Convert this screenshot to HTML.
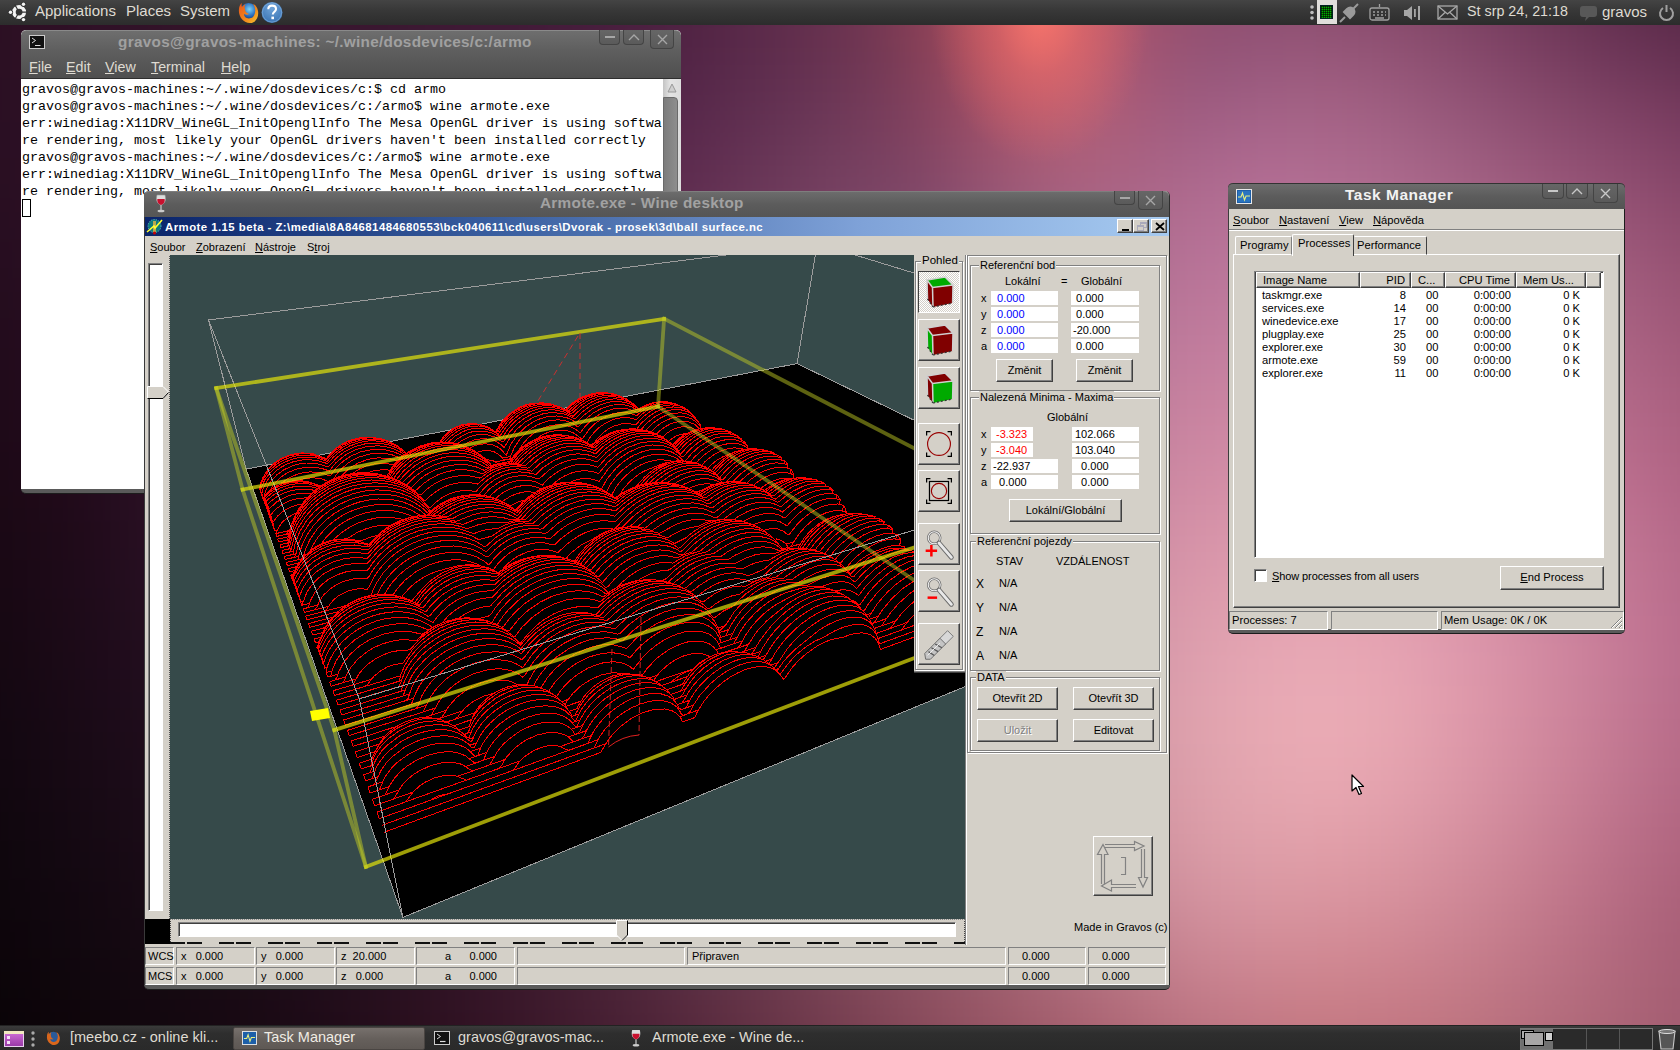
<!DOCTYPE html>
<html><head><meta charset="utf-8">
<style>
*{box-sizing:border-box;margin:0;padding:0}
html,body{width:1680px;height:1050px;overflow:hidden}
body{position:relative;font-family:"Liberation Sans",sans-serif;font-size:11px;color:#000;
background:#2a0f22}
.a{position:absolute}
#bg{left:0;top:0;width:1680px;height:1050px;
background:
 radial-gradient(ellipse 230px 190px at 1035px 28px, rgba(255,118,104,1) 0%, rgba(240,105,100,.75) 35%, rgba(200,90,100,0) 100%),
 radial-gradient(ellipse 520px 420px at 1330px 720px, rgba(238,176,186,1) 0%, rgba(225,160,175,.85) 40%, rgba(190,120,150,0) 100%),
 linear-gradient(115deg, #1e0a18 0%, #2a0f22 30%, #6a3358 52%, #a8698c 66%, #b8728e 78%, #7a3f60 100%);
}
.panel{left:0;width:1680px;height:25px;background:linear-gradient(#444 0%,#383838 40%,#2c2c2c 100%);color:#dfdbd2;font-size:15px}
.ptxt{position:absolute;top:3px;white-space:pre}
.mono{font-family:"Liberation Mono",monospace}
.win{position:absolute;background:#d4d0c8}
.tb{position:absolute;left:0;right:0;top:0;background:linear-gradient(#727272,#5c5c5c 60%,#555);border-radius:5px 5px 0 0}
.ttl{position:absolute;font-weight:bold;font-size:15px;white-space:pre;color:#a4a4a4;letter-spacing:.4px}
.wbtn{position:absolute;border:1px solid #444;border-top:none;border-radius:0 0 4px 4px;background:linear-gradient(#666,#5a5a5a)}
.t11{font-size:11px;white-space:pre;position:absolute}
.fld{position:absolute;background:#fff;height:16px;font-size:11px;line-height:16px;white-space:pre}
.btn{position:absolute;background:#d4d0c8;border:1px solid;border-color:#fff #404040 #404040 #fff;box-shadow:inset -1px -1px 0 #808080;font-size:11px;text-align:center;white-space:pre}
.grp{position:absolute;border:1px solid #808080;box-shadow:1px 1px 0 #fff, inset 1px 1px 0 #fff}
.grpl{position:absolute;background:#d4d0c8;font-size:11px;white-space:pre;padding:0 1px}
.sunk{position:absolute;border:1px solid;border-color:#808080 #fff #fff #808080}
</style></head><body>
<!--BG--><div class="a" style="left:0;top:0;width:1680px;height:1050px;overflow:hidden"><svg class="a" style="left:-120px;top:-120px;filter:blur(24px)" width="1920" height="1290" shape-rendering="crispEdges"><rect x="0" y="0" width="41" height="41" fill="#270c1d"/><rect x="40" y="0" width="41" height="41" fill="#290d1e"/><rect x="80" y="0" width="41" height="41" fill="#2a0e20"/><rect x="120" y="0" width="41" height="41" fill="#2c0e21"/><rect x="160" y="0" width="41" height="41" fill="#2e0f23"/><rect x="200" y="0" width="41" height="41" fill="#2f1024"/><rect x="240" y="0" width="41" height="41" fill="#301125"/><rect x="280" y="0" width="41" height="41" fill="#321126"/><rect x="320" y="0" width="41" height="41" fill="#331227"/><rect x="360" y="0" width="41" height="41" fill="#341229"/><rect x="400" y="0" width="41" height="41" fill="#36132a"/><rect x="440" y="0" width="41" height="41" fill="#37142b"/><rect x="480" y="0" width="41" height="41" fill="#39152c"/><rect x="520" y="0" width="41" height="41" fill="#3b152e"/><rect x="560" y="0" width="41" height="41" fill="#3d1630"/><rect x="600" y="0" width="41" height="41" fill="#3f1732"/><rect x="640" y="0" width="41" height="41" fill="#421934"/><rect x="680" y="0" width="41" height="41" fill="#451a36"/><rect x="720" y="0" width="41" height="41" fill="#481c38"/><rect x="760" y="0" width="41" height="41" fill="#4d1e3a"/><rect x="800" y="0" width="41" height="41" fill="#52213d"/><rect x="840" y="0" width="41" height="41" fill="#59253f"/><rect x="880" y="0" width="41" height="41" fill="#612942"/><rect x="920" y="0" width="41" height="41" fill="#6a2d45"/><rect x="960" y="0" width="41" height="41" fill="#763348"/><rect x="1000" y="0" width="41" height="41" fill="#83394c"/><rect x="1040" y="0" width="41" height="41" fill="#913f4f"/><rect x="1080" y="0" width="41" height="41" fill="#9f4653"/><rect x="1120" y="0" width="41" height="41" fill="#a84a56"/><rect x="1160" y="0" width="41" height="41" fill="#ab4d59"/><rect x="1200" y="0" width="41" height="41" fill="#a74c5b"/><rect x="1240" y="0" width="41" height="41" fill="#9e4a5d"/><rect x="1280" y="0" width="41" height="41" fill="#95475e"/><rect x="1320" y="0" width="41" height="41" fill="#8d445e"/><rect x="1360" y="0" width="41" height="41" fill="#86425e"/><rect x="1400" y="0" width="41" height="41" fill="#80405d"/><rect x="1440" y="0" width="41" height="41" fill="#7b3d5b"/><rect x="1480" y="0" width="41" height="41" fill="#763a58"/><rect x="1520" y="0" width="41" height="41" fill="#703755"/><rect x="1560" y="0" width="41" height="41" fill="#6a3251"/><rect x="1600" y="0" width="41" height="41" fill="#642e4d"/><rect x="1640" y="0" width="41" height="41" fill="#5d2a48"/><rect x="1680" y="0" width="41" height="41" fill="#572544"/><rect x="1720" y="0" width="41" height="41" fill="#512240"/><rect x="1760" y="0" width="41" height="41" fill="#4c1e3c"/><rect x="1800" y="0" width="41" height="41" fill="#471b39"/><rect x="1840" y="0" width="41" height="41" fill="#441836"/><rect x="1880" y="0" width="41" height="41" fill="#411534"/><rect x="0" y="40" width="41" height="41" fill="#270c1d"/><rect x="40" y="40" width="41" height="41" fill="#290d1f"/><rect x="80" y="40" width="41" height="41" fill="#2b0e21"/><rect x="120" y="40" width="41" height="41" fill="#2c0f22"/><rect x="160" y="40" width="41" height="41" fill="#2e1024"/><rect x="200" y="40" width="41" height="41" fill="#2f1025"/><rect x="240" y="40" width="41" height="41" fill="#311126"/><rect x="280" y="40" width="41" height="41" fill="#321227"/><rect x="320" y="40" width="41" height="41" fill="#331229"/><rect x="360" y="40" width="41" height="41" fill="#35132a"/><rect x="400" y="40" width="41" height="41" fill="#36142b"/><rect x="440" y="40" width="41" height="41" fill="#38152c"/><rect x="480" y="40" width="41" height="41" fill="#39152e"/><rect x="520" y="40" width="41" height="41" fill="#3b162f"/><rect x="560" y="40" width="41" height="41" fill="#3d1731"/><rect x="600" y="40" width="41" height="41" fill="#3f1833"/><rect x="640" y="40" width="41" height="41" fill="#421935"/><rect x="680" y="40" width="41" height="41" fill="#451b38"/><rect x="720" y="40" width="41" height="41" fill="#481d3a"/><rect x="760" y="40" width="41" height="41" fill="#4c1f3d"/><rect x="800" y="40" width="41" height="41" fill="#51223f"/><rect x="840" y="40" width="41" height="41" fill="#582542"/><rect x="880" y="40" width="41" height="41" fill="#5f2945"/><rect x="920" y="40" width="41" height="41" fill="#682e48"/><rect x="960" y="40" width="41" height="41" fill="#74344b"/><rect x="1000" y="40" width="41" height="41" fill="#833a4f"/><rect x="1040" y="40" width="41" height="41" fill="#944253"/><rect x="1080" y="40" width="41" height="41" fill="#a64a57"/><rect x="1120" y="40" width="41" height="41" fill="#b2505b"/><rect x="1160" y="40" width="41" height="41" fill="#b5535e"/><rect x="1200" y="40" width="41" height="41" fill="#ae5161"/><rect x="1240" y="40" width="41" height="41" fill="#a34e63"/><rect x="1280" y="40" width="41" height="41" fill="#974b64"/><rect x="1320" y="40" width="41" height="41" fill="#8f4865"/><rect x="1360" y="40" width="41" height="41" fill="#894765"/><rect x="1400" y="40" width="41" height="41" fill="#854564"/><rect x="1440" y="40" width="41" height="41" fill="#804362"/><rect x="1480" y="40" width="41" height="41" fill="#7c405f"/><rect x="1520" y="40" width="41" height="41" fill="#773c5c"/><rect x="1560" y="40" width="41" height="41" fill="#713857"/><rect x="1600" y="40" width="41" height="41" fill="#6a3353"/><rect x="1640" y="40" width="41" height="41" fill="#632e4e"/><rect x="1680" y="40" width="41" height="41" fill="#5c2a49"/><rect x="1720" y="40" width="41" height="41" fill="#562645"/><rect x="1760" y="40" width="41" height="41" fill="#512241"/><rect x="1800" y="40" width="41" height="41" fill="#4d1f3e"/><rect x="1840" y="40" width="41" height="41" fill="#491c3b"/><rect x="1880" y="40" width="41" height="41" fill="#461a39"/><rect x="0" y="80" width="41" height="41" fill="#270d1e"/><rect x="40" y="80" width="41" height="41" fill="#290e20"/><rect x="80" y="80" width="41" height="41" fill="#2b0e21"/><rect x="120" y="80" width="41" height="41" fill="#2d0f23"/><rect x="160" y="80" width="41" height="41" fill="#2e1025"/><rect x="200" y="80" width="41" height="41" fill="#301126"/><rect x="240" y="80" width="41" height="41" fill="#311127"/><rect x="280" y="80" width="41" height="41" fill="#321228"/><rect x="320" y="80" width="41" height="41" fill="#34132a"/><rect x="360" y="80" width="41" height="41" fill="#35142b"/><rect x="400" y="80" width="41" height="41" fill="#37142c"/><rect x="440" y="80" width="41" height="41" fill="#38152e"/><rect x="480" y="80" width="41" height="41" fill="#3a162f"/><rect x="520" y="80" width="41" height="41" fill="#3c1731"/><rect x="560" y="80" width="41" height="41" fill="#3e1833"/><rect x="600" y="80" width="41" height="41" fill="#401935"/><rect x="640" y="80" width="41" height="41" fill="#421a37"/><rect x="680" y="80" width="41" height="41" fill="#451c3a"/><rect x="720" y="80" width="41" height="41" fill="#491d3c"/><rect x="760" y="80" width="41" height="41" fill="#4c203f"/><rect x="800" y="80" width="41" height="41" fill="#512342"/><rect x="840" y="80" width="41" height="41" fill="#572645"/><rect x="880" y="80" width="41" height="41" fill="#5e2a48"/><rect x="920" y="80" width="41" height="41" fill="#662f4b"/><rect x="960" y="80" width="41" height="41" fill="#71344e"/><rect x="1000" y="80" width="41" height="41" fill="#803b51"/><rect x="1040" y="80" width="41" height="41" fill="#944356"/><rect x="1080" y="80" width="41" height="41" fill="#aa4d5a"/><rect x="1120" y="80" width="41" height="41" fill="#bc555f"/><rect x="1160" y="80" width="41" height="41" fill="#bf5863"/><rect x="1200" y="80" width="41" height="41" fill="#b45666"/><rect x="1240" y="80" width="41" height="41" fill="#a55168"/><rect x="1280" y="80" width="41" height="41" fill="#974e6a"/><rect x="1320" y="80" width="41" height="41" fill="#8f4c6b"/><rect x="1360" y="80" width="41" height="41" fill="#8c4b6c"/><rect x="1400" y="80" width="41" height="41" fill="#894a6b"/><rect x="1440" y="80" width="41" height="41" fill="#87496a"/><rect x="1480" y="80" width="41" height="41" fill="#834667"/><rect x="1520" y="80" width="41" height="41" fill="#7e4363"/><rect x="1560" y="80" width="41" height="41" fill="#783e5f"/><rect x="1600" y="80" width="41" height="41" fill="#713959"/><rect x="1640" y="80" width="41" height="41" fill="#6a3454"/><rect x="1680" y="80" width="41" height="41" fill="#632f4f"/><rect x="1720" y="80" width="41" height="41" fill="#5d2b4b"/><rect x="1760" y="80" width="41" height="41" fill="#572747"/><rect x="1800" y="80" width="41" height="41" fill="#532443"/><rect x="1840" y="80" width="41" height="41" fill="#502141"/><rect x="1880" y="80" width="41" height="41" fill="#4d1e3e"/><rect x="0" y="120" width="41" height="41" fill="#270d1e"/><rect x="40" y="120" width="41" height="41" fill="#290e20"/><rect x="80" y="120" width="41" height="41" fill="#2b0f22"/><rect x="120" y="120" width="41" height="41" fill="#2d1024"/><rect x="160" y="120" width="41" height="41" fill="#2e1025"/><rect x="200" y="120" width="41" height="41" fill="#301127"/><rect x="240" y="120" width="41" height="41" fill="#311228"/><rect x="280" y="120" width="41" height="41" fill="#331329"/><rect x="320" y="120" width="41" height="41" fill="#34132b"/><rect x="360" y="120" width="41" height="41" fill="#36142c"/><rect x="400" y="120" width="41" height="41" fill="#37152d"/><rect x="440" y="120" width="41" height="41" fill="#39162f"/><rect x="480" y="120" width="41" height="41" fill="#3a1730"/><rect x="520" y="120" width="41" height="41" fill="#3c1832"/><rect x="560" y="120" width="41" height="41" fill="#3f1935"/><rect x="600" y="120" width="41" height="41" fill="#411a37"/><rect x="640" y="120" width="41" height="41" fill="#431b39"/><rect x="680" y="120" width="41" height="41" fill="#461d3c"/><rect x="720" y="120" width="41" height="41" fill="#4a1f3f"/><rect x="760" y="120" width="41" height="41" fill="#4d2142"/><rect x="800" y="120" width="41" height="41" fill="#522444"/><rect x="840" y="120" width="41" height="41" fill="#582848"/><rect x="880" y="120" width="41" height="41" fill="#5e2c4b"/><rect x="920" y="120" width="41" height="41" fill="#66304e"/><rect x="960" y="120" width="41" height="41" fill="#6f3551"/><rect x="1000" y="120" width="41" height="41" fill="#7d3b54"/><rect x="1040" y="120" width="41" height="41" fill="#924458"/><rect x="1080" y="120" width="41" height="41" fill="#ab4e5d"/><rect x="1120" y="120" width="41" height="41" fill="#c15963"/><rect x="1160" y="120" width="41" height="41" fill="#c55d68"/><rect x="1200" y="120" width="41" height="41" fill="#b6596b"/><rect x="1240" y="120" width="41" height="41" fill="#a4536d"/><rect x="1280" y="120" width="41" height="41" fill="#965070"/><rect x="1320" y="120" width="41" height="41" fill="#915072"/><rect x="1360" y="120" width="41" height="41" fill="#905173"/><rect x="1400" y="120" width="41" height="41" fill="#905173"/><rect x="1440" y="120" width="41" height="41" fill="#8e5072"/><rect x="1480" y="120" width="41" height="41" fill="#8b4d6f"/><rect x="1520" y="120" width="41" height="41" fill="#864a6b"/><rect x="1560" y="120" width="41" height="41" fill="#804566"/><rect x="1600" y="120" width="41" height="41" fill="#793f61"/><rect x="1640" y="120" width="41" height="41" fill="#723a5b"/><rect x="1680" y="120" width="41" height="41" fill="#6b3556"/><rect x="1720" y="120" width="41" height="41" fill="#643151"/><rect x="1760" y="120" width="41" height="41" fill="#5f2d4d"/><rect x="1800" y="120" width="41" height="41" fill="#5b2a4a"/><rect x="1840" y="120" width="41" height="41" fill="#582747"/><rect x="1880" y="120" width="41" height="41" fill="#552444"/><rect x="0" y="160" width="41" height="41" fill="#260d1e"/><rect x="40" y="160" width="41" height="41" fill="#280e20"/><rect x="80" y="160" width="41" height="41" fill="#2b0f22"/><rect x="120" y="160" width="41" height="41" fill="#2d1024"/><rect x="160" y="160" width="41" height="41" fill="#2e1126"/><rect x="200" y="160" width="41" height="41" fill="#301127"/><rect x="240" y="160" width="41" height="41" fill="#311228"/><rect x="280" y="160" width="41" height="41" fill="#33132a"/><rect x="320" y="160" width="41" height="41" fill="#34142b"/><rect x="360" y="160" width="41" height="41" fill="#36152d"/><rect x="400" y="160" width="41" height="41" fill="#38162e"/><rect x="440" y="160" width="41" height="41" fill="#391630"/><rect x="480" y="160" width="41" height="41" fill="#3b1832"/><rect x="520" y="160" width="41" height="41" fill="#3d1934"/><rect x="560" y="160" width="41" height="41" fill="#401a36"/><rect x="600" y="160" width="41" height="41" fill="#421b39"/><rect x="640" y="160" width="41" height="41" fill="#451c3b"/><rect x="680" y="160" width="41" height="41" fill="#481e3e"/><rect x="720" y="160" width="41" height="41" fill="#4c2041"/><rect x="760" y="160" width="41" height="41" fill="#502344"/><rect x="800" y="160" width="41" height="41" fill="#542647"/><rect x="840" y="160" width="41" height="41" fill="#5a2a4b"/><rect x="880" y="160" width="41" height="41" fill="#602e4e"/><rect x="920" y="160" width="41" height="41" fill="#673251"/><rect x="960" y="160" width="41" height="41" fill="#6f3754"/><rect x="1000" y="160" width="41" height="41" fill="#7c3c57"/><rect x="1040" y="160" width="41" height="41" fill="#8e445b"/><rect x="1080" y="160" width="41" height="41" fill="#a54d60"/><rect x="1120" y="160" width="41" height="41" fill="#ba5866"/><rect x="1160" y="160" width="41" height="41" fill="#c05c6b"/><rect x="1200" y="160" width="41" height="41" fill="#b35a6f"/><rect x="1240" y="160" width="41" height="41" fill="#a35673"/><rect x="1280" y="160" width="41" height="41" fill="#985476"/><rect x="1320" y="160" width="41" height="41" fill="#955579"/><rect x="1360" y="160" width="41" height="41" fill="#97577b"/><rect x="1400" y="160" width="41" height="41" fill="#98587b"/><rect x="1440" y="160" width="41" height="41" fill="#97587a"/><rect x="1480" y="160" width="41" height="41" fill="#945577"/><rect x="1520" y="160" width="41" height="41" fill="#8f5173"/><rect x="1560" y="160" width="41" height="41" fill="#8a4c6e"/><rect x="1600" y="160" width="41" height="41" fill="#834669"/><rect x="1640" y="160" width="41" height="41" fill="#7c4163"/><rect x="1680" y="160" width="41" height="41" fill="#753c5e"/><rect x="1720" y="160" width="41" height="41" fill="#6f3759"/><rect x="1760" y="160" width="41" height="41" fill="#693455"/><rect x="1800" y="160" width="41" height="41" fill="#653051"/><rect x="1840" y="160" width="41" height="41" fill="#612d4e"/><rect x="1880" y="160" width="41" height="41" fill="#5d294a"/><rect x="0" y="200" width="41" height="41" fill="#250c1e"/><rect x="40" y="200" width="41" height="41" fill="#280e20"/><rect x="80" y="200" width="41" height="41" fill="#2a0f22"/><rect x="120" y="200" width="41" height="41" fill="#2c1024"/><rect x="160" y="200" width="41" height="41" fill="#2e1026"/><rect x="200" y="200" width="41" height="41" fill="#301127"/><rect x="240" y="200" width="41" height="41" fill="#311229"/><rect x="280" y="200" width="41" height="41" fill="#33132a"/><rect x="320" y="200" width="41" height="41" fill="#35142c"/><rect x="360" y="200" width="41" height="41" fill="#36152e"/><rect x="400" y="200" width="41" height="41" fill="#38162f"/><rect x="440" y="200" width="41" height="41" fill="#3a1731"/><rect x="480" y="200" width="41" height="41" fill="#3c1833"/><rect x="520" y="200" width="41" height="41" fill="#3f1936"/><rect x="560" y="200" width="41" height="41" fill="#411b38"/><rect x="600" y="200" width="41" height="41" fill="#441c3b"/><rect x="640" y="200" width="41" height="41" fill="#471e3e"/><rect x="680" y="200" width="41" height="41" fill="#4b2041"/><rect x="720" y="200" width="41" height="41" fill="#4f2244"/><rect x="760" y="200" width="41" height="41" fill="#532547"/><rect x="800" y="200" width="41" height="41" fill="#58294b"/><rect x="840" y="200" width="41" height="41" fill="#5d2d4e"/><rect x="880" y="200" width="41" height="41" fill="#633152"/><rect x="920" y="200" width="41" height="41" fill="#6a3555"/><rect x="960" y="200" width="41" height="41" fill="#723a58"/><rect x="1000" y="200" width="41" height="41" fill="#7c3e5b"/><rect x="1040" y="200" width="41" height="41" fill="#8c455f"/><rect x="1080" y="200" width="41" height="41" fill="#9f4e64"/><rect x="1120" y="200" width="41" height="41" fill="#b1576a"/><rect x="1160" y="200" width="41" height="41" fill="#b75c6f"/><rect x="1200" y="200" width="41" height="41" fill="#b05c74"/><rect x="1240" y="200" width="41" height="41" fill="#a55a79"/><rect x="1280" y="200" width="41" height="41" fill="#9e5a7d"/><rect x="1320" y="200" width="41" height="41" fill="#9d5c81"/><rect x="1360" y="200" width="41" height="41" fill="#a05f83"/><rect x="1400" y="200" width="41" height="41" fill="#a26083"/><rect x="1440" y="200" width="41" height="41" fill="#a15f82"/><rect x="1480" y="200" width="41" height="41" fill="#9d5d7f"/><rect x="1520" y="200" width="41" height="41" fill="#98587b"/><rect x="1560" y="200" width="41" height="41" fill="#925476"/><rect x="1600" y="200" width="41" height="41" fill="#8c4e71"/><rect x="1640" y="200" width="41" height="41" fill="#86496b"/><rect x="1680" y="200" width="41" height="41" fill="#804466"/><rect x="1720" y="200" width="41" height="41" fill="#7b3f62"/><rect x="1760" y="200" width="41" height="41" fill="#763b5e"/><rect x="1800" y="200" width="41" height="41" fill="#703759"/><rect x="1840" y="200" width="41" height="41" fill="#6b3355"/><rect x="1880" y="200" width="41" height="41" fill="#672f51"/><rect x="0" y="240" width="41" height="41" fill="#240c1d"/><rect x="40" y="240" width="41" height="41" fill="#270d20"/><rect x="80" y="240" width="41" height="41" fill="#290e22"/><rect x="120" y="240" width="41" height="41" fill="#2b0f24"/><rect x="160" y="240" width="41" height="41" fill="#2d1026"/><rect x="200" y="240" width="41" height="41" fill="#2f1127"/><rect x="240" y="240" width="41" height="41" fill="#311229"/><rect x="280" y="240" width="41" height="41" fill="#33132b"/><rect x="320" y="240" width="41" height="41" fill="#35142d"/><rect x="360" y="240" width="41" height="41" fill="#37152e"/><rect x="400" y="240" width="41" height="41" fill="#391630"/><rect x="440" y="240" width="41" height="41" fill="#3b1832"/><rect x="480" y="240" width="41" height="41" fill="#3e1935"/><rect x="520" y="240" width="41" height="41" fill="#401a37"/><rect x="560" y="240" width="41" height="41" fill="#431c3a"/><rect x="600" y="240" width="41" height="41" fill="#461d3d"/><rect x="640" y="240" width="41" height="41" fill="#4a1f40"/><rect x="680" y="240" width="41" height="41" fill="#4e2143"/><rect x="720" y="240" width="41" height="41" fill="#522446"/><rect x="760" y="240" width="41" height="41" fill="#57274a"/><rect x="800" y="240" width="41" height="41" fill="#5c2b4e"/><rect x="840" y="240" width="41" height="41" fill="#623052"/><rect x="880" y="240" width="41" height="41" fill="#683556"/><rect x="920" y="240" width="41" height="41" fill="#6e3a5a"/><rect x="960" y="240" width="41" height="41" fill="#753d5d"/><rect x="1000" y="240" width="41" height="41" fill="#7d4160"/><rect x="1040" y="240" width="41" height="41" fill="#894764"/><rect x="1080" y="240" width="41" height="41" fill="#994f6a"/><rect x="1120" y="240" width="41" height="41" fill="#a75770"/><rect x="1160" y="240" width="41" height="41" fill="#ae5d75"/><rect x="1200" y="240" width="41" height="41" fill="#ac5f7a"/><rect x="1240" y="240" width="41" height="41" fill="#a75f7f"/><rect x="1280" y="240" width="41" height="41" fill="#a46084"/><rect x="1320" y="240" width="41" height="41" fill="#a66389"/><rect x="1360" y="240" width="41" height="41" fill="#a9668b"/><rect x="1400" y="240" width="41" height="41" fill="#aa678b"/><rect x="1440" y="240" width="41" height="41" fill="#a8668a"/><rect x="1480" y="240" width="41" height="41" fill="#a56487"/><rect x="1520" y="240" width="41" height="41" fill="#a06082"/><rect x="1560" y="240" width="41" height="41" fill="#9b5b7e"/><rect x="1600" y="240" width="41" height="41" fill="#955678"/><rect x="1640" y="240" width="41" height="41" fill="#905073"/><rect x="1680" y="240" width="41" height="41" fill="#8a4b6e"/><rect x="1720" y="240" width="41" height="41" fill="#86476a"/><rect x="1760" y="240" width="41" height="41" fill="#814266"/><rect x="1800" y="240" width="41" height="41" fill="#7b3e61"/><rect x="1840" y="240" width="41" height="41" fill="#75395c"/><rect x="1880" y="240" width="41" height="41" fill="#703557"/><rect x="0" y="280" width="41" height="41" fill="#230c1c"/><rect x="40" y="280" width="41" height="41" fill="#260d1f"/><rect x="80" y="280" width="41" height="41" fill="#280e21"/><rect x="120" y="280" width="41" height="41" fill="#2b0f23"/><rect x="160" y="280" width="41" height="41" fill="#2d1025"/><rect x="200" y="280" width="41" height="41" fill="#2f1127"/><rect x="240" y="280" width="41" height="41" fill="#311229"/><rect x="280" y="280" width="41" height="41" fill="#33132b"/><rect x="320" y="280" width="41" height="41" fill="#35142d"/><rect x="360" y="280" width="41" height="41" fill="#37152f"/><rect x="400" y="280" width="41" height="41" fill="#3a1731"/><rect x="440" y="280" width="41" height="41" fill="#3c1834"/><rect x="480" y="280" width="41" height="41" fill="#3f1a36"/><rect x="520" y="280" width="41" height="41" fill="#421b39"/><rect x="560" y="280" width="41" height="41" fill="#451d3c"/><rect x="600" y="280" width="41" height="41" fill="#481f3f"/><rect x="640" y="280" width="41" height="41" fill="#4c2142"/><rect x="680" y="280" width="41" height="41" fill="#502445"/><rect x="720" y="280" width="41" height="41" fill="#552649"/><rect x="760" y="280" width="41" height="41" fill="#5a2a4d"/><rect x="800" y="280" width="41" height="41" fill="#602e51"/><rect x="840" y="280" width="41" height="41" fill="#663455"/><rect x="880" y="280" width="41" height="41" fill="#6c395a"/><rect x="920" y="280" width="41" height="41" fill="#733e5e"/><rect x="960" y="280" width="41" height="41" fill="#784262"/><rect x="1000" y="280" width="41" height="41" fill="#7c4464"/><rect x="1040" y="280" width="41" height="41" fill="#874a69"/><rect x="1080" y="280" width="41" height="41" fill="#945270"/><rect x="1120" y="280" width="41" height="41" fill="#9f5a77"/><rect x="1160" y="280" width="41" height="41" fill="#a75f7c"/><rect x="1200" y="280" width="41" height="41" fill="#aa6281"/><rect x="1240" y="280" width="41" height="41" fill="#aa6486"/><rect x="1280" y="280" width="41" height="41" fill="#ab678a"/><rect x="1320" y="280" width="41" height="41" fill="#ae6a90"/><rect x="1360" y="280" width="41" height="41" fill="#b16c92"/><rect x="1400" y="280" width="41" height="41" fill="#b16d92"/><rect x="1440" y="280" width="41" height="41" fill="#af6c90"/><rect x="1480" y="280" width="41" height="41" fill="#ac6a8d"/><rect x="1520" y="280" width="41" height="41" fill="#a86689"/><rect x="1560" y="280" width="41" height="41" fill="#a36284"/><rect x="1600" y="280" width="41" height="41" fill="#9e5d7f"/><rect x="1640" y="280" width="41" height="41" fill="#99577a"/><rect x="1680" y="280" width="41" height="41" fill="#945275"/><rect x="1720" y="280" width="41" height="41" fill="#8f4e71"/><rect x="1760" y="280" width="41" height="41" fill="#8a496c"/><rect x="1800" y="280" width="41" height="41" fill="#844467"/><rect x="1840" y="280" width="41" height="41" fill="#7e3f62"/><rect x="1880" y="280" width="41" height="41" fill="#783a5d"/><rect x="0" y="320" width="41" height="41" fill="#220b1b"/><rect x="40" y="320" width="41" height="41" fill="#240c1e"/><rect x="80" y="320" width="41" height="41" fill="#270d20"/><rect x="120" y="320" width="41" height="41" fill="#290e22"/><rect x="160" y="320" width="41" height="41" fill="#2c0f24"/><rect x="200" y="320" width="41" height="41" fill="#2e1126"/><rect x="240" y="320" width="41" height="41" fill="#301229"/><rect x="280" y="320" width="41" height="41" fill="#32132b"/><rect x="320" y="320" width="41" height="41" fill="#35142d"/><rect x="360" y="320" width="41" height="41" fill="#37162f"/><rect x="400" y="320" width="41" height="41" fill="#3a1732"/><rect x="440" y="320" width="41" height="41" fill="#3d1934"/><rect x="480" y="320" width="41" height="41" fill="#401a37"/><rect x="520" y="320" width="41" height="41" fill="#431c3a"/><rect x="560" y="320" width="41" height="41" fill="#461e3d"/><rect x="600" y="320" width="41" height="41" fill="#4a2040"/><rect x="640" y="320" width="41" height="41" fill="#4f2344"/><rect x="680" y="320" width="41" height="41" fill="#532648"/><rect x="720" y="320" width="41" height="41" fill="#58294b"/><rect x="760" y="320" width="41" height="41" fill="#5e2d50"/><rect x="800" y="320" width="41" height="41" fill="#643254"/><rect x="840" y="320" width="41" height="41" fill="#6a3759"/><rect x="880" y="320" width="41" height="41" fill="#703c5d"/><rect x="920" y="320" width="41" height="41" fill="#764162"/><rect x="960" y="320" width="41" height="41" fill="#7b4566"/><rect x="1000" y="320" width="41" height="41" fill="#7f4869"/><rect x="1040" y="320" width="41" height="41" fill="#874d6f"/><rect x="1080" y="320" width="41" height="41" fill="#925575"/><rect x="1120" y="320" width="41" height="41" fill="#9c5c7c"/><rect x="1160" y="320" width="41" height="41" fill="#a46282"/><rect x="1200" y="320" width="41" height="41" fill="#aa6687"/><rect x="1240" y="320" width="41" height="41" fill="#ad6a8c"/><rect x="1280" y="320" width="41" height="41" fill="#b06d90"/><rect x="1320" y="320" width="41" height="41" fill="#b47095"/><rect x="1360" y="320" width="41" height="41" fill="#b67297"/><rect x="1400" y="320" width="41" height="41" fill="#b77297"/><rect x="1440" y="320" width="41" height="41" fill="#b57195"/><rect x="1480" y="320" width="41" height="41" fill="#b26f93"/><rect x="1520" y="320" width="41" height="41" fill="#ae6c8f"/><rect x="1560" y="320" width="41" height="41" fill="#aa688a"/><rect x="1600" y="320" width="41" height="41" fill="#a66385"/><rect x="1640" y="320" width="41" height="41" fill="#a15e80"/><rect x="1680" y="320" width="41" height="41" fill="#9c597b"/><rect x="1720" y="320" width="41" height="41" fill="#975476"/><rect x="1760" y="320" width="41" height="41" fill="#924f71"/><rect x="1800" y="320" width="41" height="41" fill="#8c4a6c"/><rect x="1840" y="320" width="41" height="41" fill="#864567"/><rect x="1880" y="320" width="41" height="41" fill="#803f62"/><rect x="0" y="360" width="41" height="41" fill="#200a1a"/><rect x="40" y="360" width="41" height="41" fill="#230b1c"/><rect x="80" y="360" width="41" height="41" fill="#250c1f"/><rect x="120" y="360" width="41" height="41" fill="#280e21"/><rect x="160" y="360" width="41" height="41" fill="#2a0f23"/><rect x="200" y="360" width="41" height="41" fill="#2d1026"/><rect x="240" y="360" width="41" height="41" fill="#2f1128"/><rect x="280" y="360" width="41" height="41" fill="#32132b"/><rect x="320" y="360" width="41" height="41" fill="#35142d"/><rect x="360" y="360" width="41" height="41" fill="#371630"/><rect x="400" y="360" width="41" height="41" fill="#3a1732"/><rect x="440" y="360" width="41" height="41" fill="#3d1935"/><rect x="480" y="360" width="41" height="41" fill="#411b38"/><rect x="520" y="360" width="41" height="41" fill="#441d3b"/><rect x="560" y="360" width="41" height="41" fill="#481f3f"/><rect x="600" y="360" width="41" height="41" fill="#4c2242"/><rect x="640" y="360" width="41" height="41" fill="#512546"/><rect x="680" y="360" width="41" height="41" fill="#56284a"/><rect x="720" y="360" width="41" height="41" fill="#5b2c4e"/><rect x="760" y="360" width="41" height="41" fill="#613052"/><rect x="800" y="360" width="41" height="41" fill="#663557"/><rect x="840" y="360" width="41" height="41" fill="#6d3a5c"/><rect x="880" y="360" width="41" height="41" fill="#733f61"/><rect x="920" y="360" width="41" height="41" fill="#784465"/><rect x="960" y="360" width="41" height="41" fill="#7d486a"/><rect x="1000" y="360" width="41" height="41" fill="#834d6f"/><rect x="1040" y="360" width="41" height="41" fill="#8a5274"/><rect x="1080" y="360" width="41" height="41" fill="#93597a"/><rect x="1120" y="360" width="41" height="41" fill="#9d6081"/><rect x="1160" y="360" width="41" height="41" fill="#a56687"/><rect x="1200" y="360" width="41" height="41" fill="#ab6a8c"/><rect x="1240" y="360" width="41" height="41" fill="#b16e91"/><rect x="1280" y="360" width="41" height="41" fill="#b57195"/><rect x="1320" y="360" width="41" height="41" fill="#b97499"/><rect x="1360" y="360" width="41" height="41" fill="#bb769b"/><rect x="1400" y="360" width="41" height="41" fill="#bc779b"/><rect x="1440" y="360" width="41" height="41" fill="#ba7699"/><rect x="1480" y="360" width="41" height="41" fill="#b87497"/><rect x="1520" y="360" width="41" height="41" fill="#b57193"/><rect x="1560" y="360" width="41" height="41" fill="#b16d8f"/><rect x="1600" y="360" width="41" height="41" fill="#ad688a"/><rect x="1640" y="360" width="41" height="41" fill="#a86485"/><rect x="1680" y="360" width="41" height="41" fill="#a35f80"/><rect x="1720" y="360" width="41" height="41" fill="#9e5a7b"/><rect x="1760" y="360" width="41" height="41" fill="#995476"/><rect x="1800" y="360" width="41" height="41" fill="#934f70"/><rect x="1840" y="360" width="41" height="41" fill="#8d4a6b"/><rect x="1880" y="360" width="41" height="41" fill="#874466"/><rect x="0" y="400" width="41" height="41" fill="#1e0918"/><rect x="40" y="400" width="41" height="41" fill="#210b1b"/><rect x="80" y="400" width="41" height="41" fill="#230c1d"/><rect x="120" y="400" width="41" height="41" fill="#260d1f"/><rect x="160" y="400" width="41" height="41" fill="#290e22"/><rect x="200" y="400" width="41" height="41" fill="#2c1024"/><rect x="240" y="400" width="41" height="41" fill="#2e1127"/><rect x="280" y="400" width="41" height="41" fill="#31132a"/><rect x="320" y="400" width="41" height="41" fill="#34142d"/><rect x="360" y="400" width="41" height="41" fill="#371630"/><rect x="400" y="400" width="41" height="41" fill="#3b1833"/><rect x="440" y="400" width="41" height="41" fill="#3e1a36"/><rect x="480" y="400" width="41" height="41" fill="#411c39"/><rect x="520" y="400" width="41" height="41" fill="#451e3c"/><rect x="560" y="400" width="41" height="41" fill="#492140"/><rect x="600" y="400" width="41" height="41" fill="#4e2343"/><rect x="640" y="400" width="41" height="41" fill="#522747"/><rect x="680" y="400" width="41" height="41" fill="#582a4c"/><rect x="720" y="400" width="41" height="41" fill="#5d2e50"/><rect x="760" y="400" width="41" height="41" fill="#633255"/><rect x="800" y="400" width="41" height="41" fill="#693759"/><rect x="840" y="400" width="41" height="41" fill="#6f3d5e"/><rect x="880" y="400" width="41" height="41" fill="#754264"/><rect x="920" y="400" width="41" height="41" fill="#7b4769"/><rect x="960" y="400" width="41" height="41" fill="#814c6e"/><rect x="1000" y="400" width="41" height="41" fill="#875173"/><rect x="1040" y="400" width="41" height="41" fill="#8e5779"/><rect x="1080" y="400" width="41" height="41" fill="#965d7f"/><rect x="1120" y="400" width="41" height="41" fill="#9f6385"/><rect x="1160" y="400" width="41" height="41" fill="#a7698b"/><rect x="1200" y="400" width="41" height="41" fill="#ae6e90"/><rect x="1240" y="400" width="41" height="41" fill="#b47294"/><rect x="1280" y="400" width="41" height="41" fill="#b97698"/><rect x="1320" y="400" width="41" height="41" fill="#bd799b"/><rect x="1360" y="400" width="41" height="41" fill="#c07a9d"/><rect x="1400" y="400" width="41" height="41" fill="#c07b9e"/><rect x="1440" y="400" width="41" height="41" fill="#bf7a9d"/><rect x="1480" y="400" width="41" height="41" fill="#bd789a"/><rect x="1520" y="400" width="41" height="41" fill="#ba7597"/><rect x="1560" y="400" width="41" height="41" fill="#b77293"/><rect x="1600" y="400" width="41" height="41" fill="#b36d8e"/><rect x="1640" y="400" width="41" height="41" fill="#ae6989"/><rect x="1680" y="400" width="41" height="41" fill="#aa6484"/><rect x="1720" y="400" width="41" height="41" fill="#a55f7f"/><rect x="1760" y="400" width="41" height="41" fill="#9f597a"/><rect x="1800" y="400" width="41" height="41" fill="#9a5474"/><rect x="1840" y="400" width="41" height="41" fill="#934e6f"/><rect x="1880" y="400" width="41" height="41" fill="#8d486a"/><rect x="0" y="440" width="41" height="41" fill="#1d0917"/><rect x="40" y="440" width="41" height="41" fill="#1f0a19"/><rect x="80" y="440" width="41" height="41" fill="#220b1b"/><rect x="120" y="440" width="41" height="41" fill="#240c1e"/><rect x="160" y="440" width="41" height="41" fill="#270d20"/><rect x="200" y="440" width="41" height="41" fill="#2a0f23"/><rect x="240" y="440" width="41" height="41" fill="#2d1126"/><rect x="280" y="440" width="41" height="41" fill="#311229"/><rect x="320" y="440" width="41" height="41" fill="#34142d"/><rect x="360" y="440" width="41" height="41" fill="#371630"/><rect x="400" y="440" width="41" height="41" fill="#3b1833"/><rect x="440" y="440" width="41" height="41" fill="#3e1a36"/><rect x="480" y="440" width="41" height="41" fill="#421d3a"/><rect x="520" y="440" width="41" height="41" fill="#461f3d"/><rect x="560" y="440" width="41" height="41" fill="#4a2241"/><rect x="600" y="440" width="41" height="41" fill="#4f2545"/><rect x="640" y="440" width="41" height="41" fill="#542849"/><rect x="680" y="440" width="41" height="41" fill="#592c4d"/><rect x="720" y="440" width="41" height="41" fill="#5f3052"/><rect x="760" y="440" width="41" height="41" fill="#653557"/><rect x="800" y="440" width="41" height="41" fill="#6b3a5c"/><rect x="840" y="440" width="41" height="41" fill="#713f61"/><rect x="880" y="440" width="41" height="41" fill="#774566"/><rect x="920" y="440" width="41" height="41" fill="#7e4a6b"/><rect x="960" y="440" width="41" height="41" fill="#845071"/><rect x="1000" y="440" width="41" height="41" fill="#8b5576"/><rect x="1040" y="440" width="41" height="41" fill="#925b7c"/><rect x="1080" y="440" width="41" height="41" fill="#9a6182"/><rect x="1120" y="440" width="41" height="41" fill="#a36788"/><rect x="1160" y="440" width="41" height="41" fill="#ab6d8e"/><rect x="1200" y="440" width="41" height="41" fill="#b27293"/><rect x="1240" y="440" width="41" height="41" fill="#b97697"/><rect x="1280" y="440" width="41" height="41" fill="#be7a9b"/><rect x="1320" y="440" width="41" height="41" fill="#c27d9e"/><rect x="1360" y="440" width="41" height="41" fill="#c47fa0"/><rect x="1400" y="440" width="41" height="41" fill="#c57fa0"/><rect x="1440" y="440" width="41" height="41" fill="#c47e9f"/><rect x="1480" y="440" width="41" height="41" fill="#c27c9d"/><rect x="1520" y="440" width="41" height="41" fill="#bf7a9a"/><rect x="1560" y="440" width="41" height="41" fill="#bc7696"/><rect x="1600" y="440" width="41" height="41" fill="#b87292"/><rect x="1640" y="440" width="41" height="41" fill="#b46d8d"/><rect x="1680" y="440" width="41" height="41" fill="#b06888"/><rect x="1720" y="440" width="41" height="41" fill="#aa6383"/><rect x="1760" y="440" width="41" height="41" fill="#a55d7d"/><rect x="1800" y="440" width="41" height="41" fill="#9f5778"/><rect x="1840" y="440" width="41" height="41" fill="#995273"/><rect x="1880" y="440" width="41" height="41" fill="#934c6e"/><rect x="0" y="480" width="41" height="41" fill="#1b0815"/><rect x="40" y="480" width="41" height="41" fill="#1d0917"/><rect x="80" y="480" width="41" height="41" fill="#200a19"/><rect x="120" y="480" width="41" height="41" fill="#220b1c"/><rect x="160" y="480" width="41" height="41" fill="#250c1e"/><rect x="200" y="480" width="41" height="41" fill="#290e22"/><rect x="240" y="480" width="41" height="41" fill="#2c1025"/><rect x="280" y="480" width="41" height="41" fill="#301229"/><rect x="320" y="480" width="41" height="41" fill="#33142c"/><rect x="360" y="480" width="41" height="41" fill="#371630"/><rect x="400" y="480" width="41" height="41" fill="#3a1833"/><rect x="440" y="480" width="41" height="41" fill="#3e1b36"/><rect x="480" y="480" width="41" height="41" fill="#421d3a"/><rect x="520" y="480" width="41" height="41" fill="#46203e"/><rect x="560" y="480" width="41" height="41" fill="#4b2341"/><rect x="600" y="480" width="41" height="41" fill="#502645"/><rect x="640" y="480" width="41" height="41" fill="#552a4a"/><rect x="680" y="480" width="41" height="41" fill="#5b2e4e"/><rect x="720" y="480" width="41" height="41" fill="#603253"/><rect x="760" y="480" width="41" height="41" fill="#673758"/><rect x="800" y="480" width="41" height="41" fill="#6d3c5d"/><rect x="840" y="480" width="41" height="41" fill="#734263"/><rect x="880" y="480" width="41" height="41" fill="#7a4768"/><rect x="920" y="480" width="41" height="41" fill="#814d6e"/><rect x="960" y="480" width="41" height="41" fill="#875374"/><rect x="1000" y="480" width="41" height="41" fill="#8f597a"/><rect x="1040" y="480" width="41" height="41" fill="#965f7f"/><rect x="1080" y="480" width="41" height="41" fill="#9f6585"/><rect x="1120" y="480" width="41" height="41" fill="#a76b8b"/><rect x="1160" y="480" width="41" height="41" fill="#af7191"/><rect x="1200" y="480" width="41" height="41" fill="#b77695"/><rect x="1240" y="480" width="41" height="41" fill="#bd7b9a"/><rect x="1280" y="480" width="41" height="41" fill="#c37e9d"/><rect x="1320" y="480" width="41" height="41" fill="#c781a0"/><rect x="1360" y="480" width="41" height="41" fill="#c983a2"/><rect x="1400" y="480" width="41" height="41" fill="#ca83a2"/><rect x="1440" y="480" width="41" height="41" fill="#c983a2"/><rect x="1480" y="480" width="41" height="41" fill="#c781a0"/><rect x="1520" y="480" width="41" height="41" fill="#c47e9d"/><rect x="1560" y="480" width="41" height="41" fill="#c17b99"/><rect x="1600" y="480" width="41" height="41" fill="#be7695"/><rect x="1640" y="480" width="41" height="41" fill="#ba7291"/><rect x="1680" y="480" width="41" height="41" fill="#b56c8b"/><rect x="1720" y="480" width="41" height="41" fill="#b06686"/><rect x="1760" y="480" width="41" height="41" fill="#aa6181"/><rect x="1800" y="480" width="41" height="41" fill="#a45b7b"/><rect x="1840" y="480" width="41" height="41" fill="#9e5576"/><rect x="1880" y="480" width="41" height="41" fill="#984f71"/><rect x="0" y="520" width="41" height="41" fill="#190713"/><rect x="40" y="520" width="41" height="41" fill="#1b0815"/><rect x="80" y="520" width="41" height="41" fill="#1e0917"/><rect x="120" y="520" width="41" height="41" fill="#200a1a"/><rect x="160" y="520" width="41" height="41" fill="#230c1d"/><rect x="200" y="520" width="41" height="41" fill="#270d20"/><rect x="240" y="520" width="41" height="41" fill="#2b1024"/><rect x="280" y="520" width="41" height="41" fill="#2f1228"/><rect x="320" y="520" width="41" height="41" fill="#33142c"/><rect x="360" y="520" width="41" height="41" fill="#36162f"/><rect x="400" y="520" width="41" height="41" fill="#3a1833"/><rect x="440" y="520" width="41" height="41" fill="#3e1b36"/><rect x="480" y="520" width="41" height="41" fill="#421e3a"/><rect x="520" y="520" width="41" height="41" fill="#47203e"/><rect x="560" y="520" width="41" height="41" fill="#4b2442"/><rect x="600" y="520" width="41" height="41" fill="#502746"/><rect x="640" y="520" width="41" height="41" fill="#562b4a"/><rect x="680" y="520" width="41" height="41" fill="#5b2f4f"/><rect x="720" y="520" width="41" height="41" fill="#623454"/><rect x="760" y="520" width="41" height="41" fill="#683959"/><rect x="800" y="520" width="41" height="41" fill="#6e3e5f"/><rect x="840" y="520" width="41" height="41" fill="#754464"/><rect x="880" y="520" width="41" height="41" fill="#7c4a6a"/><rect x="920" y="520" width="41" height="41" fill="#835070"/><rect x="960" y="520" width="41" height="41" fill="#8b5676"/><rect x="1000" y="520" width="41" height="41" fill="#925c7c"/><rect x="1040" y="520" width="41" height="41" fill="#9a6382"/><rect x="1080" y="520" width="41" height="41" fill="#a36988"/><rect x="1120" y="520" width="41" height="41" fill="#ab6f8e"/><rect x="1160" y="520" width="41" height="41" fill="#b37593"/><rect x="1200" y="520" width="41" height="41" fill="#bb7a98"/><rect x="1240" y="520" width="41" height="41" fill="#c27f9c"/><rect x="1280" y="520" width="41" height="41" fill="#c7839f"/><rect x="1320" y="520" width="41" height="41" fill="#cb86a2"/><rect x="1360" y="520" width="41" height="41" fill="#ce88a4"/><rect x="1400" y="520" width="41" height="41" fill="#ce88a5"/><rect x="1440" y="520" width="41" height="41" fill="#ce88a4"/><rect x="1480" y="520" width="41" height="41" fill="#cc86a3"/><rect x="1520" y="520" width="41" height="41" fill="#c983a0"/><rect x="1560" y="520" width="41" height="41" fill="#c67f9d"/><rect x="1600" y="520" width="41" height="41" fill="#c37b99"/><rect x="1640" y="520" width="41" height="41" fill="#bf7694"/><rect x="1680" y="520" width="41" height="41" fill="#ba708f"/><rect x="1720" y="520" width="41" height="41" fill="#b46a89"/><rect x="1760" y="520" width="41" height="41" fill="#af6484"/><rect x="1800" y="520" width="41" height="41" fill="#a95e7e"/><rect x="1840" y="520" width="41" height="41" fill="#a25879"/><rect x="1880" y="520" width="41" height="41" fill="#9c5274"/><rect x="0" y="560" width="41" height="41" fill="#170612"/><rect x="40" y="560" width="41" height="41" fill="#190713"/><rect x="80" y="560" width="41" height="41" fill="#1c0816"/><rect x="120" y="560" width="41" height="41" fill="#1e0918"/><rect x="160" y="560" width="41" height="41" fill="#210b1b"/><rect x="200" y="560" width="41" height="41" fill="#250d1e"/><rect x="240" y="560" width="41" height="41" fill="#2a0f23"/><rect x="280" y="560" width="41" height="41" fill="#2e1227"/><rect x="320" y="560" width="41" height="41" fill="#32142b"/><rect x="360" y="560" width="41" height="41" fill="#36162f"/><rect x="400" y="560" width="41" height="41" fill="#391832"/><rect x="440" y="560" width="41" height="41" fill="#3e1b36"/><rect x="480" y="560" width="41" height="41" fill="#421e3a"/><rect x="520" y="560" width="41" height="41" fill="#46213e"/><rect x="560" y="560" width="41" height="41" fill="#4b2442"/><rect x="600" y="560" width="41" height="41" fill="#512846"/><rect x="640" y="560" width="41" height="41" fill="#562c4b"/><rect x="680" y="560" width="41" height="41" fill="#5c3050"/><rect x="720" y="560" width="41" height="41" fill="#623555"/><rect x="760" y="560" width="41" height="41" fill="#693a5a"/><rect x="800" y="560" width="41" height="41" fill="#704060"/><rect x="840" y="560" width="41" height="41" fill="#774666"/><rect x="880" y="560" width="41" height="41" fill="#7e4c6b"/><rect x="920" y="560" width="41" height="41" fill="#865272"/><rect x="960" y="560" width="41" height="41" fill="#8e5978"/><rect x="1000" y="560" width="41" height="41" fill="#965f7e"/><rect x="1040" y="560" width="41" height="41" fill="#9e6684"/><rect x="1080" y="560" width="41" height="41" fill="#a76d8a"/><rect x="1120" y="560" width="41" height="41" fill="#af7390"/><rect x="1160" y="560" width="41" height="41" fill="#b77995"/><rect x="1200" y="560" width="41" height="41" fill="#bf7f9a"/><rect x="1240" y="560" width="41" height="41" fill="#c6839e"/><rect x="1280" y="560" width="41" height="41" fill="#cc87a2"/><rect x="1320" y="560" width="41" height="41" fill="#d08aa5"/><rect x="1360" y="560" width="41" height="41" fill="#d38da7"/><rect x="1400" y="560" width="41" height="41" fill="#d38ea8"/><rect x="1440" y="560" width="41" height="41" fill="#d38da7"/><rect x="1480" y="560" width="41" height="41" fill="#d18ba6"/><rect x="1520" y="560" width="41" height="41" fill="#cf88a3"/><rect x="1560" y="560" width="41" height="41" fill="#cc84a0"/><rect x="1600" y="560" width="41" height="41" fill="#c8809c"/><rect x="1640" y="560" width="41" height="41" fill="#c37a97"/><rect x="1680" y="560" width="41" height="41" fill="#be7492"/><rect x="1720" y="560" width="41" height="41" fill="#b96d8c"/><rect x="1760" y="560" width="41" height="41" fill="#b36787"/><rect x="1800" y="560" width="41" height="41" fill="#ad6181"/><rect x="1840" y="560" width="41" height="41" fill="#a65b7c"/><rect x="1880" y="560" width="41" height="41" fill="#a05577"/><rect x="0" y="600" width="41" height="41" fill="#150610"/><rect x="40" y="600" width="41" height="41" fill="#170712"/><rect x="80" y="600" width="41" height="41" fill="#1a0814"/><rect x="120" y="600" width="41" height="41" fill="#1d0916"/><rect x="160" y="600" width="41" height="41" fill="#200a19"/><rect x="200" y="600" width="41" height="41" fill="#230c1d"/><rect x="240" y="600" width="41" height="41" fill="#280f22"/><rect x="280" y="600" width="41" height="41" fill="#2d1126"/><rect x="320" y="600" width="41" height="41" fill="#31142a"/><rect x="360" y="600" width="41" height="41" fill="#34162e"/><rect x="400" y="600" width="41" height="41" fill="#381832"/><rect x="440" y="600" width="41" height="41" fill="#3d1b35"/><rect x="480" y="600" width="41" height="41" fill="#411e39"/><rect x="520" y="600" width="41" height="41" fill="#46213d"/><rect x="560" y="600" width="41" height="41" fill="#4b2541"/><rect x="600" y="600" width="41" height="41" fill="#502846"/><rect x="640" y="600" width="41" height="41" fill="#562d4b"/><rect x="680" y="600" width="41" height="41" fill="#5c3150"/><rect x="720" y="600" width="41" height="41" fill="#633655"/><rect x="760" y="600" width="41" height="41" fill="#6a3c5a"/><rect x="800" y="600" width="41" height="41" fill="#714160"/><rect x="840" y="600" width="41" height="41" fill="#784766"/><rect x="880" y="600" width="41" height="41" fill="#804e6c"/><rect x="920" y="600" width="41" height="41" fill="#885473"/><rect x="960" y="600" width="41" height="41" fill="#905b79"/><rect x="1000" y="600" width="41" height="41" fill="#99627f"/><rect x="1040" y="600" width="41" height="41" fill="#a16986"/><rect x="1080" y="600" width="41" height="41" fill="#aa708c"/><rect x="1120" y="600" width="41" height="41" fill="#b37792"/><rect x="1160" y="600" width="41" height="41" fill="#bb7d97"/><rect x="1200" y="600" width="41" height="41" fill="#c3839c"/><rect x="1240" y="600" width="41" height="41" fill="#ca88a1"/><rect x="1280" y="600" width="41" height="41" fill="#d08ca4"/><rect x="1320" y="600" width="41" height="41" fill="#d490a7"/><rect x="1360" y="600" width="41" height="41" fill="#d792a9"/><rect x="1400" y="600" width="41" height="41" fill="#d893aa"/><rect x="1440" y="600" width="41" height="41" fill="#d893aa"/><rect x="1480" y="600" width="41" height="41" fill="#d791a9"/><rect x="1520" y="600" width="41" height="41" fill="#d48ea7"/><rect x="1560" y="600" width="41" height="41" fill="#d18aa3"/><rect x="1600" y="600" width="41" height="41" fill="#cd849f"/><rect x="1640" y="600" width="41" height="41" fill="#c87f9b"/><rect x="1680" y="600" width="41" height="41" fill="#c37895"/><rect x="1720" y="600" width="41" height="41" fill="#bd7190"/><rect x="1760" y="600" width="41" height="41" fill="#b76a8a"/><rect x="1800" y="600" width="41" height="41" fill="#b06485"/><rect x="1840" y="600" width="41" height="41" fill="#aa5d7f"/><rect x="1880" y="600" width="41" height="41" fill="#a3577a"/><rect x="0" y="640" width="41" height="41" fill="#13050f"/><rect x="40" y="640" width="41" height="41" fill="#160611"/><rect x="80" y="640" width="41" height="41" fill="#180713"/><rect x="120" y="640" width="41" height="41" fill="#1b0916"/><rect x="160" y="640" width="41" height="41" fill="#1e0a18"/><rect x="200" y="640" width="41" height="41" fill="#220c1c"/><rect x="240" y="640" width="41" height="41" fill="#270e21"/><rect x="280" y="640" width="41" height="41" fill="#2b1125"/><rect x="320" y="640" width="41" height="41" fill="#2f1329"/><rect x="360" y="640" width="41" height="41" fill="#33162d"/><rect x="400" y="640" width="41" height="41" fill="#371831"/><rect x="440" y="640" width="41" height="41" fill="#3c1b34"/><rect x="480" y="640" width="41" height="41" fill="#401e38"/><rect x="520" y="640" width="41" height="41" fill="#45213c"/><rect x="560" y="640" width="41" height="41" fill="#4a2541"/><rect x="600" y="640" width="41" height="41" fill="#502945"/><rect x="640" y="640" width="41" height="41" fill="#562d4a"/><rect x="680" y="640" width="41" height="41" fill="#5c324f"/><rect x="720" y="640" width="41" height="41" fill="#633755"/><rect x="760" y="640" width="41" height="41" fill="#6a3c5a"/><rect x="800" y="640" width="41" height="41" fill="#714260"/><rect x="840" y="640" width="41" height="41" fill="#794966"/><rect x="880" y="640" width="41" height="41" fill="#814f6d"/><rect x="920" y="640" width="41" height="41" fill="#895673"/><rect x="960" y="640" width="41" height="41" fill="#925d7a"/><rect x="1000" y="640" width="41" height="41" fill="#9b6480"/><rect x="1040" y="640" width="41" height="41" fill="#a46c87"/><rect x="1080" y="640" width="41" height="41" fill="#ad738d"/><rect x="1120" y="640" width="41" height="41" fill="#b67a93"/><rect x="1160" y="640" width="41" height="41" fill="#be8199"/><rect x="1200" y="640" width="41" height="41" fill="#c6879e"/><rect x="1240" y="640" width="41" height="41" fill="#ce8da3"/><rect x="1280" y="640" width="41" height="41" fill="#d491a7"/><rect x="1320" y="640" width="41" height="41" fill="#d895aa"/><rect x="1360" y="640" width="41" height="41" fill="#db98ac"/><rect x="1400" y="640" width="41" height="41" fill="#dd99ad"/><rect x="1440" y="640" width="41" height="41" fill="#dd99ad"/><rect x="1480" y="640" width="41" height="41" fill="#dc97ac"/><rect x="1520" y="640" width="41" height="41" fill="#d993aa"/><rect x="1560" y="640" width="41" height="41" fill="#d58fa6"/><rect x="1600" y="640" width="41" height="41" fill="#d189a2"/><rect x="1640" y="640" width="41" height="41" fill="#cc839d"/><rect x="1680" y="640" width="41" height="41" fill="#c67c98"/><rect x="1720" y="640" width="41" height="41" fill="#c07593"/><rect x="1760" y="640" width="41" height="41" fill="#ba6e8d"/><rect x="1800" y="640" width="41" height="41" fill="#b36787"/><rect x="1840" y="640" width="41" height="41" fill="#ad6081"/><rect x="1880" y="640" width="41" height="41" fill="#a6597c"/><rect x="0" y="680" width="41" height="41" fill="#12050e"/><rect x="40" y="680" width="41" height="41" fill="#140610"/><rect x="80" y="680" width="41" height="41" fill="#170712"/><rect x="120" y="680" width="41" height="41" fill="#1a0815"/><rect x="160" y="680" width="41" height="41" fill="#1d0a18"/><rect x="200" y="680" width="41" height="41" fill="#210c1c"/><rect x="240" y="680" width="41" height="41" fill="#250e20"/><rect x="280" y="680" width="41" height="41" fill="#291024"/><rect x="320" y="680" width="41" height="41" fill="#2d1328"/><rect x="360" y="680" width="41" height="41" fill="#31152b"/><rect x="400" y="680" width="41" height="41" fill="#36182f"/><rect x="440" y="680" width="41" height="41" fill="#3a1a33"/><rect x="480" y="680" width="41" height="41" fill="#3f1d37"/><rect x="520" y="680" width="41" height="41" fill="#44213b"/><rect x="560" y="680" width="41" height="41" fill="#492440"/><rect x="600" y="680" width="41" height="41" fill="#4f2844"/><rect x="640" y="680" width="41" height="41" fill="#552d49"/><rect x="680" y="680" width="41" height="41" fill="#5c324e"/><rect x="720" y="680" width="41" height="41" fill="#633754"/><rect x="760" y="680" width="41" height="41" fill="#6a3d5a"/><rect x="800" y="680" width="41" height="41" fill="#724360"/><rect x="840" y="680" width="41" height="41" fill="#7a4966"/><rect x="880" y="680" width="41" height="41" fill="#82506c"/><rect x="920" y="680" width="41" height="41" fill="#8b5773"/><rect x="960" y="680" width="41" height="41" fill="#935f7a"/><rect x="1000" y="680" width="41" height="41" fill="#9d6680"/><rect x="1040" y="680" width="41" height="41" fill="#a66e87"/><rect x="1080" y="680" width="41" height="41" fill="#af758e"/><rect x="1120" y="680" width="41" height="41" fill="#b87d94"/><rect x="1160" y="680" width="41" height="41" fill="#c1849a"/><rect x="1200" y="680" width="41" height="41" fill="#c98ba0"/><rect x="1240" y="680" width="41" height="41" fill="#d191a5"/><rect x="1280" y="680" width="41" height="41" fill="#d796a9"/><rect x="1320" y="680" width="41" height="41" fill="#dc9aac"/><rect x="1360" y="680" width="41" height="41" fill="#df9daf"/><rect x="1400" y="680" width="41" height="41" fill="#e19fb0"/><rect x="1440" y="680" width="41" height="41" fill="#e19eb0"/><rect x="1480" y="680" width="41" height="41" fill="#e09caf"/><rect x="1520" y="680" width="41" height="41" fill="#dd98ac"/><rect x="1560" y="680" width="41" height="41" fill="#d993a9"/><rect x="1600" y="680" width="41" height="41" fill="#d48da5"/><rect x="1640" y="680" width="41" height="41" fill="#cf86a0"/><rect x="1680" y="680" width="41" height="41" fill="#c97f9a"/><rect x="1720" y="680" width="41" height="41" fill="#c37895"/><rect x="1760" y="680" width="41" height="41" fill="#bc708f"/><rect x="1800" y="680" width="41" height="41" fill="#b66989"/><rect x="1840" y="680" width="41" height="41" fill="#af6283"/><rect x="1880" y="680" width="41" height="41" fill="#a85b7d"/><rect x="0" y="720" width="41" height="41" fill="#10050d"/><rect x="40" y="720" width="41" height="41" fill="#13060f"/><rect x="80" y="720" width="41" height="41" fill="#150711"/><rect x="120" y="720" width="41" height="41" fill="#180814"/><rect x="160" y="720" width="41" height="41" fill="#1c0a17"/><rect x="200" y="720" width="41" height="41" fill="#1f0c1b"/><rect x="240" y="720" width="41" height="41" fill="#230e1e"/><rect x="280" y="720" width="41" height="41" fill="#271022"/><rect x="320" y="720" width="41" height="41" fill="#2b1226"/><rect x="360" y="720" width="41" height="41" fill="#2f152a"/><rect x="400" y="720" width="41" height="41" fill="#34172e"/><rect x="440" y="720" width="41" height="41" fill="#381a32"/><rect x="480" y="720" width="41" height="41" fill="#3d1d36"/><rect x="520" y="720" width="41" height="41" fill="#42203a"/><rect x="560" y="720" width="41" height="41" fill="#48243e"/><rect x="600" y="720" width="41" height="41" fill="#4e2843"/><rect x="640" y="720" width="41" height="41" fill="#542c48"/><rect x="680" y="720" width="41" height="41" fill="#5b314d"/><rect x="720" y="720" width="41" height="41" fill="#623753"/><rect x="760" y="720" width="41" height="41" fill="#693d59"/><rect x="800" y="720" width="41" height="41" fill="#71435f"/><rect x="840" y="720" width="41" height="41" fill="#794965"/><rect x="880" y="720" width="41" height="41" fill="#82506c"/><rect x="920" y="720" width="41" height="41" fill="#8b5872"/><rect x="960" y="720" width="41" height="41" fill="#945f79"/><rect x="1000" y="720" width="41" height="41" fill="#9e6780"/><rect x="1040" y="720" width="41" height="41" fill="#a76f87"/><rect x="1080" y="720" width="41" height="41" fill="#b1778e"/><rect x="1120" y="720" width="41" height="41" fill="#ba7f95"/><rect x="1160" y="720" width="41" height="41" fill="#c3879b"/><rect x="1200" y="720" width="41" height="41" fill="#cb8ea1"/><rect x="1240" y="720" width="41" height="41" fill="#d394a6"/><rect x="1280" y="720" width="41" height="41" fill="#d99aab"/><rect x="1320" y="720" width="41" height="41" fill="#df9fae"/><rect x="1360" y="720" width="41" height="41" fill="#e2a2b1"/><rect x="1400" y="720" width="41" height="41" fill="#e5a4b3"/><rect x="1440" y="720" width="41" height="41" fill="#e5a4b3"/><rect x="1480" y="720" width="41" height="41" fill="#e4a1b1"/><rect x="1520" y="720" width="41" height="41" fill="#e19daf"/><rect x="1560" y="720" width="41" height="41" fill="#dc97ab"/><rect x="1600" y="720" width="41" height="41" fill="#d790a6"/><rect x="1640" y="720" width="41" height="41" fill="#d189a1"/><rect x="1680" y="720" width="41" height="41" fill="#cb819c"/><rect x="1720" y="720" width="41" height="41" fill="#c57996"/><rect x="1760" y="720" width="41" height="41" fill="#be7290"/><rect x="1800" y="720" width="41" height="41" fill="#b76a8a"/><rect x="1840" y="720" width="41" height="41" fill="#b06384"/><rect x="1880" y="720" width="41" height="41" fill="#a95c7e"/><rect x="0" y="760" width="41" height="41" fill="#0f040c"/><rect x="40" y="760" width="41" height="41" fill="#11050e"/><rect x="80" y="760" width="41" height="41" fill="#140711"/><rect x="120" y="760" width="41" height="41" fill="#170813"/><rect x="160" y="760" width="41" height="41" fill="#1a0a16"/><rect x="200" y="760" width="41" height="41" fill="#1e0b1a"/><rect x="240" y="760" width="41" height="41" fill="#210d1d"/><rect x="280" y="760" width="41" height="41" fill="#250f21"/><rect x="320" y="760" width="41" height="41" fill="#291224"/><rect x="360" y="760" width="41" height="41" fill="#2d1428"/><rect x="400" y="760" width="41" height="41" fill="#32162c"/><rect x="440" y="760" width="41" height="41" fill="#361930"/><rect x="480" y="760" width="41" height="41" fill="#3b1c34"/><rect x="520" y="760" width="41" height="41" fill="#401f38"/><rect x="560" y="760" width="41" height="41" fill="#46233c"/><rect x="600" y="760" width="41" height="41" fill="#4c2741"/><rect x="640" y="760" width="41" height="41" fill="#522c46"/><rect x="680" y="760" width="41" height="41" fill="#59314b"/><rect x="720" y="760" width="41" height="41" fill="#613651"/><rect x="760" y="760" width="41" height="41" fill="#683c57"/><rect x="800" y="760" width="41" height="41" fill="#70425d"/><rect x="840" y="760" width="41" height="41" fill="#794964"/><rect x="880" y="760" width="41" height="41" fill="#82506a"/><rect x="920" y="760" width="41" height="41" fill="#8b5871"/><rect x="960" y="760" width="41" height="41" fill="#945f78"/><rect x="1000" y="760" width="41" height="41" fill="#9e677f"/><rect x="1040" y="760" width="41" height="41" fill="#a87086"/><rect x="1080" y="760" width="41" height="41" fill="#b1788d"/><rect x="1120" y="760" width="41" height="41" fill="#bb8094"/><rect x="1160" y="760" width="41" height="41" fill="#c4889b"/><rect x="1200" y="760" width="41" height="41" fill="#cd90a1"/><rect x="1240" y="760" width="41" height="41" fill="#d497a7"/><rect x="1280" y="760" width="41" height="41" fill="#db9dac"/><rect x="1320" y="760" width="41" height="41" fill="#e1a2b0"/><rect x="1360" y="760" width="41" height="41" fill="#e5a6b3"/><rect x="1400" y="760" width="41" height="41" fill="#e7a8b4"/><rect x="1440" y="760" width="41" height="41" fill="#e8a8b4"/><rect x="1480" y="760" width="41" height="41" fill="#e6a5b3"/><rect x="1520" y="760" width="41" height="41" fill="#e3a0b0"/><rect x="1560" y="760" width="41" height="41" fill="#de99ac"/><rect x="1600" y="760" width="41" height="41" fill="#d992a7"/><rect x="1640" y="760" width="41" height="41" fill="#d28aa1"/><rect x="1680" y="760" width="41" height="41" fill="#cc829c"/><rect x="1720" y="760" width="41" height="41" fill="#c57a96"/><rect x="1760" y="760" width="41" height="41" fill="#be7290"/><rect x="1800" y="760" width="41" height="41" fill="#b76b8a"/><rect x="1840" y="760" width="41" height="41" fill="#b06384"/><rect x="1880" y="760" width="41" height="41" fill="#a95d7e"/><rect x="0" y="800" width="41" height="41" fill="#0e040b"/><rect x="40" y="800" width="41" height="41" fill="#10050d"/><rect x="80" y="800" width="41" height="41" fill="#130710"/><rect x="120" y="800" width="41" height="41" fill="#150813"/><rect x="160" y="800" width="41" height="41" fill="#190915"/><rect x="200" y="800" width="41" height="41" fill="#1c0b19"/><rect x="240" y="800" width="41" height="41" fill="#1f0d1c"/><rect x="280" y="800" width="41" height="41" fill="#230f1f"/><rect x="320" y="800" width="41" height="41" fill="#271123"/><rect x="360" y="800" width="41" height="41" fill="#2b1326"/><rect x="400" y="800" width="41" height="41" fill="#30152a"/><rect x="440" y="800" width="41" height="41" fill="#34182e"/><rect x="480" y="800" width="41" height="41" fill="#391b32"/><rect x="520" y="800" width="41" height="41" fill="#3e1e36"/><rect x="560" y="800" width="41" height="41" fill="#44223a"/><rect x="600" y="800" width="41" height="41" fill="#4a263f"/><rect x="640" y="800" width="41" height="41" fill="#512a44"/><rect x="680" y="800" width="41" height="41" fill="#582f49"/><rect x="720" y="800" width="41" height="41" fill="#5f354f"/><rect x="760" y="800" width="41" height="41" fill="#673b55"/><rect x="800" y="800" width="41" height="41" fill="#6f415b"/><rect x="840" y="800" width="41" height="41" fill="#784862"/><rect x="880" y="800" width="41" height="41" fill="#814f68"/><rect x="920" y="800" width="41" height="41" fill="#8a576f"/><rect x="960" y="800" width="41" height="41" fill="#945f76"/><rect x="1000" y="800" width="41" height="41" fill="#9e677d"/><rect x="1040" y="800" width="41" height="41" fill="#a76f85"/><rect x="1080" y="800" width="41" height="41" fill="#b1788c"/><rect x="1120" y="800" width="41" height="41" fill="#bb8093"/><rect x="1160" y="800" width="41" height="41" fill="#c4899a"/><rect x="1200" y="800" width="41" height="41" fill="#cd91a1"/><rect x="1240" y="800" width="41" height="41" fill="#d598a7"/><rect x="1280" y="800" width="41" height="41" fill="#dc9fac"/><rect x="1320" y="800" width="41" height="41" fill="#e2a4b0"/><rect x="1360" y="800" width="41" height="41" fill="#e6a8b3"/><rect x="1400" y="800" width="41" height="41" fill="#e9aab5"/><rect x="1440" y="800" width="41" height="41" fill="#eaaab5"/><rect x="1480" y="800" width="41" height="41" fill="#e8a7b3"/><rect x="1520" y="800" width="41" height="41" fill="#e4a1b0"/><rect x="1560" y="800" width="41" height="41" fill="#df9aab"/><rect x="1600" y="800" width="41" height="41" fill="#d993a6"/><rect x="1640" y="800" width="41" height="41" fill="#d28aa0"/><rect x="1680" y="800" width="41" height="41" fill="#cb829b"/><rect x="1720" y="800" width="41" height="41" fill="#c47a95"/><rect x="1760" y="800" width="41" height="41" fill="#bd728f"/><rect x="1800" y="800" width="41" height="41" fill="#b66a89"/><rect x="1840" y="800" width="41" height="41" fill="#b06383"/><rect x="1880" y="800" width="41" height="41" fill="#a95c7d"/><rect x="0" y="840" width="41" height="41" fill="#0c040a"/><rect x="40" y="840" width="41" height="41" fill="#0f050d"/><rect x="80" y="840" width="41" height="41" fill="#11060f"/><rect x="120" y="840" width="41" height="41" fill="#140812"/><rect x="160" y="840" width="41" height="41" fill="#170914"/><rect x="200" y="840" width="41" height="41" fill="#1a0b17"/><rect x="240" y="840" width="41" height="41" fill="#1e0c1a"/><rect x="280" y="840" width="41" height="41" fill="#210e1d"/><rect x="320" y="840" width="41" height="41" fill="#251021"/><rect x="360" y="840" width="41" height="41" fill="#291224"/><rect x="400" y="840" width="41" height="41" fill="#2d1428"/><rect x="440" y="840" width="41" height="41" fill="#32172b"/><rect x="480" y="840" width="41" height="41" fill="#371a2f"/><rect x="520" y="840" width="41" height="41" fill="#3c1d33"/><rect x="560" y="840" width="41" height="41" fill="#422038"/><rect x="600" y="840" width="41" height="41" fill="#48243d"/><rect x="640" y="840" width="41" height="41" fill="#4e2942"/><rect x="680" y="840" width="41" height="41" fill="#562e47"/><rect x="720" y="840" width="41" height="41" fill="#5d334d"/><rect x="760" y="840" width="41" height="41" fill="#653952"/><rect x="800" y="840" width="41" height="41" fill="#6d4059"/><rect x="840" y="840" width="41" height="41" fill="#76465f"/><rect x="880" y="840" width="41" height="41" fill="#7f4e66"/><rect x="920" y="840" width="41" height="41" fill="#89556d"/><rect x="960" y="840" width="41" height="41" fill="#925d74"/><rect x="1000" y="840" width="41" height="41" fill="#9c657b"/><rect x="1040" y="840" width="41" height="41" fill="#a66e82"/><rect x="1080" y="840" width="41" height="41" fill="#b0778a"/><rect x="1120" y="840" width="41" height="41" fill="#ba7f91"/><rect x="1160" y="840" width="41" height="41" fill="#c48899"/><rect x="1200" y="840" width="41" height="41" fill="#cd90a0"/><rect x="1240" y="840" width="41" height="41" fill="#d598a6"/><rect x="1280" y="840" width="41" height="41" fill="#dc9fab"/><rect x="1320" y="840" width="41" height="41" fill="#e2a4af"/><rect x="1360" y="840" width="41" height="41" fill="#e6a8b2"/><rect x="1400" y="840" width="41" height="41" fill="#e9aab4"/><rect x="1440" y="840" width="41" height="41" fill="#e9aab4"/><rect x="1480" y="840" width="41" height="41" fill="#e7a7b2"/><rect x="1520" y="840" width="41" height="41" fill="#e3a1ae"/><rect x="1560" y="840" width="41" height="41" fill="#de99aa"/><rect x="1600" y="840" width="41" height="41" fill="#d891a4"/><rect x="1640" y="840" width="41" height="41" fill="#d1899e"/><rect x="1680" y="840" width="41" height="41" fill="#ca8198"/><rect x="1720" y="840" width="41" height="41" fill="#c37892"/><rect x="1760" y="840" width="41" height="41" fill="#bc708c"/><rect x="1800" y="840" width="41" height="41" fill="#b56986"/><rect x="1840" y="840" width="41" height="41" fill="#ae6281"/><rect x="1880" y="840" width="41" height="41" fill="#a85b7b"/><rect x="0" y="880" width="41" height="41" fill="#0b0409"/><rect x="40" y="880" width="41" height="41" fill="#0e050c"/><rect x="80" y="880" width="41" height="41" fill="#10060e"/><rect x="120" y="880" width="41" height="41" fill="#130711"/><rect x="160" y="880" width="41" height="41" fill="#160913"/><rect x="200" y="880" width="41" height="41" fill="#190a16"/><rect x="240" y="880" width="41" height="41" fill="#1c0c19"/><rect x="280" y="880" width="41" height="41" fill="#1f0d1c"/><rect x="320" y="880" width="41" height="41" fill="#230f1f"/><rect x="360" y="880" width="41" height="41" fill="#271122"/><rect x="400" y="880" width="41" height="41" fill="#2b1325"/><rect x="440" y="880" width="41" height="41" fill="#2f1629"/><rect x="480" y="880" width="41" height="41" fill="#34182d"/><rect x="520" y="880" width="41" height="41" fill="#3a1b31"/><rect x="560" y="880" width="41" height="41" fill="#3f1f35"/><rect x="600" y="880" width="41" height="41" fill="#45233a"/><rect x="640" y="880" width="41" height="41" fill="#4c273f"/><rect x="680" y="880" width="41" height="41" fill="#532c44"/><rect x="720" y="880" width="41" height="41" fill="#5b314a"/><rect x="760" y="880" width="41" height="41" fill="#633750"/><rect x="800" y="880" width="41" height="41" fill="#6b3e56"/><rect x="840" y="880" width="41" height="41" fill="#74445c"/><rect x="880" y="880" width="41" height="41" fill="#7d4c63"/><rect x="920" y="880" width="41" height="41" fill="#87536a"/><rect x="960" y="880" width="41" height="41" fill="#915b71"/><rect x="1000" y="880" width="41" height="41" fill="#9b6378"/><rect x="1040" y="880" width="41" height="41" fill="#a56c7f"/><rect x="1080" y="880" width="41" height="41" fill="#af7487"/><rect x="1120" y="880" width="41" height="41" fill="#b87d8e"/><rect x="1160" y="880" width="41" height="41" fill="#c28696"/><rect x="1200" y="880" width="41" height="41" fill="#cb8f9d"/><rect x="1240" y="880" width="41" height="41" fill="#d397a4"/><rect x="1280" y="880" width="41" height="41" fill="#da9da9"/><rect x="1320" y="880" width="41" height="41" fill="#e0a3ad"/><rect x="1360" y="880" width="41" height="41" fill="#e4a6b0"/><rect x="1400" y="880" width="41" height="41" fill="#e7a8b1"/><rect x="1440" y="880" width="41" height="41" fill="#e7a7b1"/><rect x="1480" y="880" width="41" height="41" fill="#e5a3af"/><rect x="1520" y="880" width="41" height="41" fill="#e19eab"/><rect x="1560" y="880" width="41" height="41" fill="#dc97a7"/><rect x="1600" y="880" width="41" height="41" fill="#d58fa1"/><rect x="1640" y="880" width="41" height="41" fill="#cf879b"/><rect x="1680" y="880" width="41" height="41" fill="#c87e95"/><rect x="1720" y="880" width="41" height="41" fill="#c0768f"/><rect x="1760" y="880" width="41" height="41" fill="#b96e89"/><rect x="1800" y="880" width="41" height="41" fill="#b36784"/><rect x="1840" y="880" width="41" height="41" fill="#ac607e"/><rect x="1880" y="880" width="41" height="41" fill="#a65a79"/><rect x="0" y="920" width="41" height="41" fill="#0a0308"/><rect x="40" y="920" width="41" height="41" fill="#0c040b"/><rect x="80" y="920" width="41" height="41" fill="#0f060d"/><rect x="120" y="920" width="41" height="41" fill="#11070f"/><rect x="160" y="920" width="41" height="41" fill="#140812"/><rect x="200" y="920" width="41" height="41" fill="#170a14"/><rect x="240" y="920" width="41" height="41" fill="#1a0b17"/><rect x="280" y="920" width="41" height="41" fill="#1d0d1a"/><rect x="320" y="920" width="41" height="41" fill="#210e1d"/><rect x="360" y="920" width="41" height="41" fill="#241020"/><rect x="400" y="920" width="41" height="41" fill="#281223"/><rect x="440" y="920" width="41" height="41" fill="#2d1426"/><rect x="480" y="920" width="41" height="41" fill="#32172a"/><rect x="520" y="920" width="41" height="41" fill="#371a2e"/><rect x="560" y="920" width="41" height="41" fill="#3d1d32"/><rect x="600" y="920" width="41" height="41" fill="#432137"/><rect x="640" y="920" width="41" height="41" fill="#49253c"/><rect x="680" y="920" width="41" height="41" fill="#502a41"/><rect x="720" y="920" width="41" height="41" fill="#582f47"/><rect x="760" y="920" width="41" height="41" fill="#60354c"/><rect x="800" y="920" width="41" height="41" fill="#683b52"/><rect x="840" y="920" width="41" height="41" fill="#714259"/><rect x="880" y="920" width="41" height="41" fill="#7b495f"/><rect x="920" y="920" width="41" height="41" fill="#845066"/><rect x="960" y="920" width="41" height="41" fill="#8e586d"/><rect x="1000" y="920" width="41" height="41" fill="#986074"/><rect x="1040" y="920" width="41" height="41" fill="#a2687b"/><rect x="1080" y="920" width="41" height="41" fill="#ac7183"/><rect x="1120" y="920" width="41" height="41" fill="#b67a8b"/><rect x="1160" y="920" width="41" height="41" fill="#bf8392"/><rect x="1200" y="920" width="41" height="41" fill="#c88b9a"/><rect x="1240" y="920" width="41" height="41" fill="#d193a0"/><rect x="1280" y="920" width="41" height="41" fill="#d89aa6"/><rect x="1320" y="920" width="41" height="41" fill="#dea0aa"/><rect x="1360" y="920" width="41" height="41" fill="#e1a2ac"/><rect x="1400" y="920" width="41" height="41" fill="#e3a3ad"/><rect x="1440" y="920" width="41" height="41" fill="#e3a2ac"/><rect x="1480" y="920" width="41" height="41" fill="#e19faa"/><rect x="1520" y="920" width="41" height="41" fill="#dd99a7"/><rect x="1560" y="920" width="41" height="41" fill="#d893a2"/><rect x="1600" y="920" width="41" height="41" fill="#d28b9d"/><rect x="1640" y="920" width="41" height="41" fill="#cb8397"/><rect x="1680" y="920" width="41" height="41" fill="#c47b91"/><rect x="1720" y="920" width="41" height="41" fill="#bd728b"/><rect x="1760" y="920" width="41" height="41" fill="#b66b85"/><rect x="1800" y="920" width="41" height="41" fill="#b06480"/><rect x="1840" y="920" width="41" height="41" fill="#aa5e7b"/><rect x="1880" y="920" width="41" height="41" fill="#a45877"/><rect x="0" y="960" width="41" height="41" fill="#090307"/><rect x="40" y="960" width="41" height="41" fill="#0b040a"/><rect x="80" y="960" width="41" height="41" fill="#0e050c"/><rect x="120" y="960" width="41" height="41" fill="#10070e"/><rect x="160" y="960" width="41" height="41" fill="#130811"/><rect x="200" y="960" width="41" height="41" fill="#150913"/><rect x="240" y="960" width="41" height="41" fill="#180a15"/><rect x="280" y="960" width="41" height="41" fill="#1b0c18"/><rect x="320" y="960" width="41" height="41" fill="#1e0d1b"/><rect x="360" y="960" width="41" height="41" fill="#220f1e"/><rect x="400" y="960" width="41" height="41" fill="#261121"/><rect x="440" y="960" width="41" height="41" fill="#2a1324"/><rect x="480" y="960" width="41" height="41" fill="#2f1527"/><rect x="520" y="960" width="41" height="41" fill="#34182b"/><rect x="560" y="960" width="41" height="41" fill="#3a1b2f"/><rect x="600" y="960" width="41" height="41" fill="#401e34"/><rect x="640" y="960" width="41" height="41" fill="#472339"/><rect x="680" y="960" width="41" height="41" fill="#4e273e"/><rect x="720" y="960" width="41" height="41" fill="#552c43"/><rect x="760" y="960" width="41" height="41" fill="#5d3249"/><rect x="800" y="960" width="41" height="41" fill="#66384f"/><rect x="840" y="960" width="41" height="41" fill="#6e3f55"/><rect x="880" y="960" width="41" height="41" fill="#78465b"/><rect x="920" y="960" width="41" height="41" fill="#814d62"/><rect x="960" y="960" width="41" height="41" fill="#8b5469"/><rect x="1000" y="960" width="41" height="41" fill="#955c6f"/><rect x="1040" y="960" width="41" height="41" fill="#9f6477"/><rect x="1080" y="960" width="41" height="41" fill="#a86d7e"/><rect x="1120" y="960" width="41" height="41" fill="#b27586"/><rect x="1160" y="960" width="41" height="41" fill="#bc7e8d"/><rect x="1200" y="960" width="41" height="41" fill="#c58695"/><rect x="1240" y="960" width="41" height="41" fill="#cd8f9c"/><rect x="1280" y="960" width="41" height="41" fill="#d496a2"/><rect x="1320" y="960" width="41" height="41" fill="#da9ba6"/><rect x="1360" y="960" width="41" height="41" fill="#dd9da7"/><rect x="1400" y="960" width="41" height="41" fill="#df9da7"/><rect x="1440" y="960" width="41" height="41" fill="#df9ca6"/><rect x="1480" y="960" width="41" height="41" fill="#dd99a4"/><rect x="1520" y="960" width="41" height="41" fill="#d994a1"/><rect x="1560" y="960" width="41" height="41" fill="#d48e9d"/><rect x="1600" y="960" width="41" height="41" fill="#ce8798"/><rect x="1640" y="960" width="41" height="41" fill="#c87f92"/><rect x="1680" y="960" width="41" height="41" fill="#c1778d"/><rect x="1720" y="960" width="41" height="41" fill="#b96f87"/><rect x="1760" y="960" width="41" height="41" fill="#b36881"/><rect x="1800" y="960" width="41" height="41" fill="#ad617d"/><rect x="1840" y="960" width="41" height="41" fill="#a75c78"/><rect x="1880" y="960" width="41" height="41" fill="#a25774"/><rect x="0" y="1000" width="41" height="41" fill="#080206"/><rect x="40" y="1000" width="41" height="41" fill="#0a0408"/><rect x="80" y="1000" width="41" height="41" fill="#0d050b"/><rect x="120" y="1000" width="41" height="41" fill="#0f060d"/><rect x="160" y="1000" width="41" height="41" fill="#11070f"/><rect x="200" y="1000" width="41" height="41" fill="#140811"/><rect x="240" y="1000" width="41" height="41" fill="#170a14"/><rect x="280" y="1000" width="41" height="41" fill="#190b16"/><rect x="320" y="1000" width="41" height="41" fill="#1c0c18"/><rect x="360" y="1000" width="41" height="41" fill="#200e1b"/><rect x="400" y="1000" width="41" height="41" fill="#230f1e"/><rect x="440" y="1000" width="41" height="41" fill="#281121"/><rect x="480" y="1000" width="41" height="41" fill="#2c1325"/><rect x="520" y="1000" width="41" height="41" fill="#321628"/><rect x="560" y="1000" width="41" height="41" fill="#37192c"/><rect x="600" y="1000" width="41" height="41" fill="#3d1c30"/><rect x="640" y="1000" width="41" height="41" fill="#442035"/><rect x="680" y="1000" width="41" height="41" fill="#4b253a"/><rect x="720" y="1000" width="41" height="41" fill="#522a40"/><rect x="760" y="1000" width="41" height="41" fill="#5a2f45"/><rect x="800" y="1000" width="41" height="41" fill="#62354b"/><rect x="840" y="1000" width="41" height="41" fill="#6b3b51"/><rect x="880" y="1000" width="41" height="41" fill="#744257"/><rect x="920" y="1000" width="41" height="41" fill="#7e495d"/><rect x="960" y="1000" width="41" height="41" fill="#885064"/><rect x="1000" y="1000" width="41" height="41" fill="#91586a"/><rect x="1040" y="1000" width="41" height="41" fill="#9b5f71"/><rect x="1080" y="1000" width="41" height="41" fill="#a46778"/><rect x="1120" y="1000" width="41" height="41" fill="#ae6f80"/><rect x="1160" y="1000" width="41" height="41" fill="#b77887"/><rect x="1200" y="1000" width="41" height="41" fill="#c0808f"/><rect x="1240" y="1000" width="41" height="41" fill="#c88896"/><rect x="1280" y="1000" width="41" height="41" fill="#d08f9c"/><rect x="1320" y="1000" width="41" height="41" fill="#d594a0"/><rect x="1360" y="1000" width="41" height="41" fill="#d896a1"/><rect x="1400" y="1000" width="41" height="41" fill="#da96a0"/><rect x="1440" y="1000" width="41" height="41" fill="#d9949f"/><rect x="1480" y="1000" width="41" height="41" fill="#d7929d"/><rect x="1520" y="1000" width="41" height="41" fill="#d48d9a"/><rect x="1560" y="1000" width="41" height="41" fill="#cf8897"/><rect x="1600" y="1000" width="41" height="41" fill="#ca8292"/><rect x="1640" y="1000" width="41" height="41" fill="#c37b8d"/><rect x="1680" y="1000" width="41" height="41" fill="#bd7388"/><rect x="1720" y="1000" width="41" height="41" fill="#b66c83"/><rect x="1760" y="1000" width="41" height="41" fill="#af657d"/><rect x="1800" y="1000" width="41" height="41" fill="#a95f79"/><rect x="1840" y="1000" width="41" height="41" fill="#a45a75"/><rect x="1880" y="1000" width="41" height="41" fill="#9f5571"/><rect x="0" y="1040" width="41" height="41" fill="#070205"/><rect x="40" y="1040" width="41" height="41" fill="#090307"/><rect x="80" y="1040" width="41" height="41" fill="#0b0409"/><rect x="120" y="1040" width="41" height="41" fill="#0e050c"/><rect x="160" y="1040" width="41" height="41" fill="#10070e"/><rect x="200" y="1040" width="41" height="41" fill="#130810"/><rect x="240" y="1040" width="41" height="41" fill="#150912"/><rect x="280" y="1040" width="41" height="41" fill="#170a14"/><rect x="320" y="1040" width="41" height="41" fill="#1a0b16"/><rect x="360" y="1040" width="41" height="41" fill="#1d0c19"/><rect x="400" y="1040" width="41" height="41" fill="#210e1c"/><rect x="440" y="1040" width="41" height="41" fill="#250f1e"/><rect x="480" y="1040" width="41" height="41" fill="#2a1122"/><rect x="520" y="1040" width="41" height="41" fill="#2f1425"/><rect x="560" y="1040" width="41" height="41" fill="#351629"/><rect x="600" y="1040" width="41" height="41" fill="#3b1a2d"/><rect x="640" y="1040" width="41" height="41" fill="#411d32"/><rect x="680" y="1040" width="41" height="41" fill="#482237"/><rect x="720" y="1040" width="41" height="41" fill="#4f273c"/><rect x="760" y="1040" width="41" height="41" fill="#572c41"/><rect x="800" y="1040" width="41" height="41" fill="#5f3247"/><rect x="840" y="1040" width="41" height="41" fill="#68384d"/><rect x="880" y="1040" width="41" height="41" fill="#713e53"/><rect x="920" y="1040" width="41" height="41" fill="#7a4559"/><rect x="960" y="1040" width="41" height="41" fill="#844c5f"/><rect x="1000" y="1040" width="41" height="41" fill="#8d5365"/><rect x="1040" y="1040" width="41" height="41" fill="#975a6b"/><rect x="1080" y="1040" width="41" height="41" fill="#a06172"/><rect x="1120" y="1040" width="41" height="41" fill="#a96979"/><rect x="1160" y="1040" width="41" height="41" fill="#b17080"/><rect x="1200" y="1040" width="41" height="41" fill="#ba7887"/><rect x="1240" y="1040" width="41" height="41" fill="#c2808e"/><rect x="1280" y="1040" width="41" height="41" fill="#c98794"/><rect x="1320" y="1040" width="41" height="41" fill="#cf8b98"/><rect x="1360" y="1040" width="41" height="41" fill="#d28d98"/><rect x="1400" y="1040" width="41" height="41" fill="#d48d98"/><rect x="1440" y="1040" width="41" height="41" fill="#d38c97"/><rect x="1480" y="1040" width="41" height="41" fill="#d28a95"/><rect x="1520" y="1040" width="41" height="41" fill="#ce8693"/><rect x="1560" y="1040" width="41" height="41" fill="#ca8290"/><rect x="1600" y="1040" width="41" height="41" fill="#c57d8c"/><rect x="1640" y="1040" width="41" height="41" fill="#bf7688"/><rect x="1680" y="1040" width="41" height="41" fill="#b97084"/><rect x="1720" y="1040" width="41" height="41" fill="#b2697f"/><rect x="1760" y="1040" width="41" height="41" fill="#ac637a"/><rect x="1800" y="1040" width="41" height="41" fill="#a75e76"/><rect x="1840" y="1040" width="41" height="41" fill="#a25973"/><rect x="1880" y="1040" width="41" height="41" fill="#9d546f"/><rect x="0" y="1080" width="41" height="41" fill="#060104"/><rect x="40" y="1080" width="41" height="41" fill="#080206"/><rect x="80" y="1080" width="41" height="41" fill="#0a0408"/><rect x="120" y="1080" width="41" height="41" fill="#0d050a"/><rect x="160" y="1080" width="41" height="41" fill="#0f060c"/><rect x="200" y="1080" width="41" height="41" fill="#11070e"/><rect x="240" y="1080" width="41" height="41" fill="#130810"/><rect x="280" y="1080" width="41" height="41" fill="#160912"/><rect x="320" y="1080" width="41" height="41" fill="#180a14"/><rect x="360" y="1080" width="41" height="41" fill="#1b0b16"/><rect x="400" y="1080" width="41" height="41" fill="#1f0c19"/><rect x="440" y="1080" width="41" height="41" fill="#230e1c"/><rect x="480" y="1080" width="41" height="41" fill="#28101f"/><rect x="520" y="1080" width="41" height="41" fill="#2d1222"/><rect x="560" y="1080" width="41" height="41" fill="#321426"/><rect x="600" y="1080" width="41" height="41" fill="#38172a"/><rect x="640" y="1080" width="41" height="41" fill="#3e1b2e"/><rect x="680" y="1080" width="41" height="41" fill="#451f33"/><rect x="720" y="1080" width="41" height="41" fill="#4c2438"/><rect x="760" y="1080" width="41" height="41" fill="#54293e"/><rect x="800" y="1080" width="41" height="41" fill="#5c2f43"/><rect x="840" y="1080" width="41" height="41" fill="#643448"/><rect x="880" y="1080" width="41" height="41" fill="#6d3a4e"/><rect x="920" y="1080" width="41" height="41" fill="#774154"/><rect x="960" y="1080" width="41" height="41" fill="#804759"/><rect x="1000" y="1080" width="41" height="41" fill="#894e5f"/><rect x="1040" y="1080" width="41" height="41" fill="#925465"/><rect x="1080" y="1080" width="41" height="41" fill="#9b5b6b"/><rect x="1120" y="1080" width="41" height="41" fill="#a36271"/><rect x="1160" y="1080" width="41" height="41" fill="#ab6878"/><rect x="1200" y="1080" width="41" height="41" fill="#b36f7e"/><rect x="1240" y="1080" width="41" height="41" fill="#bb7785"/><rect x="1280" y="1080" width="41" height="41" fill="#c37d8b"/><rect x="1320" y="1080" width="41" height="41" fill="#c8828f"/><rect x="1360" y="1080" width="41" height="41" fill="#cb848f"/><rect x="1400" y="1080" width="41" height="41" fill="#cd848f"/><rect x="1440" y="1080" width="41" height="41" fill="#cd848e"/><rect x="1480" y="1080" width="41" height="41" fill="#cb828d"/><rect x="1520" y="1080" width="41" height="41" fill="#c97f8b"/><rect x="1560" y="1080" width="41" height="41" fill="#c57c89"/><rect x="1600" y="1080" width="41" height="41" fill="#c07786"/><rect x="1640" y="1080" width="41" height="41" fill="#bb7283"/><rect x="1680" y="1080" width="41" height="41" fill="#b56d7f"/><rect x="1720" y="1080" width="41" height="41" fill="#af677b"/><rect x="1760" y="1080" width="41" height="41" fill="#aa6277"/><rect x="1800" y="1080" width="41" height="41" fill="#a45d74"/><rect x="1840" y="1080" width="41" height="41" fill="#a05870"/><rect x="1880" y="1080" width="41" height="41" fill="#9b536d"/><rect x="0" y="1120" width="41" height="41" fill="#040002"/><rect x="40" y="1120" width="41" height="41" fill="#070204"/><rect x="80" y="1120" width="41" height="41" fill="#090306"/><rect x="120" y="1120" width="41" height="41" fill="#0b0409"/><rect x="160" y="1120" width="41" height="41" fill="#0e050a"/><rect x="200" y="1120" width="41" height="41" fill="#10060c"/><rect x="240" y="1120" width="41" height="41" fill="#12070e"/><rect x="280" y="1120" width="41" height="41" fill="#140810"/><rect x="320" y="1120" width="41" height="41" fill="#170912"/><rect x="360" y="1120" width="41" height="41" fill="#1a0a14"/><rect x="400" y="1120" width="41" height="41" fill="#1d0b17"/><rect x="440" y="1120" width="41" height="41" fill="#210c19"/><rect x="480" y="1120" width="41" height="41" fill="#260e1c"/><rect x="520" y="1120" width="41" height="41" fill="#2b101f"/><rect x="560" y="1120" width="41" height="41" fill="#301223"/><rect x="600" y="1120" width="41" height="41" fill="#361527"/><rect x="640" y="1120" width="41" height="41" fill="#3c192b"/><rect x="680" y="1120" width="41" height="41" fill="#431d30"/><rect x="720" y="1120" width="41" height="41" fill="#492135"/><rect x="760" y="1120" width="41" height="41" fill="#51263a"/><rect x="800" y="1120" width="41" height="41" fill="#592b3f"/><rect x="840" y="1120" width="41" height="41" fill="#613144"/><rect x="880" y="1120" width="41" height="41" fill="#6a3749"/><rect x="920" y="1120" width="41" height="41" fill="#733d4f"/><rect x="960" y="1120" width="41" height="41" fill="#7c4354"/><rect x="1000" y="1120" width="41" height="41" fill="#85495a"/><rect x="1040" y="1120" width="41" height="41" fill="#8d4f5f"/><rect x="1080" y="1120" width="41" height="41" fill="#965565"/><rect x="1120" y="1120" width="41" height="41" fill="#9e5b6a"/><rect x="1160" y="1120" width="41" height="41" fill="#a56170"/><rect x="1200" y="1120" width="41" height="41" fill="#ad6776"/><rect x="1240" y="1120" width="41" height="41" fill="#b46e7c"/><rect x="1280" y="1120" width="41" height="41" fill="#bb7482"/><rect x="1320" y="1120" width="41" height="41" fill="#c07885"/><rect x="1360" y="1120" width="41" height="41" fill="#c47a86"/><rect x="1400" y="1120" width="41" height="41" fill="#c67b85"/><rect x="1440" y="1120" width="41" height="41" fill="#c67b85"/><rect x="1480" y="1120" width="41" height="41" fill="#c57a85"/><rect x="1520" y="1120" width="41" height="41" fill="#c37884"/><rect x="1560" y="1120" width="41" height="41" fill="#bf7682"/><rect x="1600" y="1120" width="41" height="41" fill="#bb7280"/><rect x="1640" y="1120" width="41" height="41" fill="#b66e7e"/><rect x="1680" y="1120" width="41" height="41" fill="#b16a7b"/><rect x="1720" y="1120" width="41" height="41" fill="#ac6578"/><rect x="1760" y="1120" width="41" height="41" fill="#a76074"/><rect x="1800" y="1120" width="41" height="41" fill="#a25b71"/><rect x="1840" y="1120" width="41" height="41" fill="#9d566d"/><rect x="1880" y="1120" width="41" height="41" fill="#99526a"/><rect x="0" y="1160" width="41" height="41" fill="#030001"/><rect x="40" y="1160" width="41" height="41" fill="#050103"/><rect x="80" y="1160" width="41" height="41" fill="#080205"/><rect x="120" y="1160" width="41" height="41" fill="#0a0307"/><rect x="160" y="1160" width="41" height="41" fill="#0c0409"/><rect x="200" y="1160" width="41" height="41" fill="#0e050a"/><rect x="240" y="1160" width="41" height="41" fill="#10050c"/><rect x="280" y="1160" width="41" height="41" fill="#13060e"/><rect x="320" y="1160" width="41" height="41" fill="#150710"/><rect x="360" y="1160" width="41" height="41" fill="#180812"/><rect x="400" y="1160" width="41" height="41" fill="#1c0a14"/><rect x="440" y="1160" width="41" height="41" fill="#200b17"/><rect x="480" y="1160" width="41" height="41" fill="#240c1a"/><rect x="520" y="1160" width="41" height="41" fill="#290e1d"/><rect x="560" y="1160" width="41" height="41" fill="#2e1120"/><rect x="600" y="1160" width="41" height="41" fill="#341324"/><rect x="640" y="1160" width="41" height="41" fill="#3a1728"/><rect x="680" y="1160" width="41" height="41" fill="#401a2c"/><rect x="720" y="1160" width="41" height="41" fill="#471f31"/><rect x="760" y="1160" width="41" height="41" fill="#4e2336"/><rect x="800" y="1160" width="41" height="41" fill="#56283b"/><rect x="840" y="1160" width="41" height="41" fill="#5e2e40"/><rect x="880" y="1160" width="41" height="41" fill="#673345"/><rect x="920" y="1160" width="41" height="41" fill="#6f384a"/><rect x="960" y="1160" width="41" height="41" fill="#783e4f"/><rect x="1000" y="1160" width="41" height="41" fill="#804454"/><rect x="1040" y="1160" width="41" height="41" fill="#894959"/><rect x="1080" y="1160" width="41" height="41" fill="#914f5f"/><rect x="1120" y="1160" width="41" height="41" fill="#985464"/><rect x="1160" y="1160" width="41" height="41" fill="#a05a69"/><rect x="1200" y="1160" width="41" height="41" fill="#a7606e"/><rect x="1240" y="1160" width="41" height="41" fill="#ae6574"/><rect x="1280" y="1160" width="41" height="41" fill="#b46b79"/><rect x="1320" y="1160" width="41" height="41" fill="#b96f7c"/><rect x="1360" y="1160" width="41" height="41" fill="#bc717d"/><rect x="1400" y="1160" width="41" height="41" fill="#be737d"/><rect x="1440" y="1160" width="41" height="41" fill="#bf737e"/><rect x="1480" y="1160" width="41" height="41" fill="#be737e"/><rect x="1520" y="1160" width="41" height="41" fill="#bd727d"/><rect x="1560" y="1160" width="41" height="41" fill="#ba707c"/><rect x="1600" y="1160" width="41" height="41" fill="#b66d7a"/><rect x="1640" y="1160" width="41" height="41" fill="#b26a78"/><rect x="1680" y="1160" width="41" height="41" fill="#ad6676"/><rect x="1720" y="1160" width="41" height="41" fill="#a96273"/><rect x="1760" y="1160" width="41" height="41" fill="#a45e71"/><rect x="1800" y="1160" width="41" height="41" fill="#9f596e"/><rect x="1840" y="1160" width="41" height="41" fill="#9b556a"/><rect x="1880" y="1160" width="41" height="41" fill="#975067"/><rect x="0" y="1200" width="41" height="41" fill="#020000"/><rect x="40" y="1200" width="41" height="41" fill="#040001"/><rect x="80" y="1200" width="41" height="41" fill="#060103"/><rect x="120" y="1200" width="41" height="41" fill="#090205"/><rect x="160" y="1200" width="41" height="41" fill="#0b0307"/><rect x="200" y="1200" width="41" height="41" fill="#0d0308"/><rect x="240" y="1200" width="41" height="41" fill="#0f040a"/><rect x="280" y="1200" width="41" height="41" fill="#12050c"/><rect x="320" y="1200" width="41" height="41" fill="#14060e"/><rect x="360" y="1200" width="41" height="41" fill="#170710"/><rect x="400" y="1200" width="41" height="41" fill="#1a0812"/><rect x="440" y="1200" width="41" height="41" fill="#1e0915"/><rect x="480" y="1200" width="41" height="41" fill="#230b17"/><rect x="520" y="1200" width="41" height="41" fill="#270d1a"/><rect x="560" y="1200" width="41" height="41" fill="#2c0f1e"/><rect x="600" y="1200" width="41" height="41" fill="#321221"/><rect x="640" y="1200" width="41" height="41" fill="#381525"/><rect x="680" y="1200" width="41" height="41" fill="#3e1829"/><rect x="720" y="1200" width="41" height="41" fill="#451c2e"/><rect x="760" y="1200" width="41" height="41" fill="#4c2132"/><rect x="800" y="1200" width="41" height="41" fill="#532537"/><rect x="840" y="1200" width="41" height="41" fill="#5b2a3c"/><rect x="880" y="1200" width="41" height="41" fill="#632f41"/><rect x="920" y="1200" width="41" height="41" fill="#6c3545"/><rect x="960" y="1200" width="41" height="41" fill="#743a4a"/><rect x="1000" y="1200" width="41" height="41" fill="#7c3f4f"/><rect x="1040" y="1200" width="41" height="41" fill="#844454"/><rect x="1080" y="1200" width="41" height="41" fill="#8c4959"/><rect x="1120" y="1200" width="41" height="41" fill="#934f5e"/><rect x="1160" y="1200" width="41" height="41" fill="#9a5462"/><rect x="1200" y="1200" width="41" height="41" fill="#a15967"/><rect x="1240" y="1200" width="41" height="41" fill="#a75e6c"/><rect x="1280" y="1200" width="41" height="41" fill="#ad6370"/><rect x="1320" y="1200" width="41" height="41" fill="#b26773"/><rect x="1360" y="1200" width="41" height="41" fill="#b56975"/><rect x="1400" y="1200" width="41" height="41" fill="#b76b76"/><rect x="1440" y="1200" width="41" height="41" fill="#b86c76"/><rect x="1480" y="1200" width="41" height="41" fill="#b86c77"/><rect x="1520" y="1200" width="41" height="41" fill="#b66b76"/><rect x="1560" y="1200" width="41" height="41" fill="#b46a76"/><rect x="1600" y="1200" width="41" height="41" fill="#b16875"/><rect x="1640" y="1200" width="41" height="41" fill="#ad6573"/><rect x="1680" y="1200" width="41" height="41" fill="#a96271"/><rect x="1720" y="1200" width="41" height="41" fill="#a55e6f"/><rect x="1760" y="1200" width="41" height="41" fill="#a15b6d"/><rect x="1800" y="1200" width="41" height="41" fill="#9d576a"/><rect x="1840" y="1200" width="41" height="41" fill="#995367"/><rect x="1880" y="1200" width="41" height="41" fill="#954f64"/><rect x="0" y="1240" width="41" height="41" fill="#010000"/><rect x="40" y="1240" width="41" height="41" fill="#030000"/><rect x="80" y="1240" width="41" height="41" fill="#050001"/><rect x="120" y="1240" width="41" height="41" fill="#070003"/><rect x="160" y="1240" width="41" height="41" fill="#090105"/><rect x="200" y="1240" width="41" height="41" fill="#0c0206"/><rect x="240" y="1240" width="41" height="41" fill="#0e0308"/><rect x="280" y="1240" width="41" height="41" fill="#10040a"/><rect x="320" y="1240" width="41" height="41" fill="#13050c"/><rect x="360" y="1240" width="41" height="41" fill="#16060e"/><rect x="400" y="1240" width="41" height="41" fill="#190710"/><rect x="440" y="1240" width="41" height="41" fill="#1d0813"/><rect x="480" y="1240" width="41" height="41" fill="#210a15"/><rect x="520" y="1240" width="41" height="41" fill="#260b18"/><rect x="560" y="1240" width="41" height="41" fill="#2b0e1b"/><rect x="600" y="1240" width="41" height="41" fill="#31101f"/><rect x="640" y="1240" width="41" height="41" fill="#361322"/><rect x="680" y="1240" width="41" height="41" fill="#3c1626"/><rect x="720" y="1240" width="41" height="41" fill="#431a2b"/><rect x="760" y="1240" width="41" height="41" fill="#4a1e2f"/><rect x="800" y="1240" width="41" height="41" fill="#512333"/><rect x="840" y="1240" width="41" height="41" fill="#592738"/><rect x="880" y="1240" width="41" height="41" fill="#602c3c"/><rect x="920" y="1240" width="41" height="41" fill="#683141"/><rect x="960" y="1240" width="41" height="41" fill="#703645"/><rect x="1000" y="1240" width="41" height="41" fill="#783b4a"/><rect x="1040" y="1240" width="41" height="41" fill="#80404f"/><rect x="1080" y="1240" width="41" height="41" fill="#874453"/><rect x="1120" y="1240" width="41" height="41" fill="#8e4958"/><rect x="1160" y="1240" width="41" height="41" fill="#954e5c"/><rect x="1200" y="1240" width="41" height="41" fill="#9b5361"/><rect x="1240" y="1240" width="41" height="41" fill="#a15865"/><rect x="1280" y="1240" width="41" height="41" fill="#a75c69"/><rect x="1320" y="1240" width="41" height="41" fill="#ab5f6b"/><rect x="1360" y="1240" width="41" height="41" fill="#ae626d"/><rect x="1400" y="1240" width="41" height="41" fill="#b0646f"/><rect x="1440" y="1240" width="41" height="41" fill="#b16570"/><rect x="1480" y="1240" width="41" height="41" fill="#b16570"/><rect x="1520" y="1240" width="41" height="41" fill="#b06570"/><rect x="1560" y="1240" width="41" height="41" fill="#af6470"/><rect x="1600" y="1240" width="41" height="41" fill="#ac626f"/><rect x="1640" y="1240" width="41" height="41" fill="#a9606e"/><rect x="1680" y="1240" width="41" height="41" fill="#a65e6c"/><rect x="1720" y="1240" width="41" height="41" fill="#a25b6b"/><rect x="1760" y="1240" width="41" height="41" fill="#9e5768"/><rect x="1800" y="1240" width="41" height="41" fill="#9a5466"/><rect x="1840" y="1240" width="41" height="41" fill="#965064"/><rect x="1880" y="1240" width="41" height="41" fill="#934c61"/><rect x="0" y="1280" width="41" height="41" fill="#000000"/><rect x="40" y="1280" width="41" height="41" fill="#020000"/><rect x="80" y="1280" width="41" height="41" fill="#040000"/><rect x="120" y="1280" width="41" height="41" fill="#060001"/><rect x="160" y="1280" width="41" height="41" fill="#080003"/><rect x="200" y="1280" width="41" height="41" fill="#0a0105"/><rect x="240" y="1280" width="41" height="41" fill="#0d0206"/><rect x="280" y="1280" width="41" height="41" fill="#0f0308"/><rect x="320" y="1280" width="41" height="41" fill="#12030a"/><rect x="360" y="1280" width="41" height="41" fill="#15040c"/><rect x="400" y="1280" width="41" height="41" fill="#18060e"/><rect x="440" y="1280" width="41" height="41" fill="#1c0710"/><rect x="480" y="1280" width="41" height="41" fill="#200813"/><rect x="520" y="1280" width="41" height="41" fill="#250a16"/><rect x="560" y="1280" width="41" height="41" fill="#2a0c19"/><rect x="600" y="1280" width="41" height="41" fill="#2f0f1c"/><rect x="640" y="1280" width="41" height="41" fill="#351220"/><rect x="680" y="1280" width="41" height="41" fill="#3b1523"/><rect x="720" y="1280" width="41" height="41" fill="#411827"/><rect x="760" y="1280" width="41" height="41" fill="#481c2c"/><rect x="800" y="1280" width="41" height="41" fill="#4f2030"/><rect x="840" y="1280" width="41" height="41" fill="#562434"/><rect x="880" y="1280" width="41" height="41" fill="#5d2938"/><rect x="920" y="1280" width="41" height="41" fill="#652d3d"/><rect x="960" y="1280" width="41" height="41" fill="#6c3241"/><rect x="1000" y="1280" width="41" height="41" fill="#743745"/><rect x="1040" y="1280" width="41" height="41" fill="#7b3b4a"/><rect x="1080" y="1280" width="41" height="41" fill="#82404e"/><rect x="1120" y="1280" width="41" height="41" fill="#894452"/><rect x="1160" y="1280" width="41" height="41" fill="#904957"/><rect x="1200" y="1280" width="41" height="41" fill="#964d5b"/><rect x="1240" y="1280" width="41" height="41" fill="#9b525e"/><rect x="1280" y="1280" width="41" height="41" fill="#a05562"/><rect x="1320" y="1280" width="41" height="41" fill="#a45964"/><rect x="1360" y="1280" width="41" height="41" fill="#a85b67"/><rect x="1400" y="1280" width="41" height="41" fill="#aa5d68"/><rect x="1440" y="1280" width="41" height="41" fill="#ab5e69"/><rect x="1480" y="1280" width="41" height="41" fill="#ab5f6a"/><rect x="1520" y="1280" width="41" height="41" fill="#ab5f6a"/><rect x="1560" y="1280" width="41" height="41" fill="#a95e6a"/><rect x="1600" y="1280" width="41" height="41" fill="#a75d69"/><rect x="1640" y="1280" width="41" height="41" fill="#a45b69"/><rect x="1680" y="1280" width="41" height="41" fill="#a15967"/><rect x="1720" y="1280" width="41" height="41" fill="#9e5766"/><rect x="1760" y="1280" width="41" height="41" fill="#9b5464"/><rect x="1800" y="1280" width="41" height="41" fill="#975162"/><rect x="1840" y="1280" width="41" height="41" fill="#944d60"/><rect x="1880" y="1280" width="41" height="41" fill="#904a5e"/></svg></div><!--/BG-->
<div class="a" id="glow" style="left:0;top:0;width:1680px;height:1050px;background:radial-gradient(ellipse 110px 150px at 1040px 14px, rgba(255,120,108,.85) 0%, rgba(252,114,106,.4) 40%, rgba(230,100,110,0) 100%)"></div>

<!-- TOP PANEL -->
<div class="a panel" style="top:0">
 <svg class="a" style="left:4px;top:0" width="28" height="24" viewBox="0 0 28 24">
  <circle cx="15.1" cy="12.1" r="5.2" fill="none" stroke="#f4f4f4" stroke-width="3.6"/>
  <path d="M15.1 12.1 L24 12.1M15.1 12.1 L10.6 4.4M15.1 12.1 L10.6 19.8" stroke="#333" stroke-width="1.1"/>
  <circle cx="6.5" cy="12.3" r="2.6" fill="#333"/><circle cx="19.5" cy="4.3" r="2.6" fill="#333"/><circle cx="19.5" cy="19.6" r="2.6" fill="#333"/>
  <circle cx="6.5" cy="12.3" r="1.7" fill="#f4f4f4"/><circle cx="19.5" cy="4.3" r="1.7" fill="#f4f4f4"/><circle cx="19.5" cy="19.6" r="1.7" fill="#f4f4f4"/>
 </svg>
 <div class="ptxt" style="left:35px;top:2px">Applications</div>
 <div class="ptxt" style="left:126px;top:2px">Places</div>
 <div class="ptxt" style="left:180px;top:2px">System</div>
 <svg class="a" style="left:236px;top:1px" width="24" height="23" viewBox="0 0 24 23">
  <defs><radialGradient id="ffg" cx="0.55" cy="0.35" r="0.6"><stop offset="0" stop-color="#7fd3f5"/><stop offset=".6" stop-color="#2a6fc0"/><stop offset="1" stop-color="#12306e"/></radialGradient>
  <linearGradient id="ffo" x1="0" y1="0" x2="1" y2="1"><stop offset="0" stop-color="#e8531a"/><stop offset=".6" stop-color="#f08a1c"/><stop offset="1" stop-color="#f6c431"/></linearGradient></defs>
  <circle cx="12.5" cy="11" r="9" fill="url(#ffg)"/>
  <path d="M3 8 C2 15 7 22 14 22 C20 22 23 16 22 10 C21 5 18 3 17 3 C20 7 20 12 17 16 C13 19 8 17 8 13 C10 14 12 14 13 13 C10 12 9 10 9 8 C8 6 9 4 10 3 C7 4 6 6 6 6 C5 4 6 2 6 2 C4 3 3 6 3 8Z" fill="url(#ffo)"/>
 </svg>
 <svg class="a" style="left:261px;top:1px" width="22" height="23" viewBox="0 0 22 23">
  <defs><radialGradient id="hg" cx="0.5" cy="0.3" r="0.7"><stop offset="0" stop-color="#6fa3d8"/><stop offset="1" stop-color="#3a74b4"/></radialGradient></defs>
  <circle cx="11" cy="11.5" r="10.5" fill="url(#hg)"/>
  <circle cx="11" cy="11.5" r="9.6" fill="none" stroke="#8ab6e0" stroke-width=".6"/>
  <path d="M7.3 8.2 C7.3 5.6 9 4.6 11 4.6 C13.3 4.6 15 5.8 15 8 C15 10.6 11.8 10.8 11.8 13.6" fill="none" stroke="#fff" stroke-width="2.1"/>
  <rect x="10.4" y="15.6" width="2.6" height="2.6" fill="#fff"/>
 </svg>
 <svg class="a" style="left:1309px;top:4px" width="6" height="18"><circle cx="3" cy="3" r="1.8" fill="#bdbdbd"/><circle cx="3" cy="8.5" r="1.8" fill="#bdbdbd"/><circle cx="3" cy="14" r="1.8" fill="#bdbdbd"/></svg>
 <div class="a" style="left:1317px;top:0;width:20px;height:24px;background:#e0dedb"></div>
 <div class="a" style="left:1320px;top:5px;width:13px;height:14px;background:#0a0;border:1px solid #022;background-image:linear-gradient(90deg,rgba(0,0,0,.55) 1px,transparent 1px),linear-gradient(rgba(0,0,0,.55) 1px,transparent 1px);background-size:2px 2px"></div>
 <svg class="a" style="left:1339px;top:3px" width="20" height="20" viewBox="0 0 20 20" fill="none" stroke="#9a9a9a" stroke-width="2">
  <path d="M1 19 L6 14"/><path d="M5 9 L11 15 L14 12 C16 10 16 7 14 6 C13 4 10 4 8 6 Z" fill="#9a9a9a"/><path d="M13 7 L19 1"/></svg>
 <svg class="a" style="left:1369px;top:4px" width="21" height="18" viewBox="0 0 21 18" fill="none" stroke="#a0a0a0" stroke-width="1.3">
  <path d="M10.5 0 V3"/><rect x="1" y="4" width="19" height="12" rx="2"/>
  <path d="M4 8h2M8 8h2M12 8h2M16 8h1M4 11h2M8 11h2M12 11h2M16 11h1M6 14h9"/></svg>
 <svg class="a" style="left:1403px;top:5px" width="20" height="16" viewBox="0 0 20 16" fill="#a6a6a6">
  <path d="M1 5h3l5-4v14l-5-4H1z"/><rect x="11" y="4" width="1.8" height="8"/><rect x="15" y="1" width="2" height="14"/></svg>
 <svg class="a" style="left:1437px;top:5px" width="21" height="15" viewBox="0 0 21 15" fill="none" stroke="#a8a8a8" stroke-width="1.3">
  <rect x="1" y="1" width="19" height="13"/><path d="M1 1 L10.5 9 L20 1M1 14 L8 7.5M20 14 L13 7.5"/></svg>
 <div class="ptxt" style="left:1467px;top:3px;font-size:14.3px">St srp 24, 21:18</div>
 <svg class="a" style="left:1580px;top:5px" width="17" height="16" viewBox="0 0 17 16"><path d="M3 1h11c2 0 3 1 3 3v5c0 2-1 3-3 3H9l-4 4 1-4H3C1 12 0 11 0 9V4c0-2 1-3 3-3z" fill="#585858"/></svg>
 <div class="ptxt" style="left:1602px;top:3px;font-size:15px">gravos</div>
 <svg class="a" style="left:1658px;top:4px" width="17" height="17" viewBox="0 0 17 17" fill="none" stroke="#a0a0a0" stroke-width="2"><path d="M5 4 A6.5 6.5 0 1 0 12 4"/><path d="M8.5 1 V8"/></svg>
</div>

<!-- TERMINAL -->
<div class="a" style="left:21px;top:488px;width:660px;height:6px;background:#5a5a5a;border-top:1px solid #3a3a3a;border-bottom:1px solid #1c1c1c;border-radius:0 0 5px 5px"></div>
<div class="a" id="term" style="left:21px;top:30px;width:660px;height:459px;background:#fff;border-radius:5px 5px 0 0;overflow:hidden">
 <div class="a" style="left:0;top:0;width:660px;height:48px;background:linear-gradient(#6e6e6e,#5f5f5f 40%,#4f4f4f);border-radius:5px 5px 0 0;border-top:1px solid #8a8a8a"></div>
 <div class="a" style="left:0;top:48px;width:660px;height:1px;background:#2e2e2e"></div>
 <svg class="a" style="left:8px;top:5px" width="16" height="14" viewBox="0 0 16 14"><rect x=".5" y=".5" width="15" height="13" fill="#111" stroke="#ccc"/><path d="M3 3 L6.5 5.5 L3 8" fill="none" stroke="#ddd" stroke-width="1"/><path d="M6 10.5h5.5" stroke="#ddd" stroke-width="1.2"/></svg>
 <div class="ttl" style="left:97px;top:3px;font-size:15.3px;letter-spacing:.3px;color:#a0a0a0">gravos@gravos-machines: ~/.wine/dosdevices/c:/armo</div>
 <div class="wbtn" style="left:578px;top:0;width:21px;height:15px"><div class="a" style="left:5px;top:6px;width:10px;height:2px;background:#a6a6a6"></div></div>
 <div class="wbtn" style="left:602px;top:0;width:21px;height:15px"><svg class="a" style="left:4px;top:3px" width="12" height="8"><path d="M1 7 L6 2 L11 7" fill="none" stroke="#a6a6a6" stroke-width="1.4"/></svg></div>
 <div class="wbtn" style="left:629px;top:0;width:24px;height:19px"><svg class="a" style="left:6px;top:4px" width="11" height="11"><path d="M1 1 L10 10M10 1 L1 10" stroke="#a6a6a6" stroke-width="1.4"/></svg></div>
 <div class="a mt" style="left:0;top:26px;font-size:14.3px;color:#dfdbd2;white-space:pre">
  <span class="a" style="left:8px;top:3px"><u>F</u>ile</span><span class="a" style="left:45px;top:3px"><u>E</u>dit</span><span class="a" style="left:84px;top:3px"><u>V</u>iew</span><span class="a" style="left:130px;top:3px"><u>T</u>erminal</span><span class="a" style="left:200px;top:3px"><u>H</u>elp</span>
 </div>
 <div class="a mono" style="left:1px;top:51px;font-size:13.33px;line-height:17px;white-space:pre;color:#000">gravos@gravos-machines:~/.wine/dosdevices/c:$ cd armo
gravos@gravos-machines:~/.wine/dosdevices/c:/armo$ wine armote.exe
err:winediag:X11DRV_WineGL_InitOpenglInfo The Mesa OpenGL driver is using softwa
re rendering, most likely your OpenGL drivers haven't been installed correctly
gravos@gravos-machines:~/.wine/dosdevices/c:/armo$ wine armote.exe
err:winediag:X11DRV_WineGL_InitOpenglInfo The Mesa OpenGL driver is using softwa
re rendering, most likely your OpenGL drivers haven't been installed correctly</div>
 <div class="a" style="left:1px;top:169px;width:9px;height:18px;border:1px solid #000"></div>
 <div class="a" style="left:642px;top:49px;width:18px;height:412px;background:linear-gradient(90deg,#c4c4c4,#e4e4e4 40%,#dcdcdc)"></div>
 <svg class="a" style="left:644px;top:51px" width="14" height="14"><path d="M7 3 L11 11 L3 11 Z" fill="#cfcfcf" stroke="#9a9a9a"/></svg>
 <div class="a" style="left:642px;top:67px;width:15px;height:400px;background:linear-gradient(90deg,#7c7c7c,#8e8e8e);border:1px solid #6a6a6a;border-radius:0 4px 0 0"></div>
</div>
<!-- WINE / ARMOTE -->
<div class="a" style="left:144px;top:983px;width:1026px;height:7px;background:#5a5a5a;border-bottom:1px solid #1c1c1c;border-radius:0 0 5px 5px"></div>
<div class="a" style="left:144px;top:191px;width:1026px;height:794px;background:#d4d0c8;border-radius:5px 5px 0 0;border-right:1px solid #2e2e2e;border-left:1px solid #3a3a3a"></div>
<div class="a" style="left:144px;top:191px;width:1025px;height:26px;background:linear-gradient(#6c6c6c,#5c5c5c 50%,#555);border-radius:5px 5px 0 0;border-top:1px solid #7e7e7e"></div>
<svg class="a" style="left:155px;top:194px" width="12" height="20" viewBox="0 0 12 20"><path d="M2 1 H10 C11 5 11 9 6 11 C1 9 1 5 2 1Z" fill="#ddd" stroke="#999" stroke-width=".6"/><path d="M2.3 5 H9.7 C10 8 9 10 6 11 C3 10 2 8 2.3 5Z" fill="#c8102e"/><rect x="5.3" y="11" width="1.4" height="5" fill="#bbb"/><ellipse cx="6" cy="17" rx="3.5" ry="1.3" fill="#ccc"/></svg>
<div class="ttl" style="left:540px;top:194px;font-size:15.3px;letter-spacing:.3px;color:#a2a2a2">Armote.exe - Wine desktop</div>
<div class="wbtn" style="left:1114px;top:191px;width:21px;height:14px"><div class="a" style="left:5px;top:6px;width:10px;height:2px;background:#a6a6a6"></div></div>
<div class="wbtn" style="left:1138px;top:191px;width:25px;height:19px"><svg class="a" style="left:6px;top:4px" width="11" height="11"><path d="M1 1 L10 10M10 1 L1 10" stroke="#a6a6a6" stroke-width="1.4"/></svg></div>
<div class="a" style="left:145px;top:217px;width:1024px;height:19px;background:linear-gradient(90deg,#0a246a 0%,#3a5fa0 35%,#7fa2d8 70%,#a6caf0 100%)"></div>
<svg class="a" style="left:146px;top:218px" width="17" height="17" viewBox="0 0 17 17"><circle cx="8.5" cy="8" r="6.5" fill="#0e7b7b" stroke="#5bbcbc" stroke-dasharray="1.2 1.2"/><rect x="7" y="3" width="3" height="11" fill="#b8a850"/><path d="M1 14 L8 8 L9 10 L16 2" fill="none" stroke="#ffff30" stroke-width="1.6"/><circle cx="8.5" cy="15" r="1.5" fill="#c00"/></svg>
<div class="a" style="left:165px;top:220px;font-size:11.4px;font-weight:bold;color:#fff;white-space:pre;letter-spacing:.45px;line-height:15px">Armote 1.15 beta - Z:\media\8A84681484680553\bck040611\cd\users\Dvorak - prosek\3d\ball surface.nc</div>
<div class="btn" style="left:1117px;top:219px;width:16px;height:14px"><div class="a" style="left:4px;top:9px;width:7px;height:2px;background:#000"></div></div>
<div class="btn" style="left:1133px;top:219px;width:16px;height:14px"><div class="a" style="left:6px;top:2px;width:7px;height:6px;border:1px solid #aab;border-top-width:2px"></div><div class="a" style="left:3px;top:5px;width:7px;height:6px;border:1px solid #aab;border-top-width:2px;background:#d4d0c8"></div></div>
<div class="btn" style="left:1151px;top:219px;width:16px;height:14px"><svg class="a" style="left:3px;top:2px" width="10" height="9"><path d="M1 1 L9 8M9 1 L1 8" stroke="#000" stroke-width="1.8"/></svg></div>
<div class="a" style="left:150px;top:241px;white-space:pre;font-size:11px"><span class="a" style="left:0"><u>S</u>oubor</span><span class="a" style="left:46px"><u>Z</u>obrazení</span><span class="a" style="left:105px"><u>N</u>ástroje</span><span class="a" style="left:157px">S<u>t</u>roj</span></div>
<div class="sunk" style="left:148px;top:263px;width:15px;height:648px;background:#fff;border-color:#808080 #fff #fff #808080;box-shadow:inset 1px 1px 0 #404040"></div>
<svg class="a" style="left:147px;top:386px" width="23" height="13" viewBox="0 0 23 13"><path d="M.5 .5 H16 L21.5 6 L16 12.5 H.5Z" fill="#d4d0c8" stroke="#fff" stroke-width="1"/><path d="M.5 12.5 H16 L21.5 6.5" fill="none" stroke="#000" stroke-width="1"/></svg>
<div class="a" id="v3d" style="left:170px;top:255px;width:795px;height:664px;background:#364a4a;overflow:hidden"><!--V3D--><svg class="a" style="left:0;top:0" width="795" height="663" viewBox="0 0 795 663">
<rect width="795" height="663" fill="#364a4a"/>
<polygon points="232.9,662.4 1065.4,320.7 627.1,108.6 76.1,214.1" fill="#000"/>
<line x1="1065.4" y1="320.7" x2="627.1" y2="108.6" stroke="#9c9c9c" stroke-width="1" shape-rendering="crispEdges"/>
<line x1="627.1" y1="108.6" x2="76.1" y2="214.1" stroke="#9c9c9c" stroke-width="1" shape-rendering="crispEdges"/>
<line x1="76.1" y1="214.1" x2="232.9" y2="662.4" stroke="#9c9c9c" stroke-width="1" shape-rendering="crispEdges"/>
<line x1="76.1" y1="214.1" x2="38.5" y2="65.0" stroke="#9c9c9c" stroke-width="1" shape-rendering="crispEdges"/>
<line x1="627.1" y1="108.6" x2="647.3" y2="-11.5" stroke="#9c9c9c" stroke-width="1" shape-rendering="crispEdges"/>
<line x1="38.5" y1="65.0" x2="647.3" y2="-11.5" stroke="#9c9c9c" stroke-width="1" shape-rendering="crispEdges"/>
<line x1="647.3" y1="-11.5" x2="1165.6" y2="146.8" stroke="#9c9c9c" stroke-width="1" shape-rendering="crispEdges"/>
<g fill="#000" stroke="#f00" stroke-width="1" shape-rendering="crispEdges">
<path d="M89.4,233.7 91.6,225.5 95.9,217.0 102.5,209.4 111.6,203.2 121.1,199.5 127.1,198.3 133.1,197.9 143.5,199.0 156.3,203.6 162.8,196.0 169.7,190.5 178.7,185.8 187.9,183.1 195.5,182.2 203.1,182.5 210.9,184.1 216.9,186.3 222.9,189.8 227.0,193.1 231.3,197.8 235.7,204.3 265.2,198.4 267.9,190.4 270.9,185.2 274.0,181.2 277.2,178.0 282.1,174.3 287.0,171.6 292.1,169.8 300.5,168.5 309.1,169.5 316.0,172.4 319.5,174.8 323.0,178.2 324.6,178.6 330.7,168.2 335.3,162.7 340.1,158.4 349.6,152.4 354.4,150.3 360.8,148.6 370.3,147.9 378.3,149.1 386.1,152.4 392.3,157.2 393.8,156.3 401.5,148.5 410.6,142.6 419.7,139.4 428.7,138.5 437.5,140.0 441.8,141.9 446.1,144.7 451.6,150.8 455.5,159.2 456.8,159.9 490.3,153.2 490.3,153.2 89.4,233.7Z"/>
<path d="M89.5,232.9 90.6,228.6 93.2,222.1 96.3,217.2 99.6,213.3 103.1,210.0 108.5,206.0 114.1,203.0 119.9,200.8 129.8,198.8 138.0,198.7 146.4,200.1 155.0,203.3 156.9,203.0 160.2,199.1 165.3,194.3 170.5,190.5 175.9,187.5 187.0,183.6 198.4,182.2 210.0,183.4 216.0,185.2 221.9,188.0 228.1,192.2 232.3,196.1 238.9,206.0 265.0,200.7 267.7,192.3 272.2,184.7 278.6,177.9 285.2,173.4 290.3,171.1 295.3,169.6 300.4,168.8 305.6,168.7 314.2,170.6 319.4,173.1 324.6,177.3 326.2,177.0 332.4,167.5 337.1,162.3 341.8,158.2 351.4,152.3 356.3,150.3 362.7,148.5 372.3,147.8 380.2,148.9 388.1,152.0 394.3,156.4 403.6,147.6 412.8,141.9 421.9,138.7 427.9,137.8 432.4,137.8 441.2,139.6 445.5,141.5 449.8,144.4 455.3,150.5 460.5,161.2 492.6,154.7 492.6,154.7 90.3,236.0Z"/>
<path d="M89.4,233.7 89.6,234.0 89.5,233.3 89.5,232.9" fill="none"/>
<path d="M89.9,233.3 91.0,229.3 93.8,223.1 98.6,216.4 105.6,209.9 113.0,205.3 122.7,201.7 128.7,200.5 134.8,200.0 145.2,200.9 156.0,204.5 157.7,203.3 164.5,196.3 173.3,190.0 182.5,185.9 191.9,183.5 199.5,182.8 207.3,183.3 215.2,185.0 221.1,187.3 227.2,190.7 233.4,195.8 237.7,200.9 242.2,207.6 264.9,203.0 269.1,192.4 273.7,185.2 280.2,178.7 286.8,174.2 291.9,171.9 297.0,170.4 302.1,169.6 307.3,169.6 312.4,170.3 317.6,172.0 322.8,174.8 326.3,177.6 327.9,176.7 331.0,171.7 335.7,165.8 343.7,158.5 353.3,152.7 358.2,150.8 364.6,149.0 372.7,148.2 380.7,148.9 388.6,151.5 396.4,155.9 401.0,151.1 405.7,147.2 414.9,141.7 424.1,138.5 430.2,137.6 434.7,137.6 440.6,138.4 445.0,139.8 449.3,141.9 453.5,144.9 457.7,149.2 460.3,153.3 464.1,162.6 494.9,156.3 494.9,156.3 91.1,238.3Z"/>
<path d="M492.6,154.7 493.4,155.3 494.2,155.8 494.9,156.3" fill="none"/>
<path d="M90.6,235.3 91.8,231.3 94.6,225.2 99.4,218.4 106.5,211.9 113.9,207.4 123.7,203.7 129.7,202.5 135.8,202.0 146.3,202.9 157.1,206.4 163.8,199.0 172.6,192.3 181.8,187.8 193.1,184.7 200.8,184.0 208.6,184.4 216.4,186.1 222.4,188.3 228.5,191.6 234.7,196.5 239.0,201.2 243.6,208.8 245.4,209.3 266.5,205.0 269.2,196.9 273.7,188.7 280.2,181.6 288.5,175.7 293.6,173.4 298.7,171.9 303.8,171.1 309.0,171.0 314.2,171.8 319.4,173.4 324.6,176.2 328.1,178.9 337.5,166.6 345.5,159.5 355.3,153.7 360.1,151.7 366.6,150.0 374.7,149.1 382.7,149.8 389.0,151.6 396.9,155.9 398.5,155.9 407.8,147.5 417.1,142.0 426.3,138.9 436.9,137.9 442.9,138.7 447.3,140.0 451.6,142.0 455.9,144.9 460.0,148.9 462.7,152.6 467.8,163.9 497.3,157.9 497.3,157.9 92.0,240.6Z"/>
<path d="M89.9,233.3 90.1,233.8 90.3,234.4 90.6,235.3" fill="none"/>
<path d="M91.8,238.8 92.9,234.6 95.7,228.3 98.8,223.4 102.2,219.5 105.7,216.2 111.2,212.2 116.9,209.1 122.8,206.9 130.8,205.1 139.0,204.6 147.5,205.6 156.1,208.2 158.2,208.1 163.2,202.4 168.4,197.8 173.8,194.1 179.3,191.1 190.5,187.2 198.2,186.0 204.0,185.7 215.8,187.2 221.8,189.1 227.9,192.0 234.0,196.2 238.3,200.2 242.6,205.8 244.9,209.9 246.9,211.4 268.1,207.0 272.3,196.1 277.0,188.9 280.2,185.3 285.2,181.1 293.6,176.3 298.7,174.5 303.9,173.4 312.5,173.3 321.2,175.5 326.5,178.3 330.0,181.2 336.2,171.7 342.6,164.9 350.7,158.7 358.8,154.4 368.6,151.4 375.1,150.6 379.9,150.6 389.5,152.4 394.3,154.4 399.0,157.2 400.6,156.6 408.4,149.4 414.6,145.2 422.4,141.6 430.1,139.4 437.7,138.7 443.7,139.2 449.6,140.7 455.4,143.5 459.6,146.6 463.7,151.0 466.4,155.0 470.2,163.3 474.5,162.9 478.6,163.8 499.7,159.5 499.7,159.5 92.8,243.0Z"/>
<path d="M497.3,157.9 498.1,158.4 498.9,159.0 499.7,159.5" fill="none"/>
<path d="M93.4,244.3 95.6,235.6 100.1,227.3 107.0,219.7 114.3,214.5 124.0,210.2 130.1,208.8 136.2,208.0 146.7,208.5 157.6,211.7 159.4,210.6 167.9,201.6 175.1,196.4 184.3,191.8 193.8,189.1 201.5,188.1 209.4,188.2 217.3,189.5 223.3,191.4 229.4,194.3 235.6,198.6 239.8,202.6 244.2,208.3 251.2,205.4 258.4,204.2 265.7,205.4 271.4,208.1 274.1,199.8 277.2,194.3 280.4,190.1 287.0,184.0 295.4,179.1 300.6,177.2 305.7,176.2 314.4,176.1 323.1,178.4 331.9,183.4 338.1,173.8 344.5,166.9 352.7,160.6 360.8,156.3 370.6,153.3 377.1,152.5 382.0,152.5 391.6,154.3 396.4,156.3 401.1,159.1 410.5,150.7 418.4,145.6 427.7,141.8 436.9,140.0 443.0,140.0 447.4,140.7 456.2,143.8 463.3,149.0 468.7,156.0 470.1,157.0 475.9,155.5 481.6,155.9 487.0,158.7 490.9,163.4 502.0,161.1 502.0,161.1 93.7,245.4Z"/>
<path d="M91.8,238.8 92.3,240.4 92.8,242.2 93.4,244.3" fill="none"/>
<path d="M94.6,247.8 96.4,246.5 98.7,237.9 103.2,229.9 110.2,222.6 117.7,217.6 127.5,213.7 137.7,212.0 148.2,212.7 154.7,214.3 159.2,216.1 165.8,207.8 174.6,200.5 183.9,195.4 195.3,191.9 207.0,190.8 212.9,191.2 218.8,192.3 224.9,194.3 231.0,197.3 239.3,203.7 241.2,203.7 246.5,200.8 251.8,198.8 259.0,197.6 268.2,198.3 277.5,201.6 282.2,194.2 287.1,189.1 292.2,185.3 299.0,181.9 307.6,179.6 316.3,179.6 325.1,182.1 332.1,186.9 333.8,186.5 340.1,176.4 346.5,169.4 354.7,163.1 362.9,158.7 372.7,155.6 379.2,154.8 384.1,154.8 393.7,156.7 403.2,161.4 411.1,153.7 420.6,147.4 429.9,143.5 439.2,141.7 448.2,142.1 455.6,144.2 461.4,147.3 465.6,150.7 468.4,153.8 469.8,154.3 474.2,152.5 478.6,151.6 482.9,151.5 487.1,152.3 491.2,154.2 493.9,156.4 496.4,159.5 498.9,163.9 504.5,162.8 504.5,162.8 94.6,247.8Z"/>
<path d="M502.0,161.1 502.8,161.7 503.6,162.2 504.5,162.8" fill="none"/>
<path d="M95.4,250.0 98.1,243.2 101.4,238.8 111.8,227.9 119.3,222.6 129.1,218.5 139.3,216.9 147.7,217.3 154.3,218.8 158.7,220.6 160.7,220.4 167.3,211.6 174.3,205.3 181.7,200.7 191.1,196.7 202.7,194.4 214.5,194.6 224.5,197.1 230.6,199.8 234.8,202.4 236.7,202.6 243.7,198.2 250.9,195.2 258.1,193.6 265.5,193.3 274.8,195.0 284.2,199.5 290.8,192.4 297.5,187.8 304.4,184.9 313.1,183.6 320.1,184.3 325.3,186.0 330.6,189.2 334.2,192.6 340.5,182.1 346.9,174.2 355.0,167.2 363.3,162.3 373.1,158.8 379.7,157.7 384.6,157.6 394.3,159.1 399.1,160.9 403.8,163.6 405.4,163.8 411.7,157.3 419.6,151.4 427.5,147.3 436.8,144.5 446.0,143.8 453.5,144.9 460.9,147.7 468.0,153.1 469.4,153.3 475.4,150.5 481.3,149.1 487.0,149.1 491.2,149.9 495.3,151.8 498.0,153.7 501.9,158.2 504.2,163.2 505.5,164.7 506.9,164.4 506.9,164.4 95.4,250.2Z"/>
<path d="M94.6,247.8 94.8,248.6 95.1,249.4 95.4,250.0" fill="none"/>
<path d="M94.2,244.0 97.5,239.3 102.8,234.3 108.6,230.7 116.6,227.7 124.9,226.5 134.9,223.4 143.2,222.7 151.8,223.9 160.8,227.5 169.0,216.2 177.8,208.2 183.3,204.8 188.9,202.1 200.4,198.8 208.3,198.1 216.2,198.6 222.2,199.9 230.4,203.2 232.4,203.5 239.3,198.2 248.3,193.7 257.4,191.1 266.7,190.4 274.1,191.3 279.7,192.8 285.4,195.4 291.1,199.4 297.9,194.3 303.0,191.5 308.1,189.7 315.1,188.8 322.1,189.8 327.4,191.9 331.0,194.4 336.3,200.3 340.9,189.2 347.3,179.9 355.5,172.0 363.7,166.6 368.6,164.3 375.2,162.2 381.8,161.1 386.7,161.0 396.4,162.6 401.2,164.5 405.9,167.4 407.5,166.9 413.9,160.2 421.9,154.1 429.7,150.0 439.1,147.1 446.8,146.4 454.3,147.2 460.3,149.1 467.4,153.4 468.9,153.6 475.0,150.3 480.9,148.3 488.2,147.5 493.9,148.3 499.4,150.5 503.4,153.6 507.2,158.5 509.5,164.1 509.3,166.1 96.3,252.6Z"/>
<path d="M506.9,164.4 507.7,165.0 508.5,165.5 509.5,164.1" fill="none"/>
<path d="M94.0,241.8 99.2,236.1 106.8,230.8 114.8,227.5 123.1,225.8 131.8,225.8 138.4,227.0 147.5,230.3 154.1,231.8 163.2,236.2 167.5,226.5 172.5,219.8 179.5,213.3 188.8,207.7 198.3,204.3 208.1,202.8 218.0,203.4 228.1,205.8 235.1,199.7 242.2,195.1 251.3,191.2 260.5,189.1 271.7,188.7 281.1,190.5 290.5,194.8 298.2,200.9 300.0,201.4 305.1,198.2 310.3,196.3 315.5,195.5 320.8,195.9 324.3,196.9 327.8,198.8 331.4,201.9 333.3,204.3 335.0,205.0 338.3,204.3 340.0,203.5 341.5,198.8 344.6,192.0 351.0,182.8 359.2,175.0 367.4,169.8 377.3,166.1 383.9,165.1 388.8,164.9 393.7,165.5 398.6,166.8 403.4,168.9 408.1,172.1 416.1,163.7 424.1,157.4 432.0,153.2 441.4,150.2 449.1,149.5 455.1,150.0 461.1,151.7 466.9,154.8 468.4,154.8 474.5,151.0 482.0,148.0 489.4,146.8 495.1,147.1 500.7,148.8 504.8,151.1 508.7,154.7 512.4,160.5 511.8,167.7 97.2,255.1Z"/>
<path d="M94.2,244.0 94.1,243.0 94.0,242.3 94.0,241.8" fill="none"/>
<path d="M94.2,241.3 101.4,234.5 109.3,230.0 119.5,226.7 130.2,225.8 139.0,226.9 148.2,230.2 155.4,235.0 163.3,243.8 165.3,243.4 167.1,242.3 169.8,234.3 174.5,226.5 181.5,219.3 188.8,214.3 196.4,210.9 206.1,208.6 214.0,208.3 224.0,209.7 230.9,202.5 239.7,196.0 248.9,191.5 260.0,188.3 267.4,187.5 273.1,187.6 284.4,189.7 292.0,192.8 297.7,196.5 303.5,201.9 307.4,207.2 312.6,205.4 317.8,204.7 323.1,205.8 328.4,208.8 343.6,205.6 345.2,203.5 349.9,193.3 353.1,188.6 358.0,183.1 363.0,178.8 367.9,175.5 372.9,173.0 379.5,170.8 387.7,169.6 395.9,170.3 403.9,173.2 410.3,177.7 415.1,171.3 421.5,164.9 427.9,160.3 435.8,156.2 443.6,153.9 451.3,153.2 458.9,154.1 466.3,157.0 467.8,157.1 472.4,153.6 478.6,150.1 484.6,147.9 490.5,146.8 497.8,147.0 504.8,149.2 510.1,152.7 515.2,159.0 514.3,169.4 98.1,257.6Z"/>
<path d="M512.4,160.5 513.4,159.8 514.3,159.3 515.2,159.0" fill="none"/>
<path d="M94.6,242.0 102.0,235.4 109.9,231.0 120.2,227.7 131.0,226.7 142.1,228.3 151.4,232.0 158.7,237.3 166.5,245.8 172.5,244.5 178.6,232.6 183.7,226.6 189.1,222.2 196.5,218.2 204.2,215.7 212.1,214.8 220.0,215.1 228.5,204.9 237.4,197.7 248.3,191.7 259.5,188.2 268.9,187.0 276.4,187.2 285.9,188.9 293.5,191.8 301.2,196.5 306.9,201.9 310.8,207.0 314.8,214.2 348.9,206.9 350.6,205.9 355.3,195.9 361.8,187.8 370.1,181.2 375.0,178.6 380.0,176.7 389.9,175.0 398.0,175.9 404.5,178.4 410.8,183.3 412.4,183.9 418.9,174.7 425.3,168.3 433.3,162.9 442.8,158.9 449.0,157.7 455.1,157.5 459.7,158.2 465.6,160.2 467.1,160.3 473.4,155.1 481.1,150.7 488.6,148.1 496.0,147.2 503.2,148.1 508.8,150.2 514.1,154.1 517.9,158.7 516.8,171.1 99.1,260.2Z"/>
<path d="M94.2,241.3 94.3,241.4 94.4,241.6 94.6,242.0" fill="none"/>
<path d="M95.3,243.6 102.8,237.2 110.8,232.7 119.0,229.9 127.6,228.6 138.6,229.0 147.7,231.4 154.8,234.9 162.3,241.0 164.3,240.8 170.0,237.9 175.9,236.1 182.0,235.4 186.1,235.5 193.3,229.6 200.7,225.4 206.5,223.6 216.3,222.3 219.5,216.8 224.5,210.1 229.7,204.7 235.1,200.2 240.5,196.5 247.9,192.7 253.5,190.4 261.0,188.4 270.4,187.1 279.9,187.4 289.4,189.4 297.1,192.5 304.7,197.3 310.5,202.8 314.4,208.0 318.4,215.9 342.5,210.7 348.9,201.9 355.6,196.0 362.2,192.3 368.9,190.4 378.9,184.5 385.5,182.3 393.7,181.6 401.8,183.4 408.2,187.4 412.9,193.2 414.5,192.4 419.4,183.3 424.3,177.2 429.1,172.6 435.5,168.1 443.4,164.4 451.2,162.7 458.9,162.8 466.4,164.5 471.1,159.8 477.4,155.1 483.6,151.7 489.7,149.5 498.6,148.3 507.2,149.5 514.1,152.8 518.1,156.2 520.6,159.4 519.3,172.8 100.0,262.7Z"/>
<path d="M517.9,158.7 518.8,158.9 519.7,159.1 520.6,159.4" fill="none"/>
<path d="M96.3,246.2 101.9,241.1 109.7,236.2 118.0,232.9 126.5,231.2 135.3,231.0 142.0,231.9 148.9,233.8 156.0,237.3 158.1,237.4 163.8,233.9 169.7,231.3 175.7,229.7 181.8,228.8 188.0,228.9 194.3,229.8 207.2,234.7 211.1,233.8 212.9,232.3 215.8,225.1 220.7,216.9 225.8,210.4 231.1,205.1 238.3,199.4 245.6,195.0 253.1,191.7 262.5,189.0 272.0,187.7 281.5,188.0 291.1,189.8 298.8,192.8 306.4,197.4 312.2,202.4 318.1,210.1 322.1,217.6 337.6,214.3 344.0,203.6 350.7,196.2 359.1,190.4 364.1,188.1 369.2,186.6 376.0,185.8 381.0,186.1 386.0,187.3 391.0,189.7 399.1,190.6 402.4,191.9 405.6,193.9 410.3,198.6 419.9,196.3 423.2,189.5 426.4,184.7 431.3,179.4 437.7,174.3 444.1,171.0 451.9,168.8 458.0,168.5 465.6,170.0 472.0,162.9 478.3,157.7 484.6,154.1 492.2,151.1 501.2,149.8 509.8,151.0 516.7,154.3 520.7,157.7 523.2,160.9 521.9,174.6 100.9,265.3Z"/>
<path d="M95.3,243.6 95.6,244.4 95.9,245.2 96.3,246.2" fill="none"/>
<path d="M97.4,249.7 101.1,246.0 106.9,241.7 113.0,238.4 119.2,236.1 127.7,234.4 134.3,234.1 143.3,235.1 150.2,237.2 152.3,236.6 158.0,232.6 165.8,228.6 171.8,226.5 177.9,225.1 188.2,224.4 196.7,225.4 205.3,228.1 214.0,232.4 217.1,225.6 222.0,217.6 227.2,211.3 234.3,204.6 241.6,199.3 249.0,195.2 256.6,192.2 264.1,190.1 273.7,188.8 283.2,189.0 292.8,190.8 300.5,193.6 308.2,198.1 314.0,202.9 319.8,210.0 323.8,217.5 325.7,219.4 334.4,217.5 336.0,215.3 339.2,208.3 342.5,203.2 347.5,197.3 352.5,192.8 361.0,187.4 369.5,184.3 376.3,183.1 381.4,183.0 388.1,184.1 393.1,185.9 398.1,188.9 401.3,191.7 404.6,195.7 407.8,201.6 426.9,197.5 431.8,190.3 436.6,184.8 441.4,181.0 446.2,178.4 450.9,176.7 455.6,175.8 460.2,175.9 464.7,176.9 471.2,168.4 477.6,162.3 485.5,157.0 493.2,153.7 499.2,152.3 503.7,151.9 512.4,153.1 516.5,154.8 520.6,157.5 525.7,163.3 524.4,176.3 101.9,267.9Z"/>
<path d="M523.2,160.9 524.0,161.6 524.9,162.4 525.7,163.3" fill="none"/>
<path d="M98.9,254.2 106.3,247.2 116.4,241.6 122.7,239.5 131.3,238.1 138.0,238.1 144.8,239.2 152.3,233.1 160.1,228.4 168.1,224.9 176.3,222.7 186.7,221.5 197.2,222.2 208.0,225.0 216.8,229.5 221.7,221.5 226.9,214.8 232.2,209.3 237.6,204.7 243.2,200.9 250.6,196.8 258.2,193.8 265.8,191.7 275.4,190.4 285.0,190.5 294.6,192.3 304.3,196.0 312.0,200.8 317.8,206.1 321.7,211.0 327.6,221.5 332.9,220.4 339.3,206.8 344.3,200.0 349.3,194.7 354.4,190.6 359.6,187.3 364.7,184.8 371.6,182.5 378.4,181.3 385.2,181.3 392.0,182.4 397.0,184.3 402.0,187.1 406.9,191.4 410.1,195.6 413.2,201.9 414.8,202.5 424.4,200.4 429.2,196.7 434.0,194.6 440.3,194.1 446.7,189.1 453.0,186.1 459.2,185.3 463.7,186.2 470.4,175.5 476.9,168.0 486.4,160.6 495.7,156.3 501.8,154.9 506.2,154.5 510.6,154.8 514.9,155.8 519.1,157.6 523.1,160.4 528.2,166.5 527.0,178.1 102.8,270.5Z"/>
<path d="M97.4,249.7 97.9,251.0 98.4,252.5 98.9,254.2" fill="none"/>
<path d="M100.6,259.9 106.0,253.9 113.9,248.4 120.1,245.6 126.4,243.8 139.5,242.4 146.9,235.2 154.6,229.6 162.5,225.4 172.7,221.8 185.2,219.7 197.9,220.0 208.7,222.4 219.7,227.4 221.6,226.2 226.7,219.0 232.0,213.1 241.1,205.4 246.7,201.8 254.2,198.0 267.6,193.7 277.2,192.4 286.8,192.5 296.5,194.2 306.1,197.9 313.9,202.8 319.7,208.0 325.6,216.0 329.6,223.7 331.3,223.3 333.0,220.5 336.1,212.6 339.4,206.8 342.8,202.1 347.8,196.4 353.0,191.8 359.9,187.2 366.8,183.8 373.7,181.5 380.6,180.3 387.4,180.2 394.2,181.2 399.2,182.8 404.2,185.3 409.2,189.0 414.0,194.5 417.1,200.1 423.7,193.8 428.6,190.3 433.4,187.9 439.8,186.2 446.1,186.2 450.8,187.5 455.3,190.1 459.7,195.2 465.8,193.8 471.0,182.3 474.4,177.3 479.3,171.6 484.1,167.3 490.4,163.0 495.1,160.7 501.2,158.7 510.2,157.8 514.5,158.3 518.8,159.7 522.9,161.9 525.6,164.0 528.1,166.9 530.6,170.8 529.6,179.8 103.8,273.2Z"/>
<path d="M528.2,166.5 529.0,167.8 529.8,169.2 530.6,170.8" fill="none"/>
<path d="M102.8,267.5 108.0,260.6 113.7,255.8 121.9,251.6 126.1,250.2 132.6,249.0 139.8,240.4 145.4,235.1 153.1,229.5 163.2,224.2 169.3,221.9 177.6,219.7 186.0,218.5 194.5,218.3 207.5,220.2 216.2,223.1 222.8,226.4 224.8,226.4 233.6,215.8 244.6,206.7 255.9,200.5 269.4,196.2 277.1,195.0 284.8,194.7 292.6,195.4 300.3,197.3 308.1,200.4 313.9,203.9 319.7,208.7 325.6,215.6 334.7,217.0 337.9,210.4 341.3,205.3 346.4,199.0 351.5,194.0 356.7,190.0 363.7,185.8 370.6,182.7 377.6,180.8 384.5,179.8 389.6,179.7 396.4,180.6 401.5,182.1 406.5,184.4 411.5,187.7 417.9,194.6 419.6,193.9 427.8,187.2 434.4,183.8 442.5,181.6 450.4,181.5 456.6,183.1 461.1,185.7 465.5,189.9 468.3,194.5 469.8,195.4 476.7,182.4 483.2,174.5 488.1,170.2 492.8,167.0 502.1,162.9 508.2,161.7 512.6,161.6 517.0,162.3 521.2,163.7 525.3,166.2 527.9,168.6 530.5,171.9 532.8,176.8 532.3,181.6 104.8,275.9Z"/>
<path d="M100.6,259.9 101.2,262.2 102.0,264.7 102.8,267.5" fill="none"/>
<path d="M105.8,278.6 108.8,272.1 112.2,267.3 117.9,262.3 126.1,258.1 134.7,245.4 144.0,235.9 151.8,230.1 159.8,225.5 168.0,222.1 176.4,219.7 184.8,218.2 191.2,217.7 204.1,218.5 210.7,219.9 217.2,222.0 228.3,227.4 233.5,220.9 239.0,215.6 244.5,211.1 252.0,206.3 259.7,202.7 267.4,200.1 275.1,198.4 282.9,197.6 294.5,198.4 304.2,200.9 314.0,205.7 321.8,212.0 323.6,212.8 330.9,211.8 338.1,212.4 341.5,207.1 346.6,200.6 351.8,195.5 358.8,190.0 365.8,185.9 372.8,182.9 379.8,181.0 386.7,180.0 395.3,180.2 403.8,182.1 412.2,186.1 418.7,191.7 420.4,191.3 428.7,184.8 436.9,180.7 446.7,178.3 454.6,178.4 460.9,180.0 466.9,183.3 471.3,187.5 475.5,194.5 482.2,183.9 485.5,179.9 490.4,175.3 495.2,171.8 499.9,169.2 504.5,167.5 510.6,166.3 517.9,166.7 524.9,169.5 530.2,174.5 533.7,181.9 535.0,183.4 535.0,183.4 105.8,278.6Z"/>
<path d="M532.8,176.8 533.5,179.3 534.1,182.5 535.0,183.4" fill="none"/>
<path d="M106.8,281.4 115.5,279.4 117.4,277.7 120.9,273.1 123.5,264.3 128.2,254.6 135.2,244.9 142.7,237.3 150.5,231.3 158.6,226.6 166.9,222.9 177.3,219.7 185.9,218.3 192.3,217.8 205.3,218.4 218.4,221.6 225.0,224.4 231.7,228.2 244.5,216.2 255.8,208.9 261.5,206.2 269.3,203.5 277.0,201.8 282.9,201.1 292.6,201.3 302.4,203.2 312.1,207.1 319.9,212.4 329.0,209.8 341.8,209.7 350.4,199.3 355.6,194.6 362.7,189.6 367.9,186.6 375.0,183.7 380.2,182.1 387.2,180.8 395.9,180.6 404.4,182.1 412.9,185.5 419.5,190.2 421.1,190.0 431.2,182.5 439.5,178.6 449.3,176.2 458.9,176.4 466.7,178.6 472.7,182.3 477.1,186.7 481.2,193.8 482.6,195.4 486.1,189.3 489.4,184.9 497.5,177.7 502.2,174.9 506.9,173.0 511.4,172.0 515.9,171.8 521.7,172.9 527.2,176.0 531.0,180.5 533.3,185.9 537.6,185.3 537.6,185.3 106.8,281.4Z"/>
<path d="M105.8,278.6 106.1,279.5 106.4,280.4 106.8,281.4" fill="none"/>
<path d="M107.8,284.1 118.7,281.7 120.9,271.2 125.3,260.2 132.2,249.4 141.5,239.4 149.4,233.1 159.6,227.1 167.9,223.5 178.4,220.3 193.4,218.3 202.1,218.4 208.7,219.2 221.9,222.7 228.5,225.6 235.3,229.5 237.3,229.4 244.6,222.0 253.9,215.1 263.5,210.2 273.2,206.9 284.9,205.1 296.6,205.5 306.4,207.9 316.2,212.6 318.1,212.9 323.6,210.6 330.9,208.7 338.2,208.3 343.7,209.0 345.5,208.2 352.5,200.4 361.3,193.1 370.1,187.8 379.0,184.3 391.2,181.9 401.7,182.2 410.2,184.3 415.2,186.5 420.2,189.7 421.9,189.6 428.7,184.2 437.1,179.3 445.4,176.2 453.5,174.8 460.0,174.8 464.7,175.5 471.0,177.6 475.5,180.1 479.9,183.9 482.8,187.3 485.5,191.9 488.1,198.8 489.7,197.4 494.8,189.9 499.7,185.1 506.0,181.1 512.1,179.1 518.1,178.7 523.8,180.4 527.9,183.4 531.6,189.1 540.3,187.1 540.3,187.1 107.8,284.1Z"/>
<path d="M537.6,185.3 538.5,185.9 539.4,186.5 540.3,187.1" fill="none"/>
<path d="M108.8,286.9 117.6,285.0 121.3,270.9 125.9,260.5 132.9,250.1 140.5,242.0 148.3,235.6 158.5,229.2 169.0,224.6 179.6,221.4 188.2,219.9 196.9,219.3 205.6,219.6 212.2,220.5 221.0,222.7 227.7,225.2 241.1,232.7 248.4,225.4 255.9,219.8 265.5,214.8 275.2,211.4 286.9,209.6 296.8,209.8 306.6,212.0 314.4,215.4 323.6,211.0 331.0,208.9 340.2,208.1 347.6,209.0 356.4,200.4 363.5,194.8 372.4,189.5 381.2,185.9 391.8,183.7 402.3,183.6 410.9,185.3 415.9,187.3 421.0,190.1 422.6,190.1 431.2,183.4 439.6,178.6 448.0,175.6 456.2,174.1 462.7,174.0 469.0,175.0 475.2,177.2 479.8,179.9 484.2,183.6 487.1,187.0 489.8,191.4 492.4,198.0 493.7,200.1 496.8,199.4 501.9,192.4 508.4,186.2 513.1,183.4 519.2,181.3 525.2,181.0 530.8,182.7 534.8,185.9 537.3,189.9 543.1,188.9 543.1,188.9 108.8,286.9Z"/>
<path d="M107.8,284.1 108.1,285.1 108.5,286.0 108.8,286.9" fill="none"/>
<path d="M109.8,289.8 116.5,288.3 118.4,286.5 120.6,275.9 125.1,264.7 132.0,253.8 141.5,243.5 149.4,237.1 159.6,230.8 170.2,226.1 180.8,222.9 189.5,221.4 198.2,220.7 207.0,221.0 215.8,222.3 224.7,224.8 231.4,227.5 238.2,231.1 245.0,236.1 254.3,228.0 259.9,224.1 267.6,220.0 275.4,217.1 285.2,215.0 295.0,214.7 302.9,215.8 312.7,218.7 321.9,213.1 331.1,209.8 336.7,208.8 342.2,208.5 351.5,209.8 358.6,202.6 365.7,197.0 372.8,192.6 381.7,188.7 392.4,186.0 402.9,185.5 411.5,186.9 416.7,188.6 421.7,191.1 423.4,191.3 432.0,184.3 440.5,179.3 448.9,176.0 458.8,174.0 465.3,173.9 471.7,174.8 478.0,176.8 482.6,179.3 487.0,182.7 491.3,187.6 496.7,197.6 501.8,190.4 508.4,184.2 516.3,179.5 524.0,177.3 531.4,177.4 537.0,179.4 539.7,181.3 542.3,184.0 545.8,190.8 545.8,190.8 109.8,289.8Z"/>
<path d="M543.1,188.9 544.0,189.6 544.9,190.2 545.8,190.8" fill="none"/>
<path d="M110.9,292.6 117.5,291.1 119.1,287.6 121.4,277.5 126.0,266.6 133.0,255.8 140.6,247.3 148.5,240.6 158.8,233.9 169.3,228.9 180.0,225.4 190.9,223.3 199.7,222.7 208.5,222.9 217.4,224.2 226.3,226.6 233.0,229.3 242.0,234.3 248.9,239.7 250.9,239.8 256.5,234.5 264.0,229.1 269.8,226.0 277.6,223.0 285.4,221.2 293.3,220.5 301.2,221.1 309.1,223.1 311.0,222.7 316.4,218.5 322.0,215.2 333.1,211.0 338.7,210.0 344.3,209.7 355.4,210.8 362.6,203.8 371.5,197.3 380.5,192.7 391.2,189.3 400.0,188.1 407.0,188.3 413.9,189.5 424.1,193.1 431.1,187.1 439.6,181.5 448.1,177.6 456.5,175.2 463.1,174.3 469.6,174.4 476.0,175.5 482.3,177.7 486.8,180.3 491.3,183.9 495.6,189.0 498.3,193.7 499.9,192.6 506.6,185.3 513.1,180.4 519.5,177.1 527.2,174.9 534.6,174.8 540.4,176.4 545.8,179.9 549.6,184.6 548.6,192.7 110.9,292.6Z"/>
<path d="M109.8,289.8 110.2,290.7 110.5,291.7 110.9,292.6" fill="none"/>
<path d="M111.9,295.5 118.6,294.0 120.1,290.1 122.5,280.0 127.1,269.2 134.2,258.3 141.8,249.9 149.8,243.1 160.1,236.4 170.7,231.4 181.5,227.8 192.4,225.7 201.2,225.0 212.3,225.5 221.2,227.0 230.1,229.7 239.2,233.9 246.0,238.2 255.2,246.0 260.7,240.5 266.4,236.3 272.1,232.9 277.9,230.4 285.7,228.3 293.6,227.4 301.5,227.8 307.4,229.1 316.6,221.6 322.2,218.0 329.6,214.5 337.1,212.4 342.7,211.6 348.3,211.5 357.6,213.2 359.5,212.4 368.4,204.3 375.6,199.4 382.8,195.8 391.7,192.8 400.6,191.3 409.4,191.4 416.4,192.7 424.9,195.6 431.9,189.3 440.5,183.3 449.1,179.1 459.2,176.1 465.8,175.2 472.3,175.2 478.8,176.3 483.5,177.8 488.1,180.0 492.6,183.1 497.0,187.5 499.8,191.3 501.2,192.0 508.0,184.9 514.6,179.8 521.0,176.4 528.8,173.9 536.3,173.2 542.2,174.2 547.8,176.7 553.0,181.4 551.4,194.6 111.9,295.5Z"/>
<path d="M549.6,184.6 550.7,183.3 551.9,182.3 553.0,181.4" fill="none"/>
<path d="M113.0,298.5 119.7,296.9 121.4,293.9 123.7,283.5 128.4,272.4 135.5,261.5 143.1,252.9 151.1,246.1 161.5,239.3 172.1,234.3 183.0,230.7 193.9,228.6 205.0,227.8 216.1,228.6 227.4,231.0 236.4,234.4 245.5,239.5 252.4,245.0 259.5,252.9 261.4,251.7 265.1,248.0 270.7,243.5 276.4,240.2 282.3,237.8 288.1,236.2 294.0,235.5 300.0,235.6 305.9,236.6 313.1,228.7 318.7,224.1 324.2,220.5 331.7,217.0 339.2,214.8 346.8,213.9 354.3,214.3 361.7,216.2 370.7,208.1 379.7,202.2 388.7,198.0 397.7,195.6 404.8,194.8 411.8,195.0 418.8,196.4 425.6,198.7 432.6,192.0 441.3,185.7 450.0,181.2 460.2,177.8 466.8,176.7 473.4,176.5 479.9,177.2 484.6,178.5 490.9,181.2 495.4,184.3 499.7,188.5 502.6,192.2 509.3,185.3 516.0,180.1 522.4,176.5 530.3,173.6 538.0,172.6 545.3,173.4 551.0,175.6 556.3,179.8 554.3,196.5 113.0,298.5Z"/>
<path d="M111.9,295.5 112.3,296.5 112.6,297.5 113.0,298.5" fill="none"/>
<path d="M114.1,301.5 123.1,299.2 125.2,288.0 129.8,276.5 136.9,265.2 144.6,256.5 152.6,249.6 163.0,242.7 173.7,237.6 184.6,234.0 197.8,231.6 208.9,231.1 220.1,232.2 231.4,235.1 240.5,238.9 249.7,244.7 256.6,251.1 263.9,260.8 266.1,262.3 269.7,257.8 273.4,254.3 277.1,251.5 282.9,248.4 288.7,246.4 294.6,245.4 300.5,245.5 304.5,246.2 309.8,238.1 317.1,230.3 324.5,224.7 332.0,220.8 339.5,218.3 349.0,216.9 356.5,217.3 365.8,219.5 373.0,212.7 382.1,206.5 391.1,202.3 400.1,199.7 407.2,198.9 414.3,199.2 419.5,200.2 426.4,202.5 433.4,195.4 442.2,188.7 450.8,183.8 461.1,180.0 467.8,178.7 474.5,178.2 481.0,178.7 485.8,179.7 490.5,181.4 495.1,183.9 499.6,187.2 503.9,191.9 505.5,192.0 512.3,185.1 518.9,180.1 525.4,176.5 533.4,173.7 541.0,172.6 548.5,173.3 554.1,175.4 559.5,179.2 557.1,198.5 114.1,301.5Z"/>
<path d="M556.3,179.8 557.4,179.5 558.5,179.3 559.5,179.2" fill="none"/>
<path d="M115.2,304.5 124.2,302.3 125.9,299.2 128.4,289.0 133.1,278.1 140.3,267.2 148.1,258.8 156.2,252.1 164.6,246.7 173.2,242.4 184.0,238.4 195.1,235.9 206.2,234.9 217.5,235.4 228.8,237.6 240.1,241.8 249.3,247.3 256.3,253.2 263.4,261.5 267.2,257.8 272.9,253.7 278.7,250.8 284.6,249.0 290.6,248.3 294.6,248.4 298.6,249.0 306.7,251.6 312.0,242.5 319.2,234.3 328.6,227.4 338.0,223.1 345.6,221.2 353.1,220.6 360.7,221.5 368.1,224.1 370.0,223.2 379.0,215.1 386.3,210.4 393.5,207.1 402.5,204.5 409.6,203.7 414.9,203.9 420.2,204.7 427.1,207.1 435.9,197.8 444.8,191.0 453.5,186.1 463.8,182.3 470.5,180.9 477.2,180.4 483.7,180.9 488.5,182.0 494.8,184.4 499.4,187.1 503.8,190.9 506.7,194.2 513.5,187.1 520.3,181.8 528.4,177.1 536.4,174.3 544.1,173.2 551.5,173.9 557.2,175.8 562.7,179.4 560.0,200.4 115.2,304.5Z"/>
<path d="M114.1,301.5 114.4,302.4 114.8,303.4 115.2,304.5" fill="none"/>
<path d="M116.3,307.5 127.7,304.8 131.7,291.1 136.6,280.5 144.0,269.9 151.8,261.7 160.0,255.2 168.5,249.9 177.1,245.8 185.8,242.7 196.9,240.2 205.8,239.2 217.1,239.4 226.2,240.8 235.3,243.5 244.4,247.6 251.4,252.2 258.4,258.6 260.6,259.6 266.3,254.4 272.1,250.4 278.0,247.5 286.0,245.1 292.0,244.2 298.0,244.2 306.2,245.9 312.3,248.6 314.2,248.2 319.6,241.2 327.1,234.6 334.6,229.9 342.2,226.9 349.8,225.3 357.3,225.2 364.9,226.6 372.4,230.0 377.8,224.2 385.0,218.5 392.3,214.3 399.5,211.4 406.7,209.7 413.8,209.3 420.9,210.1 427.8,212.4 436.7,202.3 445.6,195.0 456.1,188.8 466.4,185.0 478.2,183.1 484.8,183.4 489.6,184.2 494.4,185.7 499.1,188.0 503.6,191.1 508.0,195.5 509.5,195.3 516.4,188.2 524.8,181.8 531.4,178.3 539.4,175.5 547.1,174.4 554.6,175.0 560.3,176.9 565.8,180.3 562.9,202.4 116.3,307.5Z"/>
<path d="M562.7,179.4 563.7,179.6 564.8,179.9 565.8,180.3" fill="none"/>
<path d="M117.4,310.6 131.1,307.3 132.8,304.0 135.4,294.3 140.3,283.8 147.7,273.3 155.7,265.2 163.9,258.8 172.4,253.7 181.1,249.8 189.9,246.9 198.8,245.0 207.8,244.0 216.8,244.1 225.9,245.3 232.7,247.0 239.6,249.5 248.9,254.5 255.9,260.1 258.0,259.9 263.7,254.4 271.5,248.9 277.5,245.9 285.5,243.1 295.6,241.6 303.7,242.0 311.9,244.0 320.1,248.4 322.0,247.5 327.5,241.8 333.1,237.6 338.8,234.4 346.4,231.7 354.0,230.4 361.6,230.8 369.1,232.9 374.7,236.3 376.6,235.9 382.0,229.9 389.3,224.1 394.7,220.9 401.9,217.8 409.1,216.1 416.3,215.8 423.3,216.8 428.5,218.7 437.5,207.7 448.2,198.4 458.7,192.1 470.8,187.7 482.6,186.3 489.1,186.8 493.9,187.9 498.7,189.7 503.3,192.3 507.7,196.0 510.6,199.1 517.6,191.4 524.4,185.8 532.7,180.8 540.8,177.6 548.6,176.2 556.1,176.4 563.4,178.5 568.8,181.9 565.8,204.4 117.4,310.6Z"/>
<path d="M116.3,307.5 116.6,308.5 117.0,309.5 117.4,310.6" fill="none"/>
<path d="M118.5,313.7 134.6,309.8 136.8,308.8 139.3,298.6 142.5,291.1 147.9,282.3 155.6,273.2 163.8,266.1 172.3,260.5 180.9,256.2 191.9,252.3 200.8,250.3 209.8,249.4 218.9,249.5 225.7,250.4 234.9,252.7 241.8,255.4 248.8,259.4 253.5,262.8 255.5,261.7 259.3,257.6 265.1,252.5 273.0,247.4 283.1,243.0 293.2,240.6 303.4,240.2 311.6,241.5 319.8,244.5 328.0,250.1 335.5,244.3 341.2,240.9 346.9,238.6 354.5,236.9 360.2,236.8 365.9,237.8 371.5,240.1 377.1,244.0 380.8,243.8 386.2,237.2 391.7,232.3 397.1,228.7 404.4,225.5 411.6,223.7 416.9,223.4 423.9,224.4 429.1,226.5 438.2,214.0 447.2,205.1 457.8,197.7 470.0,192.3 475.1,191.0 481.9,190.0 488.5,190.1 493.4,190.8 499.8,192.9 504.4,195.3 508.9,198.8 511.8,201.9 513.4,201.6 520.5,193.8 529.0,186.9 535.6,183.0 543.7,179.8 551.6,178.4 559.1,178.6 566.3,180.7 571.8,184.2 568.8,206.4 118.5,313.7Z"/>
<path d="M568.8,181.9 569.8,182.6 570.8,183.4 571.8,184.2" fill="none"/>
<path d="M119.6,316.8 131.2,314.0 134.5,306.9 138.1,301.5 142.1,297.3 148.3,292.7 155.9,282.5 165.9,272.7 172.2,268.2 178.6,264.4 185.2,261.4 194.0,258.3 202.9,256.3 209.7,255.6 218.8,255.5 225.6,256.2 232.5,257.7 239.5,260.1 246.4,263.6 251.2,266.8 260.7,256.5 270.6,249.0 280.7,243.9 292.9,240.4 305.3,239.6 311.4,240.3 317.6,241.8 323.8,244.3 327.9,246.6 332.0,249.8 336.1,254.0 341.7,250.1 347.4,247.1 355.0,245.0 360.7,244.7 370.1,240.0 377.5,237.7 383.1,237.0 388.6,237.3 397.7,240.0 401.4,237.5 406.8,234.9 412.2,233.4 417.5,233.0 424.5,234.2 429.7,236.9 437.1,224.0 446.1,213.1 451.5,208.3 458.6,203.1 463.9,200.2 470.9,197.2 477.8,195.2 484.5,194.3 491.2,194.3 496.1,195.2 502.4,197.3 507.0,200.0 511.5,203.8 514.4,207.2 521.5,198.6 528.4,192.3 536.9,186.7 545.0,183.1 554.5,181.1 562.1,181.3 569.3,183.5 574.7,187.1 571.8,208.4 119.6,316.8Z"/>
<path d="M118.5,313.7 118.9,314.7 119.3,315.7 119.6,316.8" fill="none"/>
<path d="M120.8,320.0 125.5,318.8 127.3,316.1 128.8,311.8 132.2,305.3 136.0,300.4 142.2,294.8 150.8,289.5 162.1,285.6 172.4,277.0 180.9,271.5 187.4,268.3 196.2,265.1 207.4,262.8 216.5,262.2 227.9,263.3 239.4,266.1 245.9,265.2 252.5,265.1 254.5,264.2 260.3,258.1 266.3,253.2 276.3,246.9 288.6,242.1 296.9,240.3 303.0,239.7 309.2,239.8 315.4,240.6 321.6,242.3 327.8,244.9 334.0,248.8 338.1,252.5 344.3,260.8 347.9,255.0 351.6,250.3 361.0,242.0 366.6,238.5 372.3,235.9 377.9,234.0 385.4,232.8 392.8,233.1 400.2,234.9 407.4,239.0 411.0,242.3 414.5,246.7 423.3,247.0 432.1,244.9 441.3,227.9 446.8,220.8 452.3,215.2 463.0,207.1 473.5,202.0 478.7,200.4 485.5,199.2 492.2,199.1 497.1,199.8 501.9,201.2 506.6,203.4 511.1,206.8 515.4,211.7 517.0,211.6 524.3,202.3 531.2,195.8 539.7,190.1 547.9,186.4 557.4,184.4 564.9,184.7 572.2,187.0 577.6,190.8 574.8,210.5 120.8,320.0Z"/>
<path d="M574.7,187.1 575.7,188.3 576.6,189.5 577.6,190.8" fill="none"/>
<path d="M122.0,323.2 123.9,320.7 126.8,312.0 132.3,303.3 140.5,295.4 144.8,292.4 151.4,288.8 158.2,286.3 165.1,284.6 177.0,283.8 187.6,277.2 194.2,274.4 200.8,272.3 209.8,270.5 223.4,269.9 231.9,266.1 242.7,263.2 249.3,262.4 258.1,262.5 266.0,255.4 274.0,249.9 282.2,245.8 290.5,242.9 298.8,241.1 307.1,240.4 315.4,240.9 321.6,242.2 327.8,244.3 334.0,247.5 340.2,252.2 344.3,256.6 355.6,244.7 361.3,240.2 367.0,236.6 372.7,233.9 380.3,231.4 387.8,230.1 393.4,230.0 402.7,231.5 408.2,233.7 411.8,235.8 417.2,240.4 422.4,248.3 424.1,249.8 438.2,246.4 445.6,232.9 449.3,227.7 454.8,221.6 460.2,216.8 465.5,212.9 470.8,209.9 477.8,207.0 488.1,204.7 498.0,205.2 512.3,209.4 516.9,212.0 519.8,214.6 521.5,214.1 528.7,205.0 535.7,198.7 544.1,193.2 552.3,189.8 560.2,188.3 567.8,188.6 575.0,191.2 580.3,195.3 577.9,212.5 122.0,323.2Z"/>
<path d="M120.8,320.0 121.2,321.0 121.6,322.1 122.0,323.2" fill="none"/>
<path d="M122.2,322.5 123.6,317.8 127.0,310.8 132.8,303.1 141.1,295.6 152.2,289.2 161.4,286.0 170.8,284.4 180.4,284.2 190.2,285.9 192.4,285.4 199.0,282.6 207.9,280.1 218.2,272.0 224.5,268.3 231.0,265.4 237.5,263.2 246.2,261.4 255.0,260.8 261.7,261.1 271.8,253.8 278.0,250.2 286.2,246.4 294.5,243.7 302.9,242.2 309.1,241.8 315.4,242.0 321.7,242.9 327.9,244.7 334.1,247.3 340.3,251.2 344.4,254.8 346.4,254.1 352.0,247.6 357.7,242.4 369.2,234.9 375.0,232.2 382.7,229.8 390.3,228.5 397.8,228.3 403.4,229.0 409.0,230.5 414.4,233.0 418.0,235.3 421.6,238.4 425.1,242.4 430.2,251.4 446.0,247.4 449.8,239.5 453.5,233.9 459.0,227.4 464.5,222.4 469.8,218.6 475.1,215.6 494.2,208.2 504.3,206.2 512.5,206.8 518.7,209.1 523.2,212.1 526.1,215.0 527.7,215.1 534.9,206.8 541.8,201.1 548.5,197.1 556.7,194.0 564.5,192.8 572.0,193.7 577.7,196.2 582.9,200.8 580.9,214.6 123.2,326.4Z"/>
<path d="M580.3,195.3 581.2,197.1 582.1,199.0 582.9,200.8" fill="none"/>
<path d="M122.4,321.6 127.6,311.3 133.5,304.0 142.0,296.7 153.2,290.5 164.8,286.8 176.7,285.3 188.9,286.3 198.9,289.4 206.9,280.8 213.0,275.5 219.4,271.1 228.0,266.6 236.7,263.3 247.7,260.8 256.5,260.1 265.4,260.6 267.6,260.2 273.7,255.8 282.0,251.1 288.2,248.4 296.6,245.7 309.2,243.8 321.7,244.4 332.2,247.2 338.4,250.2 344.6,254.5 346.6,254.4 352.3,247.9 358.1,242.7 363.9,238.4 371.6,233.9 377.4,231.4 385.1,228.9 392.8,227.6 400.4,227.3 406.0,227.9 411.6,229.2 417.1,231.4 422.5,234.6 429.6,241.4 436.3,253.0 453.9,248.7 457.7,242.0 461.4,236.9 474.2,222.4 479.7,217.5 485.0,213.7 495.6,208.4 500.7,206.8 507.5,205.8 512.4,205.8 517.3,206.6 525.1,209.8 529.5,213.3 532.3,216.7 533.8,217.5 539.2,211.5 546.1,205.7 552.8,201.8 564.3,196.9 570.6,195.3 576.8,195.0 582.6,196.1 586.8,198.0 584.0,216.7 124.3,329.7Z"/>
<path d="M122.2,322.5 122.2,321.9 122.3,321.6 122.4,321.6" fill="none"/>
<path d="M123.1,322.7 128.5,313.0 134.5,305.8 140.9,300.3 149.8,294.7 161.3,290.0 173.2,287.6 185.3,287.5 192.8,288.7 197.8,290.1 199.9,288.9 210.1,278.6 218.5,272.4 229.3,266.6 240.3,262.7 249.2,260.8 255.9,260.2 264.9,260.2 271.6,261.1 281.9,254.7 290.3,250.9 300.8,247.7 311.3,246.2 321.9,246.5 330.2,248.2 336.5,250.5 344.8,255.2 346.8,255.6 352.6,249.1 358.4,243.8 370.1,235.7 375.9,232.8 383.7,229.8 391.4,227.9 399.1,227.1 406.7,227.3 412.4,228.2 419.8,230.7 425.2,233.6 430.6,237.8 434.1,241.6 437.5,246.7 440.8,254.5 442.5,254.6 458.4,250.7 460.2,248.0 466.0,236.0 473.5,226.1 479.0,220.6 484.5,216.2 489.9,212.8 496.9,209.3 503.8,207.1 510.6,206.0 517.2,206.1 522.1,207.1 526.8,208.8 531.3,211.6 535.7,215.9 538.4,219.9 543.9,212.8 551.0,205.8 557.9,200.7 564.6,197.2 571.1,195.0 578.9,193.9 584.8,194.4 590.5,196.5 587.2,218.8 125.6,333.0Z"/>
<path d="M586.8,198.0 588.1,197.4 589.3,196.9 590.5,196.5" fill="none"/>
<path d="M124.2,325.3 129.6,315.7 135.7,308.6 142.2,303.1 151.1,297.5 162.7,292.8 174.6,290.3 184.4,290.0 196.8,292.0 199.1,291.4 207.2,282.7 217.8,274.4 228.7,268.3 241.9,263.5 250.9,261.5 259.9,260.7 268.9,261.0 275.6,262.0 277.8,261.5 286.1,256.7 294.5,253.2 303.0,250.7 313.6,249.2 322.0,249.3 330.4,250.7 338.8,253.5 347.1,257.7 352.9,251.0 358.8,245.5 364.7,241.0 372.5,236.1 378.4,233.2 386.2,230.2 394.0,228.3 401.7,227.4 409.4,227.6 415.0,228.4 420.6,230.0 426.1,232.4 431.6,235.8 435.1,238.9 440.3,245.1 443.7,251.3 445.4,251.3 449.1,248.7 454.5,246.0 459.8,244.5 463.3,244.2 465.1,242.6 472.8,230.9 480.2,222.9 491.1,214.6 501.7,209.5 506.9,208.0 513.7,206.9 523.6,207.4 528.4,208.8 533.0,211.1 537.5,214.5 540.3,217.8 541.8,218.6 547.4,211.9 554.5,205.2 561.4,200.4 568.1,197.0 574.6,194.7 582.4,193.6 588.4,194.1 594.2,195.9 590.3,221.0 126.8,336.4Z"/>
<path d="M123.1,322.7 123.4,323.4 123.8,324.3 124.2,325.3" fill="none"/>
<path d="M125.5,329.2 131.0,319.4 137.1,312.2 143.6,306.6 152.6,301.0 161.9,297.0 173.8,294.0 186.0,293.4 198.4,294.8 208.6,283.8 219.3,275.7 230.3,269.6 243.6,264.7 254.9,262.5 263.9,261.9 273.0,262.4 282.0,263.9 290.4,259.3 298.9,256.0 309.5,253.5 318.0,252.7 326.4,253.1 332.8,254.3 341.2,257.2 347.5,260.7 353.3,253.7 359.2,248.0 365.1,243.2 373.0,238.1 378.9,235.0 386.8,231.8 394.6,229.6 402.4,228.5 410.1,228.3 415.8,228.9 421.5,230.1 427.0,232.1 436.1,237.6 444.9,246.5 450.4,242.8 457.7,239.5 463.1,238.1 471.9,237.2 479.4,227.9 486.8,221.1 495.9,215.0 506.5,210.4 513.5,208.7 518.5,208.2 523.5,208.3 528.4,209.1 536.2,212.3 540.7,215.6 543.5,218.7 545.2,218.2 550.7,211.8 557.9,205.4 564.8,200.7 571.5,197.3 578.0,195.1 585.9,194.0 592.0,194.3 597.8,196.0 593.5,223.1 128.0,339.8Z"/>
<path d="M594.2,195.9 595.4,195.8 596.6,195.9 597.8,196.0" fill="none"/>
<path d="M127.2,334.5 130.7,327.2 136.6,319.0 143.0,312.8 151.9,306.5 163.5,301.2 175.5,298.2 187.8,297.6 197.8,299.0 208.0,287.5 218.7,278.9 229.7,272.5 243.1,267.2 254.4,264.6 265.8,263.6 277.2,264.4 286.3,266.4 303.3,259.6 311.8,257.6 320.3,256.9 328.8,257.3 335.2,258.5 341.5,260.7 347.8,263.9 357.6,253.0 369.5,243.3 381.4,236.4 393.3,232.1 401.2,230.4 408.9,229.7 416.6,230.0 422.3,230.9 429.8,233.3 435.3,236.1 440.7,240.0 444.2,243.4 446.1,243.1 455.3,237.6 462.7,234.9 471.6,233.3 478.6,233.7 488.0,224.6 495.3,219.2 502.5,215.2 511.3,211.8 521.6,210.1 526.6,210.2 531.5,211.0 539.4,214.2 543.9,217.5 546.7,220.5 554.1,212.6 561.2,206.3 568.2,201.7 574.9,198.3 581.5,196.1 589.4,194.9 595.5,195.2 601.3,196.8 596.7,225.3 129.3,343.3Z"/>
<path d="M125.5,329.2 126.0,330.8 126.6,332.6 127.2,334.5" fill="none"/>
<path d="M129.4,341.8 132.6,333.4 138.4,324.6 144.8,318.1 153.7,311.6 163.0,307.0 175.0,303.5 187.2,302.4 197.2,303.5 207.5,291.9 218.2,282.8 231.5,274.9 245.0,269.6 258.6,266.6 270.1,265.9 281.5,267.0 292.9,269.5 305.6,264.4 314.2,262.4 320.6,261.7 331.3,262.2 341.9,264.9 350.1,264.4 352.1,263.7 358.1,256.9 364.0,251.3 374.0,243.9 386.0,237.5 397.9,233.5 405.8,232.0 411.6,231.6 423.2,232.4 428.8,233.8 434.4,235.9 445.3,242.7 454.7,236.7 465.8,232.2 474.8,230.6 480.2,230.6 485.4,231.3 487.2,230.7 492.8,225.8 500.1,220.7 507.3,216.9 514.4,214.4 524.7,212.6 529.7,212.7 534.6,213.5 542.5,216.7 549.9,222.5 555.5,215.9 562.8,209.2 569.8,204.2 576.6,200.6 583.3,198.1 591.3,196.5 598.9,196.7 604.8,198.2 600.0,227.5 130.5,346.8Z"/>
<path d="M601.3,196.8 602.5,197.2 603.6,197.7 604.8,198.2" fill="none"/>
<path d="M131.8,350.3 136.7,337.7 140.6,331.5 146.8,324.5 153.4,319.1 162.6,313.9 174.6,309.8 186.8,308.3 196.8,309.0 209.2,294.8 220.0,285.8 233.3,277.8 246.9,272.4 260.6,269.4 272.1,268.7 285.9,270.2 297.4,273.7 308.0,269.8 316.6,267.9 325.2,267.1 335.8,267.7 346.2,265.2 354.5,264.8 356.5,263.8 366.5,253.8 376.6,246.4 388.6,240.0 400.6,235.9 412.4,234.0 424.0,234.4 429.7,235.6 435.4,237.5 444.5,242.5 446.4,242.0 452.1,238.1 459.7,234.0 470.8,230.1 478.0,228.9 483.4,228.7 488.7,229.3 493.8,230.6 501.2,225.0 510.3,220.0 517.4,217.4 526.1,215.8 532.8,215.8 539.3,217.1 545.6,219.9 551.5,224.8 553.1,224.6 558.8,218.0 566.0,211.3 573.1,206.3 579.9,202.6 586.6,200.1 594.6,198.6 602.3,198.7 608.2,200.2 603.3,229.7 131.8,350.3Z"/>
<path d="M129.4,341.8 130.2,344.8 131.2,348.4 131.8,350.3" fill="none"/>
<path d="M133.1,353.9 138.0,352.6 141.3,343.8 145.0,337.3 151.3,330.1 157.9,324.8 167.2,319.8 176.8,316.6 186.6,315.2 196.6,315.7 198.8,313.9 202.7,308.0 208.9,300.6 219.7,290.9 233.0,282.4 239.8,279.1 248.9,275.8 262.7,272.8 276.5,272.1 283.5,272.7 290.4,274.0 301.9,278.1 304.1,278.5 310.5,276.1 317.0,274.5 327.7,273.5 336.1,269.6 344.4,267.1 352.8,266.0 359.0,266.0 361.0,264.7 371.1,255.2 383.2,246.9 395.3,241.3 401.3,239.3 409.2,237.6 419.1,236.8 428.7,237.6 436.3,239.6 445.6,243.8 451.3,239.4 459.0,234.8 464.6,232.2 472.1,229.6 479.4,228.2 486.7,227.7 493.7,228.4 500.6,230.4 502.3,230.1 509.7,225.5 516.9,222.3 523.9,220.2 530.8,219.3 537.5,219.7 543.9,221.4 550.1,224.9 554.4,229.1 563.8,218.9 569.3,214.0 576.4,209.0 583.2,205.2 589.9,202.7 598.0,201.1 605.7,201.3 611.5,202.8 606.6,232.0 133.1,353.9Z"/>
<path d="M608.2,200.2 609.3,201.0 610.4,201.9 611.5,202.8" fill="none"/>
<path d="M134.4,357.5 144.3,354.9 146.5,352.8 150.0,345.1 154.0,339.6 160.5,333.6 167.3,329.2 174.4,326.1 181.7,324.2 189.1,323.4 196.7,323.9 198.8,321.9 202.7,315.4 208.8,307.3 219.5,296.8 226.1,291.8 235.1,286.4 241.9,283.1 251.0,279.7 257.9,277.9 267.2,276.3 281.1,276.1 288.0,276.9 295.0,278.6 301.9,281.1 308.8,284.7 321.7,281.1 332.1,274.4 342.6,270.1 353.1,268.0 363.5,268.1 373.7,258.8 383.8,251.6 393.9,246.3 406.0,242.2 415.9,240.4 425.7,240.3 435.3,241.9 444.7,245.5 446.6,244.8 454.4,239.0 462.1,234.5 469.6,231.2 477.1,228.9 486.3,227.5 493.5,227.5 502.2,229.2 509.0,232.1 514.4,229.0 521.6,225.9 528.6,224.2 533.8,223.6 540.5,224.1 546.9,225.9 553.0,229.7 557.3,234.1 563.1,226.5 570.6,218.9 577.8,213.4 584.8,209.2 593.2,205.9 601.2,204.2 608.9,204.4 614.8,206.0 609.9,234.3 134.4,357.5Z"/>
<path d="M133.1,353.9 133.6,355.1 134.0,356.3 134.4,357.5" fill="none"/>
<path d="M135.8,361.1 155.6,356.0 159.5,349.9 163.6,344.9 168.0,341.2 174.9,337.3 179.7,335.5 187.0,334.0 192.0,333.8 197.1,334.3 199.1,331.7 202.8,324.1 206.7,317.8 212.9,310.0 219.4,303.5 225.9,298.1 234.9,292.2 244.0,287.6 253.2,284.2 260.1,282.3 269.4,280.8 278.7,280.3 285.7,280.8 292.7,281.9 299.6,283.9 306.6,286.8 313.5,291.1 315.8,291.4 326.1,282.2 336.6,276.0 342.9,273.4 351.4,271.2 359.8,270.3 368.1,270.7 376.3,263.1 386.5,255.7 396.6,250.3 408.7,246.1 418.7,244.3 428.5,244.2 436.2,245.4 445.7,248.2 455.5,240.5 467.1,233.9 478.4,229.7 489.5,227.8 496.7,227.8 503.8,228.8 510.6,231.1 515.6,233.9 517.3,234.1 526.3,230.4 531.6,229.2 536.7,228.7 545.0,229.6 555.0,229.4 559.7,230.5 564.3,232.8 571.8,224.8 577.3,219.9 584.5,215.0 591.3,211.4 598.0,209.1 606.0,207.9 612.1,208.2 618.0,209.9 613.3,236.6 135.8,361.1Z"/>
<path d="M614.8,206.0 615.9,207.2 616.9,208.5 618.0,209.9" fill="none"/>
<path d="M137.1,364.8 174.2,355.1 181.0,350.9 185.7,349.3 190.7,348.7 195.8,349.4 198.2,348.8 203.2,334.7 207.0,327.2 213.0,318.3 219.4,311.2 228.1,303.5 237.1,297.4 246.3,292.7 255.5,289.2 262.4,287.3 271.8,285.8 281.1,285.3 288.1,285.8 297.4,287.7 304.4,290.1 311.4,293.7 316.0,296.9 326.4,287.1 336.9,280.3 345.4,276.7 353.9,274.4 362.3,273.5 370.7,274.1 372.8,273.7 378.9,267.9 387.1,261.7 395.3,256.8 403.4,253.1 415.5,249.6 425.5,248.5 435.2,249.1 444.8,251.7 446.7,250.7 456.6,242.7 464.4,237.7 472.1,233.9 481.6,230.6 489.1,229.0 494.6,228.5 505.3,229.2 510.6,230.5 515.7,232.5 523.8,237.9 531.0,235.5 541.8,230.1 552.2,227.6 557.2,227.5 562.0,228.1 566.7,229.6 571.2,232.2 572.9,231.8 580.4,224.7 587.5,219.5 594.5,215.8 602.8,213.1 612.3,212.3 616.8,213.0 621.1,214.5 616.7,238.9 137.1,364.8Z"/>
<path d="M135.8,361.1 136.2,362.4 136.7,363.6 137.1,364.8" fill="none"/>
<path d="M138.5,368.6 202.3,351.7 204.3,348.9 207.6,338.8 211.4,331.4 217.5,322.5 223.9,315.4 232.7,307.9 241.7,302.0 250.9,297.5 260.2,294.2 269.5,292.1 276.5,291.2 283.5,291.0 290.5,291.6 302.2,294.3 309.3,297.4 316.3,301.9 318.5,301.7 324.7,295.0 331.0,289.7 337.3,285.5 343.7,282.3 352.2,279.3 360.7,277.7 369.1,277.6 375.4,278.5 377.5,277.4 387.8,268.5 396.0,263.2 404.1,259.1 414.3,255.6 422.3,254.0 430.2,253.6 436.1,254.0 445.7,255.8 453.7,248.5 463.6,241.4 473.3,236.1 484.8,232.0 497.8,229.8 508.6,230.4 513.9,231.6 519.0,233.6 527.2,238.8 529.0,238.4 534.6,234.6 541.9,230.8 552.4,227.4 560.9,226.7 567.4,227.5 573.7,229.9 579.6,233.9 585.1,228.8 590.5,224.9 595.8,221.8 602.5,219.1 609.0,217.6 613.7,217.3 619.8,218.3 624.0,220.0 620.2,241.2 138.5,368.6Z"/>
<path d="M621.1,214.5 622.1,216.2 623.1,218.1 624.0,220.0" fill="none"/>
<path d="M139.9,372.4 177.3,362.4 186.2,355.1 193.3,351.9 200.7,350.6 208.4,351.5 210.5,349.3 214.0,340.3 218.0,333.4 222.1,327.7 228.5,320.6 235.1,314.8 244.1,308.7 253.3,304.0 262.6,300.6 272.0,298.4 279.0,297.6 286.0,297.5 293.1,298.1 300.1,299.7 307.2,302.2 314.2,306.2 318.9,310.0 325.1,302.3 331.4,296.3 337.7,291.7 346.3,287.1 354.8,284.0 363.3,282.4 371.8,282.3 380.2,283.9 388.4,276.3 396.7,270.3 406.9,264.9 417.1,261.3 425.1,259.7 431.1,259.3 438.9,259.8 444.7,261.1 456.7,250.3 468.6,242.1 480.3,236.4 491.8,232.9 502.9,231.6 511.9,232.2 520.7,234.5 530.7,239.6 538.2,234.5 545.5,230.8 552.6,228.3 559.6,226.9 568.0,226.8 574.4,228.2 580.5,231.1 586.2,236.2 598.6,228.0 603.8,225.6 608.7,224.1 613.5,223.4 618.2,223.5 622.6,224.6 626.8,226.7 623.7,243.6 139.9,372.4Z"/>
<path d="M138.5,368.6 138.9,369.9 139.4,371.1 139.9,372.4" fill="none"/>
<path d="M141.3,376.3 164.0,370.2 166.2,368.0 170.1,361.3 174.4,356.5 181.2,351.1 188.4,347.4 195.7,345.0 203.2,344.0 210.9,344.3 218.8,346.4 226.9,334.0 235.5,324.7 246.7,316.2 258.2,310.3 265.2,307.8 274.5,305.6 283.9,304.7 291.0,305.0 298.1,306.1 305.2,308.3 312.2,311.8 319.4,317.4 321.6,317.5 327.7,308.8 334.0,302.4 340.3,297.4 348.9,292.6 357.4,289.5 366.0,287.9 374.5,287.9 382.9,289.8 385.0,289.6 391.2,283.5 399.4,277.2 405.6,273.5 413.8,269.7 421.9,267.2 429.9,266.0 435.9,265.8 445.6,266.7 455.8,256.2 465.8,248.2 477.7,241.3 489.3,236.7 502.5,234.1 513.5,234.2 524.0,236.8 532.3,241.3 541.7,235.1 550.9,230.7 559.8,228.1 568.3,227.2 574.9,227.8 581.3,229.8 587.2,233.4 591.4,237.6 602.2,230.0 612.5,225.3 617.4,224.2 622.1,223.9 626.6,224.4 630.9,225.9 627.2,246.0 141.3,376.3Z"/>
<path d="M626.8,226.7 628.0,227.5 629.5,226.6 630.9,225.9" fill="none"/>
<path d="M142.7,380.2 158.0,376.0 161.5,367.5 163.5,364.2 170.0,356.5 179.2,349.3 188.9,344.5 198.8,341.7 209.0,340.8 216.8,341.5 222.0,342.8 227.4,345.0 229.9,344.8 234.0,338.9 240.5,332.0 247.1,326.5 254.0,322.1 260.9,318.6 267.9,316.0 288.8,310.5 300.4,309.6 309.7,310.7 316.7,313.1 321.4,315.6 326.1,319.3 328.4,319.8 334.6,311.8 340.9,305.9 347.3,301.5 355.9,297.4 364.4,295.0 373.0,294.2 381.4,295.4 387.7,297.8 396.0,290.0 402.2,285.1 408.4,281.1 414.5,278.0 422.7,275.1 430.7,273.5 438.6,273.3 444.5,274.2 456.8,261.0 466.9,252.5 478.8,245.1 492.5,239.5 503.9,237.0 514.9,236.7 523.8,238.3 529.0,240.2 534.0,242.9 535.8,242.7 545.3,236.3 554.5,231.9 563.4,229.3 572.0,228.4 578.6,228.9 583.4,230.2 589.5,233.2 593.8,236.7 595.4,236.8 601.0,232.4 606.4,228.9 616.6,224.4 626.3,222.9 630.9,223.2 635.3,224.4 630.7,248.4 142.7,380.2Z"/>
<path d="M141.3,376.3 141.7,377.5 142.2,378.8 142.7,380.2" fill="none"/>
<path d="M144.1,384.1 151.8,382.0 154.0,379.3 157.5,370.4 163.7,361.2 172.8,352.7 182.3,346.6 189.7,343.4 197.3,341.1 204.9,339.8 212.6,339.4 220.5,340.2 228.4,342.3 233.8,344.8 239.3,348.5 254.3,331.6 261.0,325.4 272.3,317.9 283.8,313.0 290.8,311.2 297.8,310.3 309.5,310.7 318.9,313.1 323.6,315.3 328.3,318.4 330.6,318.9 337.0,314.2 343.5,310.8 360.7,304.3 367.2,302.6 373.6,302.0 380.0,302.6 384.2,303.8 390.5,307.1 392.5,307.6 400.8,298.0 411.1,290.1 421.4,285.0 429.5,279.9 435.6,276.9 443.7,274.1 451.6,272.8 461.8,262.6 472.0,254.5 484.0,247.4 495.7,242.7 507.1,240.3 518.2,240.0 527.1,241.6 537.3,246.0 545.0,240.4 552.5,236.1 559.8,233.0 567.0,231.1 575.6,230.1 583.9,230.9 591.7,233.8 597.6,237.9 608.6,229.7 619.1,224.8 625.7,223.1 630.5,222.6 635.1,222.9 639.5,224.0 634.3,250.8 144.1,384.1Z"/>
<path d="M635.3,224.4 636.7,224.2 638.1,224.0 639.5,224.0" fill="none"/>
<path d="M145.6,388.1 148.2,387.4 150.5,385.5 152.0,379.9 155.7,371.7 159.9,365.5 166.6,358.2 171.2,354.2 178.4,349.3 185.8,345.5 193.3,342.6 201.0,340.6 208.7,339.5 221.8,339.8 232.4,342.4 237.8,344.8 243.2,348.3 245.5,346.8 251.8,337.6 260.6,328.6 269.7,322.0 281.3,316.2 288.3,313.9 295.3,312.3 307.1,311.6 318.8,313.4 328.2,317.4 330.5,316.6 339.2,310.7 345.7,307.5 352.3,305.2 361.1,303.5 371.9,303.6 380.6,305.9 384.8,308.0 389.0,311.0 393.2,315.6 395.3,318.9 397.4,319.2 399.4,316.6 405.6,304.4 409.8,298.5 416.1,291.4 424.4,284.3 432.6,279.1 440.8,275.3 448.8,272.9 458.7,271.8 460.8,270.8 469.0,263.2 477.1,257.1 485.1,252.3 495.0,247.8 508.5,244.3 519.6,243.6 530.4,245.4 538.9,249.1 554.1,239.4 561.6,236.0 568.8,233.7 577.5,232.4 585.9,232.8 593.8,235.3 599.8,239.0 612.6,230.2 623.1,225.3 629.7,223.6 634.6,223.1 639.2,223.3 643.7,224.3 638.0,253.3 145.6,388.1Z"/>
<path d="M144.1,384.1 144.6,385.4 145.1,386.8 145.6,388.1" fill="none"/>
<path d="M147.0,392.2 148.9,388.2 150.5,382.9 154.3,374.8 158.5,368.5 162.9,363.3 169.9,356.9 177.1,351.7 184.6,347.7 194.7,343.7 202.4,341.7 210.1,340.5 223.3,340.6 233.9,342.8 239.3,344.9 244.7,347.8 247.3,348.5 253.7,339.6 262.6,330.8 271.8,324.3 283.4,318.5 295.2,315.0 307.0,313.7 316.5,314.4 328.3,317.7 337.1,311.3 345.9,306.6 354.8,303.5 363.6,301.7 374.6,301.5 381.1,302.6 385.4,303.9 393.9,308.5 400.2,314.7 402.2,313.5 408.5,302.9 414.8,295.2 423.2,287.4 431.6,281.5 439.8,277.1 450.0,273.5 458.1,272.0 467.9,271.5 476.1,264.5 484.2,259.0 492.2,254.7 500.1,251.4 511.7,248.5 522.9,247.9 531.8,249.3 542.2,253.0 550.0,246.9 557.6,242.3 565.1,238.9 572.3,236.6 581.1,235.2 587.8,235.4 594.3,236.8 601.9,240.7 603.5,240.9 614.7,232.4 620.1,229.4 627.0,226.5 633.7,224.8 638.6,224.2 643.2,224.4 647.7,225.3 641.6,255.7 147.0,392.2Z"/>
<path d="M643.7,224.3 645.0,224.6 646.4,224.9 647.7,225.3" fill="none"/>
<path d="M147.9,393.3 149.4,387.7 153.1,379.2 157.3,372.7 164.0,364.8 171.1,358.6 178.5,353.6 186.0,349.6 196.1,345.6 203.9,343.6 211.7,342.4 224.9,342.3 232.9,343.6 238.3,345.1 243.7,347.3 249.2,350.4 258.0,340.1 264.7,333.8 274.0,327.3 283.3,322.5 292.8,319.1 304.7,316.9 316.5,317.0 326.0,319.0 328.3,318.2 337.2,311.8 346.1,306.9 355.1,303.4 364.0,301.2 375.0,300.4 386.0,301.8 394.6,305.0 405.1,312.4 411.4,302.8 417.8,295.5 426.3,288.0 436.7,281.0 445.0,277.0 455.3,273.8 465.3,272.5 475.1,273.1 481.2,268.2 489.4,262.8 495.4,259.6 503.3,256.3 514.9,253.3 526.1,252.7 535.0,254.2 543.6,257.9 553.4,250.4 559.2,246.8 566.7,243.0 574.0,240.4 582.8,238.7 591.3,238.8 599.4,240.8 605.4,244.2 616.8,235.3 622.2,232.0 629.2,228.8 634.3,227.2 640.9,226.1 647.2,226.1 651.7,226.9 645.3,258.2 148.5,396.3Z"/>
<path d="M147.0,392.2 147.5,393.5 147.7,393.6 147.9,393.3" fill="none"/>
<path d="M148.7,394.3 150.3,389.3 154.2,381.4 158.5,375.0 165.4,367.4 172.6,361.2 179.9,356.3 187.5,352.3 197.8,348.3 205.6,346.2 213.5,345.0 226.7,344.8 237.5,346.6 245.6,349.5 251.1,352.4 253.6,352.1 260.1,344.0 267.0,337.7 273.9,332.5 283.3,327.3 292.8,323.5 304.7,320.8 316.7,320.4 326.2,321.8 332.9,316.3 341.9,310.4 348.6,307.0 357.6,303.5 366.6,301.4 373.3,300.5 380.0,300.4 386.6,301.1 397.4,304.3 403.8,307.9 408.0,311.3 410.1,309.5 418.7,298.9 429.3,289.3 439.9,282.4 452.4,277.0 460.5,274.8 468.6,273.9 476.5,274.2 482.3,275.4 492.5,268.5 500.5,264.2 508.4,261.1 518.0,258.8 525.5,258.1 532.8,258.7 539.9,260.5 545.0,262.9 546.8,262.8 552.8,257.5 560.6,252.0 568.2,247.8 575.6,244.9 584.6,242.8 593.1,242.5 601.3,244.2 607.4,247.4 609.1,246.7 614.9,241.7 622.4,236.5 633.1,231.2 638.2,229.5 644.8,228.3 651.1,228.3 655.6,229.2 649.1,260.8 150.1,400.4Z"/>
<path d="M651.7,226.9 653.0,227.6 654.3,228.4 655.6,229.2" fill="none"/>
<path d="M149.9,397.3 151.7,392.4 155.6,384.7 160.0,378.4 166.9,370.8 174.1,364.7 181.6,359.7 189.2,355.7 199.6,351.7 207.4,349.6 215.3,348.3 223.3,347.9 231.4,348.3 239.5,349.8 244.9,351.5 255.9,357.1 260.2,351.3 267.0,344.3 273.9,338.7 283.4,332.9 292.9,328.7 304.8,325.5 314.4,324.6 324.0,325.3 326.3,324.4 333.1,318.6 342.1,312.5 351.2,307.8 360.3,304.4 369.3,302.2 376.1,301.3 382.8,301.1 389.4,301.7 400.3,304.6 406.8,307.8 411.0,310.8 413.1,311.2 421.7,300.8 432.4,291.4 443.0,284.5 455.6,279.0 465.8,276.5 473.9,275.9 481.8,276.4 489.4,278.5 505.6,269.6 513.4,266.6 521.1,264.9 530.5,264.3 539.5,265.8 546.8,265.0 552.2,265.2 562.0,258.0 569.7,253.4 577.2,250.1 586.2,247.6 593.2,247.0 598.2,247.3 604.6,249.0 610.8,251.8 622.4,241.9 628.0,238.3 635.1,234.7 642.0,232.4 648.6,231.2 654.9,231.2 659.4,232.0 652.8,263.3 151.6,404.6Z"/>
<path d="M148.7,394.3 149.0,395.1 149.5,396.1 149.9,397.3" fill="none"/>
<path d="M151.5,401.9 153.3,397.0 157.3,389.1 161.7,382.8 168.6,375.1 175.9,368.9 183.4,363.9 191.1,359.8 201.5,355.8 209.4,353.7 217.3,352.4 225.4,351.9 233.5,352.3 241.6,353.8 247.0,355.5 252.5,357.9 258.1,361.3 260.5,360.1 264.9,354.5 271.8,347.8 278.8,342.4 285.9,338.1 295.4,333.9 305.0,331.1 314.7,329.8 324.3,330.0 333.3,321.8 342.4,315.4 351.6,310.4 363.0,305.9 372.1,303.7 378.9,302.8 385.6,302.5 392.3,303.0 398.9,304.3 405.4,306.5 411.9,310.0 416.1,313.1 426.9,301.4 437.7,292.5 448.3,286.1 460.9,281.0 471.2,278.9 479.2,278.5 489.0,279.8 496.5,282.6 498.5,282.2 504.6,278.6 512.6,274.9 520.4,272.6 528.0,271.4 535.8,267.8 541.5,265.9 552.6,264.2 563.3,265.0 569.1,260.9 576.8,256.9 582.3,254.7 589.5,252.8 596.5,252.2 601.5,252.6 607.9,254.5 612.4,257.1 626.1,245.5 631.6,241.8 638.8,238.2 645.7,235.8 652.4,234.6 658.7,234.6 663.2,235.5 656.7,265.9 153.1,408.9Z"/>
<path d="M659.4,232.0 660.7,233.1 661.9,234.3 663.2,235.5" fill="none"/>
<path d="M153.6,408.2 155.3,402.9 159.2,394.7 163.6,388.2 170.5,380.3 177.9,374.0 185.4,368.9 193.1,364.7 203.5,360.6 211.5,358.5 219.5,357.2 227.6,356.7 235.7,357.2 243.9,358.7 249.3,360.5 263.1,367.5 267.5,361.4 272.1,356.5 279.0,350.4 286.1,345.6 293.3,341.8 302.9,338.2 312.5,336.2 322.2,335.8 324.5,334.3 333.6,325.7 342.8,319.0 354.3,312.5 365.8,308.1 375.0,305.8 381.8,304.8 388.6,304.5 395.3,305.0 406.3,307.5 412.8,310.3 419.1,314.5 421.3,314.5 430.0,304.8 440.8,295.8 451.5,289.4 464.2,284.3 476.5,281.8 486.5,281.9 494.3,283.5 499.9,285.8 503.6,288.0 505.5,288.0 515.5,283.0 523.7,276.6 529.8,272.7 535.7,269.6 543.5,266.6 551.1,264.8 558.4,264.2 565.5,264.9 572.3,267.1 580.0,263.0 585.5,260.7 596.3,258.4 604.7,258.8 609.5,260.2 614.0,262.8 615.7,262.6 621.8,256.2 627.7,251.2 635.2,246.0 642.4,242.3 649.4,239.9 656.0,238.7 662.3,238.7 666.8,239.7 660.5,268.5 154.7,413.2Z"/>
<path d="M151.5,401.9 152.2,403.8 152.9,405.9 153.6,408.2" fill="none"/>
<path d="M156.2,417.1 157.6,410.7 159.4,405.7 163.5,397.9 168.0,391.7 172.7,386.4 180.0,379.9 187.5,374.6 195.2,370.4 205.7,366.2 216.4,363.5 227.2,362.3 235.3,362.5 243.5,363.8 251.8,366.3 260.2,370.8 265.9,375.6 277.1,362.0 281.7,357.8 288.8,352.7 296.0,348.8 305.6,345.1 312.9,343.4 322.5,342.1 331.6,332.5 343.1,323.3 354.7,316.4 366.3,311.5 373.2,309.5 382.4,307.7 391.5,307.2 398.2,307.6 407.1,309.3 413.7,311.7 420.1,315.3 424.3,318.6 433.1,308.9 444.0,299.8 454.7,293.2 467.4,288.1 479.8,285.6 489.8,285.7 499.5,288.0 505.1,290.7 508.7,293.3 510.8,292.1 521.3,281.9 533.6,273.4 545.5,268.0 556.9,265.2 564.2,264.9 569.6,265.4 576.4,267.5 581.3,270.1 583.0,270.0 588.6,267.6 594.1,266.1 599.4,265.3 604.4,265.4 610.9,267.1 616.9,271.0 623.1,263.7 629.2,258.0 636.8,252.1 644.2,247.9 651.2,245.1 657.9,243.6 664.3,243.4 670.3,244.6 664.4,271.2 156.3,417.6Z"/>
<path d="M666.8,239.7 668.0,241.3 669.1,242.9 670.3,244.6" fill="none"/>
<path d="M157.9,422.1 160.6,421.3 162.2,415.1 166.0,406.1 170.4,399.2 175.0,393.6 184.8,384.8 197.6,376.9 205.4,373.5 213.4,371.1 221.5,369.4 229.6,368.7 237.8,369.0 243.3,369.8 248.8,371.2 259.9,375.4 264.7,372.4 272.1,369.0 279.5,366.8 284.6,366.0 294.0,359.6 303.6,354.8 313.3,351.8 320.6,350.9 332.0,338.1 343.5,328.3 355.2,321.0 369.2,314.8 376.2,312.7 385.4,311.0 394.5,310.4 401.3,310.7 408.0,311.9 414.6,313.9 421.0,317.0 427.4,321.6 429.5,321.2 436.2,313.8 444.9,306.1 453.6,300.2 464.3,294.8 476.9,290.9 489.2,289.9 495.1,290.4 500.9,291.9 506.6,294.3 510.2,296.7 512.3,295.5 523.0,284.9 531.3,278.6 541.4,272.7 553.2,268.2 564.5,266.2 573.5,266.7 582.1,269.3 586.9,272.2 591.5,275.9 600.5,273.7 607.3,273.9 613.6,276.2 617.9,279.9 619.7,278.9 626.3,270.4 632.4,264.2 638.3,259.3 645.7,254.5 652.9,251.3 661.3,249.1 667.7,249.0 673.6,250.4 668.3,273.9 157.9,422.1Z"/>
<path d="M156.2,417.1 156.8,419.1 157.4,420.6 157.9,422.1" fill="none"/>
<path d="M159.6,426.6 165.0,425.0 167.2,421.7 169.0,416.4 173.1,408.4 180.0,399.5 189.8,390.8 200.1,384.5 213.3,379.1 226.8,376.5 235.0,376.2 240.5,376.6 251.6,379.2 254.1,378.3 258.9,374.7 266.3,370.3 278.8,365.5 291.4,363.5 299.1,363.8 304.2,364.8 318.7,361.0 321.1,359.1 325.5,352.6 332.4,344.6 344.0,334.0 358.1,324.9 365.1,321.5 374.4,317.9 383.7,315.6 390.7,314.5 399.8,314.2 406.6,314.8 413.3,316.2 419.8,318.6 426.3,322.2 432.6,327.3 439.3,319.6 448.1,311.5 456.8,305.4 465.4,300.9 478.1,296.5 484.3,295.3 490.5,294.9 500.4,296.0 506.1,297.9 509.8,299.8 511.8,299.8 513.8,299.1 515.9,297.3 522.4,290.6 528.8,285.1 539.1,277.9 545.2,274.7 553.2,271.4 560.9,269.2 566.6,268.3 577.5,268.5 586.1,271.0 590.9,273.8 594.0,276.4 596.9,279.7 599.6,284.1 606.5,284.0 611.3,285.3 615.7,288.5 618.3,292.4 620.0,291.9 622.1,289.7 629.1,278.8 635.4,271.6 641.4,266.3 648.9,261.2 656.1,257.7 664.6,255.6 670.9,255.6 676.7,257.4 672.3,276.6 159.6,426.6Z"/>
<path d="M673.6,250.4 674.7,252.6 675.7,254.9 676.7,257.4" fill="none"/>
<path d="M161.2,431.2 172.2,427.9 174.6,425.3 176.4,420.3 180.7,412.7 187.7,404.3 197.7,396.3 202.8,393.2 210.7,389.5 221.4,386.2 229.5,385.0 237.8,384.9 246.1,386.0 253.3,379.2 263.1,372.4 273.1,367.6 285.8,363.9 296.0,362.8 303.7,363.2 311.4,364.8 319.1,368.1 321.6,368.3 326.0,360.9 330.5,354.8 337.5,347.0 344.5,340.6 351.5,335.3 361.0,329.4 368.0,326.0 377.4,322.4 386.8,320.0 393.7,318.9 402.9,318.6 409.7,319.2 418.6,321.4 425.1,324.2 431.6,328.5 435.7,332.4 437.9,331.7 444.6,324.0 453.4,316.1 460.0,311.5 468.7,306.7 479.3,302.8 489.7,300.9 497.7,301.0 507.5,302.8 513.7,299.8 521.8,297.2 534.6,286.1 547.0,278.3 558.9,273.3 570.4,270.8 577.8,270.6 583.1,271.3 590.0,273.4 594.9,276.2 599.4,280.2 602.3,283.9 604.9,288.9 608.1,299.2 609.9,298.9 627.4,293.7 634.5,282.6 640.8,275.5 648.7,268.9 656.1,264.4 663.1,261.7 669.7,260.5 675.9,261.1 680.2,262.9 676.4,279.3 161.2,431.2Z"/>
<path d="M159.6,426.6 160.1,428.1 160.7,429.6 161.2,431.2" fill="none"/>
<path d="M162.9,435.8 182.2,430.1 184.5,427.2 188.7,419.3 193.4,413.5 198.3,408.9 205.9,403.5 213.7,399.6 221.7,396.9 229.8,395.4 238.1,395.1 240.7,394.0 247.7,385.9 255.0,379.6 265.0,373.0 275.2,368.3 282.8,365.7 290.6,364.1 303.4,363.3 311.1,364.2 316.3,365.5 321.4,367.5 326.6,370.4 333.4,360.7 338.0,355.2 349.7,344.1 356.8,339.0 363.9,334.6 371.0,331.1 380.4,327.4 389.8,325.0 399.1,323.8 408.3,323.8 415.0,324.7 421.7,326.6 428.3,329.6 434.7,334.1 438.9,338.3 445.4,334.4 452.1,327.2 458.8,321.6 465.4,317.0 471.9,313.5 480.4,310.1 488.8,308.0 496.9,307.5 502.9,308.1 515.5,300.9 521.7,298.5 529.7,296.4 540.4,287.7 552.8,280.4 562.8,276.4 574.3,273.9 581.7,273.7 588.8,274.7 595.5,277.3 600.3,280.4 604.8,285.0 607.5,289.3 611.9,302.4 626.1,298.2 628.1,295.9 635.4,284.4 641.8,276.9 649.9,269.7 657.5,264.7 664.7,261.3 673.2,259.1 679.6,259.0 685.5,260.6 680.4,282.0 162.9,435.8Z"/>
<path d="M680.2,262.9 682.0,261.9 683.7,261.2 685.5,260.6" fill="none"/>
<path d="M164.6,440.5 194.9,431.4 197.5,429.9 199.7,426.3 204.4,420.8 211.9,415.0 217.1,412.1 222.4,410.1 233.2,407.9 242.4,394.7 249.6,387.1 259.5,379.2 269.7,373.3 277.3,369.9 287.7,366.7 295.4,365.3 303.2,364.7 311.0,365.1 318.7,366.5 326.5,369.4 331.6,372.3 334.0,370.9 338.6,364.6 345.6,356.7 355.0,348.4 366.9,340.5 381.1,334.0 390.6,331.2 397.6,329.9 404.5,329.3 411.4,329.5 418.2,330.6 424.9,332.6 431.4,335.8 435.7,338.8 449.0,331.4 457.7,328.3 466.3,326.5 472.8,322.4 481.4,318.4 489.9,316.0 498.1,315.2 500.2,314.4 506.7,309.2 515.2,304.0 525.6,299.6 537.6,296.5 548.2,288.7 558.5,283.1 568.5,279.4 578.1,277.5 585.5,277.3 590.9,278.0 597.7,280.1 602.6,282.9 607.1,287.1 609.9,290.9 612.4,296.2 614.3,304.3 615.8,305.4 626.5,302.2 628.4,300.9 633.6,291.5 640.4,282.3 648.8,273.7 658.6,266.3 667.8,261.4 676.5,258.8 684.6,258.3 690.6,259.6 684.5,284.8 164.6,440.5Z"/>
<path d="M162.9,435.8 163.5,437.4 164.0,438.9 164.6,440.5" fill="none"/>
<path d="M166.4,445.3 229.2,426.2 230.9,419.5 235.0,410.0 239.6,402.7 246.7,394.1 254.1,387.2 264.2,379.9 271.9,375.7 282.2,371.3 290.0,369.1 297.9,367.6 305.7,367.0 313.5,367.2 323.9,369.3 331.6,372.4 336.8,375.5 339.3,375.8 348.6,364.1 358.0,355.4 370.0,347.2 381.9,341.3 396.0,337.1 403.0,336.1 410.0,335.8 421.4,337.2 428.0,339.5 432.4,341.7 434.6,341.0 441.4,335.9 448.1,332.0 454.8,329.0 461.4,326.8 467.9,325.5 474.2,325.1 486.6,326.6 495.0,324.6 506.1,314.2 512.6,309.5 519.0,305.7 531.5,300.7 537.5,299.4 543.4,298.8 554.0,291.8 562.2,287.4 570.3,284.3 578.1,282.3 585.6,281.5 591.1,281.7 598.1,283.2 603.1,285.3 607.8,288.7 610.8,291.8 613.5,295.9 617.3,303.7 619.9,307.5 621.5,307.9 628.7,305.8 636.1,293.4 643.0,284.2 651.5,275.4 661.5,267.7 670.8,262.5 679.7,259.4 687.9,258.4 695.6,259.5 688.7,287.6 166.4,445.3Z"/>
<path d="M690.6,259.6 692.3,259.5 693.9,259.5 695.6,259.5" fill="none"/>
<path d="M168.1,450.1 228.7,431.7 230.8,427.5 234.8,416.7 237.0,412.6 241.6,405.6 248.8,397.1 256.3,390.3 266.5,383.1 274.2,378.9 284.7,374.5 295.1,371.6 303.0,370.4 310.9,370.0 318.7,370.5 326.5,372.1 331.7,373.9 336.9,376.4 344.6,381.9 351.6,372.7 361.1,363.3 373.0,354.7 385.0,348.6 396.8,344.8 408.5,343.2 417.7,343.5 424.5,344.9 429.0,346.4 431.2,346.1 440.4,338.4 449.5,332.7 458.4,328.6 469.4,325.4 478.0,324.5 484.3,324.8 490.5,326.1 496.5,328.5 512.0,315.0 518.5,310.6 524.9,307.2 537.4,302.7 543.4,301.5 551.3,301.1 557.6,296.8 565.9,292.3 574.0,289.1 581.8,287.1 593.0,286.4 598.3,287.2 603.5,288.8 608.4,291.5 612.9,295.6 619.7,296.7 624.5,298.9 628.7,303.3 631.0,308.7 633.2,306.1 638.5,296.7 645.5,287.2 654.1,278.0 664.2,269.9 673.7,264.3 682.7,260.9 692.7,259.3 700.4,260.3 692.9,290.5 168.1,450.1Z"/>
<path d="M166.4,445.3 166.9,446.9 167.5,448.5 168.1,450.1" fill="none"/>
<path d="M169.9,455.0 230.8,436.3 234.8,425.3 239.1,416.5 243.8,409.5 251.1,401.1 258.6,394.3 268.9,387.1 276.7,382.8 287.2,378.4 297.7,375.5 305.6,374.2 316.2,373.8 324.1,374.6 331.9,376.6 339.7,380.0 344.9,383.5 350.1,388.4 359.5,377.3 366.6,370.4 373.8,364.8 383.3,359.1 392.9,355.1 404.7,352.1 416.3,351.5 427.7,353.0 434.7,346.0 443.9,338.7 453.0,333.2 464.3,328.3 475.3,325.5 483.9,324.8 494.4,326.1 502.4,329.2 517.9,316.6 530.9,309.4 543.3,305.3 549.3,304.4 557.1,304.5 559.1,304.0 565.4,300.1 573.6,296.2 579.6,294.1 587.3,292.3 593.0,291.9 598.4,292.2 603.7,293.4 608.7,295.5 617.9,293.8 623.2,294.0 626.5,294.6 632.8,297.7 635.7,300.4 638.2,304.5 647.8,291.2 654.4,283.6 662.8,276.0 670.7,270.2 680.1,265.1 689.0,262.0 697.4,260.9 705.1,261.8 697.1,293.4 169.9,455.0Z"/>
<path d="M700.4,260.3 702.0,260.7 703.5,261.2 705.1,261.8" fill="none"/>
<path d="M171.7,460.0 233.0,441.0 237.1,430.5 241.4,421.6 246.1,414.5 253.5,406.0 261.1,399.1 271.4,391.8 279.3,387.4 289.8,383.0 300.4,380.0 308.4,378.7 316.3,378.3 324.2,378.8 332.1,380.3 340.0,383.2 345.2,386.2 350.4,390.3 357.5,382.2 364.7,375.2 372.0,369.6 379.2,365.2 391.3,360.1 403.2,357.5 412.6,357.2 419.5,358.3 424.1,359.7 426.4,359.1 435.8,349.1 445.1,341.5 456.7,334.5 468.0,329.6 479.1,326.8 489.9,326.0 500.3,327.6 508.3,330.9 510.5,329.7 519.5,322.1 526.0,317.7 532.5,314.2 540.9,310.8 547.1,309.1 553.1,308.2 559.0,308.1 564.7,308.9 575.1,303.4 585.1,299.8 594.6,298.3 603.7,299.0 613.5,295.1 621.0,293.3 628.1,293.0 634.8,294.5 640.9,298.1 645.0,303.2 652.2,293.3 658.8,285.9 667.2,278.3 677.2,271.3 686.5,266.6 695.3,263.9 703.6,263.1 709.7,264.0 701.4,296.3 171.7,460.0Z"/>
<path d="M169.9,455.0 170.5,456.7 171.1,458.3 171.7,460.0" fill="none"/>
<path d="M173.5,465.0 235.2,445.8 237.8,444.1 241.8,432.3 246.3,424.0 251.1,417.4 256.0,411.8 263.7,404.7 274.0,397.3 281.9,392.9 292.6,388.4 300.5,385.9 308.5,384.4 316.5,383.6 324.5,383.8 332.4,385.0 340.3,387.5 345.5,390.1 350.8,393.8 360.4,383.0 365.2,378.4 372.5,372.6 382.3,366.6 394.4,361.5 406.5,358.8 418.3,358.6 429.8,360.6 439.3,350.9 448.7,343.5 460.3,336.4 471.7,331.6 485.1,328.4 495.9,327.9 506.3,329.8 514.2,333.5 516.4,332.4 523.1,326.8 529.7,322.3 542.6,316.0 550.9,313.6 556.9,312.7 564.7,312.7 572.2,314.1 578.5,310.7 584.5,308.2 592.4,306.1 598.1,305.5 612.3,297.6 618.2,295.3 625.7,293.5 632.9,293.1 639.7,294.3 646.0,297.4 651.7,302.6 658.7,293.6 667.4,284.8 675.7,278.1 683.5,273.1 691.0,269.5 699.8,266.8 708.1,265.9 714.2,266.8 705.8,299.2 173.5,465.0Z"/>
<path d="M709.7,264.0 711.2,264.8 712.8,265.8 714.2,266.8" fill="none"/>
<path d="M175.4,470.2 240.2,449.8 242.6,446.6 244.6,440.5 249.0,431.5 253.8,424.4 261.3,415.9 269.0,409.1 276.8,403.6 284.7,399.1 295.4,394.5 303.4,392.0 311.4,390.4 319.5,389.7 327.5,389.9 335.4,391.2 340.7,392.9 346.0,395.2 351.2,398.7 360.9,387.5 368.2,380.5 375.6,374.8 385.4,368.9 397.7,363.8 409.8,361.0 421.6,360.6 428.6,361.7 433.2,363.1 442.8,353.5 452.2,346.1 463.9,339.1 475.4,334.2 488.8,331.0 499.7,330.5 510.1,332.2 516.2,334.6 520.1,336.9 522.2,336.1 529.0,330.7 537.8,325.2 544.2,322.1 550.5,319.8 558.7,318.1 564.6,317.8 572.2,318.7 577.7,320.8 579.7,320.3 593.8,314.3 602.5,307.1 612.9,300.6 620.9,297.0 630.4,294.5 637.6,294.0 644.5,295.0 650.8,297.9 653.8,300.2 656.5,303.4 658.2,303.3 665.1,295.0 671.7,288.5 680.0,281.7 687.8,276.7 695.3,273.0 704.2,270.2 712.5,269.4 718.6,270.2 710.1,302.2 175.4,470.2Z"/>
<path d="M173.5,465.0 174.2,466.7 174.8,468.5 175.4,470.2" fill="none"/>
<path d="M177.3,475.4 245.3,453.8 247.8,451.6 252.0,440.6 256.7,432.8 261.6,426.5 266.7,421.2 274.4,414.5 282.3,409.1 290.3,404.8 298.3,401.4 306.4,398.9 314.4,397.3 327.8,396.8 335.8,397.8 341.1,399.3 346.4,401.6 351.7,404.8 354.2,402.5 361.5,393.0 368.8,385.6 378.7,377.8 388.7,372.0 401.0,366.8 413.1,364.0 425.1,363.5 432.1,364.5 436.7,365.8 448.7,354.9 458.2,347.9 467.6,342.4 479.1,337.5 492.6,334.2 499.2,333.6 505.7,333.8 516.1,336.0 522.0,338.7 525.9,341.3 528.0,340.8 534.8,335.5 543.6,330.2 550.0,327.3 556.2,325.3 564.4,323.9 570.2,324.0 575.9,325.0 581.3,327.2 589.3,324.6 602.7,312.1 615.4,303.4 625.5,298.8 635.0,296.2 644.1,295.8 650.8,297.1 657.1,300.2 660.0,302.8 662.6,306.2 664.5,305.2 671.4,297.2 680.0,289.2 686.2,284.6 694.0,279.8 701.4,276.4 710.2,274.0 716.8,273.5 722.9,274.4 714.6,305.2 177.3,475.4Z"/>
<path d="M718.6,270.2 720.1,271.5 721.5,272.9 722.9,274.4" fill="none"/>
<path d="M179.2,480.6 253.1,457.0 259.9,443.0 264.7,435.9 269.7,430.1 274.8,425.2 282.7,419.1 296.0,411.6 304.1,408.4 312.1,406.2 320.2,404.9 328.3,404.7 336.3,405.6 341.7,407.0 347.0,409.2 352.3,412.5 354.7,410.1 362.1,399.7 369.5,391.7 379.4,383.4 389.4,377.1 401.8,371.5 409.2,369.2 416.5,367.7 428.5,367.1 435.6,368.1 440.2,369.4 442.6,367.9 452.3,358.9 461.8,351.9 471.3,346.4 480.6,342.3 489.7,339.4 496.4,338.1 503.1,337.4 509.5,337.6 519.9,339.8 525.9,342.5 531.6,346.8 533.7,346.5 544.9,338.5 555.6,333.5 565.9,331.1 571.8,331.0 575.6,331.4 586.2,325.9 592.2,323.8 598.1,322.6 604.9,316.3 613.6,309.7 621.9,304.8 630.0,301.2 637.7,299.0 643.3,298.1 648.7,298.1 653.8,298.8 658.7,300.6 663.2,303.5 666.0,306.3 668.5,310.1 677.5,300.4 684.0,294.4 690.2,289.6 698.1,284.7 705.6,281.2 714.4,278.7 720.9,278.3 727.0,279.3 719.1,308.2 179.2,480.6Z"/>
<path d="M177.3,475.4 177.9,477.1 178.6,478.9 179.2,480.6" fill="none"/>
<path d="M181.2,486.0 261.1,460.3 270.5,444.0 278.0,435.3 283.2,430.7 291.1,425.1 304.5,418.4 318.0,414.7 326.1,413.9 331.5,414.0 336.9,414.7 342.2,416.1 347.6,418.4 352.9,422.2 355.4,419.6 362.7,407.7 370.1,399.0 380.2,390.0 392.7,381.7 405.2,376.0 412.6,373.6 420.0,372.1 432.0,371.6 439.1,372.5 443.7,373.8 446.1,372.9 455.8,363.7 465.5,356.6 475.0,351.0 486.6,346.0 495.8,343.4 502.5,342.2 509.1,341.9 515.5,342.3 521.7,343.6 527.8,346.0 533.6,349.8 537.3,353.4 539.3,353.7 546.1,348.4 554.8,343.5 563.2,340.4 569.3,339.4 578.2,332.9 586.8,327.8 595.0,324.4 604.9,322.5 607.0,321.4 620.1,311.5 626.3,307.9 634.4,304.3 642.2,302.0 647.8,301.2 654.9,301.2 660.0,302.3 664.8,304.3 669.2,307.7 671.8,310.9 674.2,315.4 681.2,306.9 687.8,300.5 696.1,294.0 704.0,289.3 711.4,286.1 718.4,284.3 724.9,283.9 731.0,285.0 723.6,311.3 181.2,486.0Z"/>
<path d="M727.0,279.3 728.4,281.1 729.7,283.0 731.0,285.0" fill="none"/>
<path d="M183.1,491.4 229.8,476.3 238.1,471.9 246.8,470.8 271.8,462.6 279.0,451.0 286.6,442.5 297.1,434.5 302.5,431.5 310.5,428.0 318.6,425.8 324.0,425.0 334.8,425.1 340.2,426.3 345.6,428.5 351.0,432.3 353.7,435.4 356.2,432.2 358.5,426.2 363.4,417.4 370.9,407.5 380.9,397.5 393.6,388.5 406.1,382.2 413.6,379.6 421.0,377.8 433.1,376.7 440.3,377.3 447.3,379.1 449.6,378.7 459.4,369.3 469.1,362.0 478.7,356.3 490.4,351.1 499.5,348.5 506.3,347.4 515.0,347.1 521.4,347.8 527.6,349.6 533.6,352.5 537.4,355.4 542.7,361.7 544.6,362.8 553.6,355.9 562.3,351.6 564.5,350.0 569.2,344.9 576.1,338.6 587.2,331.0 593.6,327.8 599.8,325.4 607.8,323.6 613.5,323.2 626.5,313.9 638.8,308.0 646.6,305.7 652.2,304.8 657.6,304.7 662.8,305.5 667.6,307.2 672.2,310.1 674.9,312.9 677.4,316.8 690.4,305.0 696.5,300.8 704.2,296.7 715.2,292.5 722.2,290.7 728.7,290.4 734.6,291.8 728.2,314.4 183.1,491.4Z"/>
<path d="M181.2,486.0 181.8,487.8 182.5,489.6 183.1,491.4" fill="none"/>
<path d="M185.1,497.0 211.8,488.2 219.3,478.2 224.6,473.3 230.2,469.7 238.7,465.9 247.5,464.1 253.5,464.0 259.5,465.2 268.9,469.5 285.4,464.1 288.0,461.9 290.4,458.2 295.5,452.6 300.7,448.2 306.0,444.8 314.0,441.0 322.1,438.8 332.7,433.8 340.6,431.7 348.6,431.3 353.9,432.3 359.2,434.7 361.8,435.0 364.2,429.5 369.1,421.0 376.6,411.5 386.8,401.9 399.5,393.2 412.1,387.2 419.5,384.9 426.9,383.3 439.1,382.8 446.2,383.9 450.8,385.4 453.1,385.4 463.0,375.6 472.7,368.1 482.3,362.3 494.1,357.0 503.3,354.4 512.3,353.1 520.9,353.2 529.3,355.0 535.3,357.7 541.0,362.0 544.6,366.3 549.4,376.1 556.4,369.1 564.1,357.1 573.7,346.3 580.7,340.3 587.4,335.5 593.9,331.6 600.3,328.7 610.5,325.6 622.1,324.4 630.8,318.4 639.1,314.0 647.1,311.0 654.7,309.4 663.7,309.3 670.4,310.9 675.0,313.5 680.5,319.1 689.6,309.9 700.1,301.9 709.8,296.7 718.8,293.8 725.5,293.1 730.2,293.6 734.6,295.1 738.5,298.0 732.8,317.6 185.1,497.0Z"/>
<path d="M734.6,291.8 735.8,294.4 736.9,297.1 738.5,298.0" fill="none"/>
<path d="M187.2,502.6 205.2,496.6 212.3,484.3 217.5,478.4 225.8,471.9 234.4,467.3 243.1,464.2 249.1,463.0 255.0,462.5 261.1,462.8 270.3,465.4 279.8,472.0 301.7,464.6 304.1,459.1 306.5,454.9 311.5,448.5 319.4,441.4 327.3,436.3 338.0,431.8 348.7,429.7 354.0,429.7 359.4,430.5 369.9,434.5 377.4,422.6 385.0,414.0 395.2,405.3 405.4,398.8 418.0,393.2 425.5,391.1 432.9,389.9 440.2,389.7 445.0,390.1 456.6,393.4 466.6,383.0 476.4,375.1 486.0,369.1 497.8,363.7 507.0,361.0 516.0,359.7 524.7,359.9 533.0,361.9 539.0,365.0 544.6,370.0 548.0,375.2 551.1,382.4 555.3,381.0 560.8,370.5 566.0,362.5 571.0,356.3 578.2,348.8 589.7,339.5 602.8,332.1 609.0,329.7 617.1,327.8 622.9,327.3 628.5,327.7 637.1,322.4 645.3,318.3 653.3,315.6 658.9,314.4 666.2,314.2 671.3,315.0 677.6,317.9 681.9,321.7 683.6,321.8 690.6,314.4 699.3,306.9 707.4,301.4 717.1,296.7 726.0,294.2 732.6,293.8 738.8,295.0 744.2,298.1 737.5,320.8 187.2,502.6Z"/>
<path d="M185.1,497.0 185.8,498.8 186.5,500.7 187.2,502.6" fill="none"/>
<path d="M189.2,508.2 201.3,504.2 208.4,490.8 216.2,481.5 221.8,476.8 227.4,473.0 239.1,467.4 248.0,464.7 254.0,463.7 260.0,463.4 266.1,463.8 272.2,465.1 278.5,467.8 288.0,475.3 299.1,471.6 301.3,465.5 303.8,460.9 308.8,453.9 316.7,446.0 327.4,438.5 332.7,435.7 340.9,432.6 349.0,430.7 354.3,430.2 362.4,430.5 367.7,431.7 378.3,436.7 385.9,425.9 396.1,415.7 406.3,408.4 419.0,402.0 431.5,398.5 441.3,397.6 450.8,398.8 455.5,400.4 460.0,402.8 465.1,396.6 472.6,389.1 479.9,383.1 487.2,378.2 494.4,374.3 501.5,371.2 510.7,368.5 517.4,367.4 528.3,367.7 534.6,369.2 538.6,371.1 542.5,373.7 546.1,377.4 549.5,383.0 550.9,387.3 553.0,387.0 559.4,384.9 565.1,373.6 570.3,365.8 575.3,359.6 582.6,352.1 594.1,342.8 607.3,335.4 613.6,333.0 621.7,331.0 636.9,330.5 651.4,323.3 657.4,321.4 663.1,320.3 670.3,320.1 675.4,321.1 680.1,323.2 684.4,326.9 686.4,325.6 693.5,317.9 702.4,310.1 710.7,304.2 720.5,299.1 729.6,296.1 736.4,295.3 744.2,296.3 749.7,299.2 742.3,324.0 189.2,508.2Z"/>
<path d="M744.2,298.1 746.1,298.3 747.9,298.7 749.7,299.2" fill="none"/>
<path d="M191.3,514.0 200.5,511.0 204.8,500.2 207.3,496.0 212.5,489.3 218.0,483.9 229.4,475.7 241.2,470.2 250.1,467.5 256.2,466.4 265.3,465.9 271.4,466.4 277.6,467.9 283.9,470.7 287.0,472.9 293.6,479.7 296.3,478.7 298.9,475.7 303.7,465.4 308.8,458.2 314.1,452.5 324.8,443.9 330.2,440.6 338.4,436.7 346.6,434.0 352.0,432.8 360.2,432.0 365.5,432.3 370.9,433.2 376.2,435.0 381.5,438.1 384.2,440.4 386.7,441.3 391.8,434.0 399.5,425.8 407.2,419.6 417.4,413.4 425.0,410.2 432.5,408.0 439.9,407.0 444.7,406.9 449.5,407.4 454.3,408.7 458.9,410.8 463.3,414.3 473.5,401.4 478.5,396.5 485.9,390.4 493.2,385.6 500.3,381.8 507.4,379.0 514.3,377.0 521.0,376.0 527.6,376.0 533.9,377.1 538.0,378.6 542.0,380.9 545.7,384.3 547.5,386.7 550.7,393.3 563.5,388.9 571.9,373.9 577.1,366.8 584.5,358.6 591.6,352.1 598.5,346.9 611.7,339.4 618.1,337.0 634.4,332.3 644.1,331.0 651.3,331.8 661.3,328.1 668.8,326.8 674.2,326.9 679.2,328.1 683.8,330.6 686.6,333.3 696.3,322.3 705.3,314.0 713.8,307.8 723.8,302.2 733.1,298.8 741.7,297.5 749.5,298.4 755.0,301.1 747.1,327.2 191.3,514.0Z"/>
<path d="M189.2,508.2 189.9,510.2 190.6,512.1 191.3,514.0" fill="none"/>
<path d="M193.5,519.9 199.6,517.8 206.6,503.3 211.7,496.0 217.2,490.3 228.6,481.5 234.5,478.1 243.5,474.2 252.5,471.4 258.6,470.3 267.8,469.7 273.9,470.1 280.1,471.3 286.4,473.8 292.7,478.1 296.0,481.8 299.1,483.1 301.3,476.7 303.8,471.8 308.9,464.2 314.2,458.2 319.6,453.2 327.7,447.2 333.2,443.9 341.4,440.1 349.7,437.3 357.9,435.6 366.1,435.1 371.5,435.6 376.9,436.7 382.2,438.8 387.5,442.2 392.7,448.4 395.3,449.1 397.8,444.9 402.9,438.4 410.6,431.1 420.9,424.4 430.9,420.1 440.9,418.0 445.7,417.9 450.5,418.5 457.6,421.1 462.1,424.6 464.2,427.2 466.5,427.3 468.9,426.2 471.6,421.3 476.8,413.8 486.8,403.2 499.0,394.4 510.9,388.9 517.8,386.9 524.5,386.1 531.0,386.3 535.2,387.3 539.3,388.9 543.2,391.6 546.8,395.9 548.4,399.2 567.7,393.0 570.2,390.1 575.9,379.7 581.2,372.3 586.2,366.3 593.5,359.1 600.5,353.4 607.3,348.8 629.2,337.2 641.5,333.3 647.3,332.5 653.0,332.5 658.3,333.4 665.1,335.8 672.6,334.7 679.5,335.3 684.3,337.4 688.7,340.5 696.4,330.5 705.9,320.9 716.8,312.2 726.9,306.1 736.4,302.2 745.1,300.5 753.1,300.9 757.5,302.3 760.2,303.9 752.0,330.5 193.5,519.9Z"/>
<path d="M755.0,301.1 756.8,302.0 758.5,302.9 760.2,303.9" fill="none"/>
<path d="M195.6,525.9 201.8,523.7 206.2,512.7 208.7,508.3 213.9,501.2 219.5,495.5 231.0,486.7 236.9,483.3 246.0,479.3 255.1,476.5 261.2,475.3 270.4,474.6 276.6,475.0 282.9,476.2 289.1,478.5 295.5,482.5 298.8,485.9 301.7,486.2 306.6,475.8 311.8,468.4 317.1,462.5 325.3,455.4 333.5,449.9 341.8,445.6 352.9,441.6 361.2,439.9 369.4,439.3 374.8,439.7 380.2,440.7 385.6,442.7 390.9,445.9 393.5,448.2 396.1,451.4 398.7,456.4 406.3,453.8 414.1,441.4 419.3,435.6 424.4,431.0 432.1,425.8 442.2,421.1 452.1,418.8 457.0,418.6 461.7,419.2 468.7,421.9 473.1,425.7 475.2,429.1 477.5,429.5 482.2,427.4 489.9,417.1 497.4,410.2 504.7,405.2 514.1,400.7 523.3,398.5 532.0,398.6 538.2,400.8 542.0,403.9 543.8,406.3 545.9,406.0 574.1,396.4 585.1,379.0 590.2,372.6 597.6,365.1 618.7,348.1 627.7,342.6 636.3,338.6 644.5,336.0 650.5,334.9 658.1,334.6 663.5,335.4 670.2,338.1 673.2,340.3 676.1,343.4 684.3,346.0 688.6,349.7 690.5,349.0 698.7,337.4 708.4,326.8 719.6,317.4 729.9,310.8 739.5,306.4 750.1,304.0 758.1,304.4 762.5,305.9 765.2,307.5 756.9,333.9 195.6,525.9Z"/>
<path d="M193.5,519.9 194.2,521.9 194.9,523.9 195.6,525.9" fill="none"/>
<path d="M197.9,531.9 204.1,529.8 211.2,515.1 216.4,507.8 222.0,501.9 233.6,493.0 239.6,489.6 248.6,485.5 257.8,482.7 264.0,481.5 273.3,480.7 279.5,481.1 285.8,482.3 292.1,484.7 298.5,489.0 301.8,492.7 304.7,492.0 309.6,481.4 314.8,474.0 320.2,468.0 328.4,460.8 336.7,455.2 345.1,450.9 356.2,446.9 364.5,445.1 372.8,444.5 378.3,444.9 383.7,445.9 389.1,447.9 394.4,451.1 397.0,453.5 399.6,456.7 402.1,461.4 404.7,460.5 412.6,446.9 417.8,440.5 423.0,435.4 433.4,427.8 438.5,425.0 446.2,421.7 453.7,419.7 458.6,419.1 465.9,419.2 470.6,420.2 477.5,423.6 481.8,428.1 483.8,431.9 486.1,432.4 500.2,427.6 509.9,420.1 514.7,417.4 521.6,415.1 531.4,406.5 540.7,401.7 547.3,400.1 553.7,400.4 557.6,402.0 561.3,405.6 563.3,405.8 580.6,399.8 583.0,397.3 588.8,387.3 596.8,376.4 602.0,370.1 609.4,362.5 616.6,356.2 625.9,349.5 632.6,345.6 641.2,341.6 651.5,338.4 659.4,337.4 666.8,337.8 673.6,339.9 678.4,342.9 682.6,347.6 684.9,352.3 686.5,359.6 687.7,361.8 689.3,362.3 691.4,360.8 697.7,349.9 708.2,336.5 719.9,325.3 730.6,317.5 742.5,311.4 753.3,308.4 758.3,308.1 763.0,308.7 767.3,310.2 770.0,311.8 761.9,337.2 197.9,531.9Z"/>
<path d="M765.2,307.5 766.8,308.8 768.4,310.3 770.0,311.8" fill="none"/>
<path d="M200.1,538.1 209.5,534.8 214.0,523.8 216.6,519.6 222.0,512.7 227.6,507.1 239.4,498.7 251.5,492.8 260.7,489.9 266.9,488.7 276.3,488.1 282.5,488.5 288.8,489.9 295.2,492.6 298.4,494.8 305.0,501.5 307.9,500.5 310.2,493.9 312.7,488.8 318.0,480.9 323.4,474.8 328.9,469.6 337.2,463.4 342.8,460.0 351.2,456.0 359.6,453.1 368.0,451.3 376.3,450.8 384.5,451.6 389.9,453.2 395.2,455.9 400.5,460.6 403.1,464.4 405.7,466.0 411.0,455.0 416.3,447.6 421.6,441.8 426.8,437.1 434.7,431.3 447.6,424.7 455.2,422.2 462.7,420.9 470.1,420.8 474.8,421.5 479.5,423.1 484.0,425.7 488.3,430.1 492.4,436.3 511.2,429.7 513.7,427.3 519.1,419.0 526.8,410.9 536.5,403.7 545.9,399.2 554.8,397.2 559.1,397.1 563.3,397.8 569.1,400.7 570.9,402.5 574.2,407.8 587.1,403.3 593.1,392.2 598.7,383.6 604.0,376.8 611.6,368.5 619.0,361.8 628.4,354.7 635.2,350.4 644.0,346.0 654.4,342.4 662.4,341.0 671.7,341.3 678.6,343.3 684.8,347.6 688.8,353.1 690.8,358.7 692.2,366.7 696.0,365.4 698.5,362.5 707.4,348.6 717.5,337.0 726.7,328.7 737.4,321.3 747.2,316.4 758.0,313.4 763.0,313.1 767.7,313.7 772.0,315.3 774.6,317.1 766.9,340.7 200.1,538.1Z"/>
<path d="M197.9,531.9 198.6,534.0 199.3,536.0 200.1,538.1" fill="none"/>
<path d="M202.4,544.3 215.0,539.9 219.8,530.3 225.1,522.4 230.7,516.4 236.5,511.5 245.5,505.7 257.7,500.3 270.1,497.3 276.3,496.8 282.6,497.0 289.0,498.2 295.4,500.8 305.1,508.2 313.7,505.0 316.1,498.5 318.7,493.6 324.0,486.1 329.5,480.1 335.0,475.1 343.4,469.2 349.0,466.0 357.5,462.3 365.9,459.7 374.2,458.4 382.5,458.3 388.0,459.2 393.4,461.1 398.8,464.3 406.6,472.5 409.3,466.3 414.7,457.0 420.0,450.2 425.3,444.6 430.7,440.0 438.6,434.4 446.4,430.0 454.2,426.8 461.8,424.7 469.3,423.7 476.6,423.8 481.4,424.8 486.0,426.6 490.5,429.5 494.8,434.4 496.7,438.4 498.8,440.1 510.6,436.0 518.9,423.0 526.7,414.3 531.7,409.9 539.1,404.7 550.9,398.9 557.7,397.1 562.2,396.5 570.6,397.2 574.6,398.7 578.3,401.2 581.7,405.7 583.1,409.5 585.1,409.8 591.6,407.5 603.2,388.4 611.2,378.5 618.7,370.7 626.0,364.3 635.4,357.6 644.4,352.4 653.0,348.6 661.3,346.2 669.2,345.1 676.6,345.5 683.5,347.5 688.2,350.5 692.3,355.3 694.6,360.0 697.1,370.5 702.8,368.4 705.0,366.5 711.3,356.4 721.7,343.7 733.3,333.1 743.9,326.0 753.6,321.4 759.1,319.7 764.3,318.9 772.2,319.6 776.3,321.4 778.9,323.4 772.0,344.1 202.4,544.3Z"/>
<path d="M774.6,317.1 776.0,319.1 777.5,321.2 778.9,323.4" fill="none"/>
<path d="M204.7,550.7 223.7,543.9 231.4,531.1 237.0,524.9 242.8,520.0 248.8,516.1 261.0,510.4 273.5,507.5 282.9,507.4 289.3,508.6 292.5,509.7 302.3,516.0 319.7,509.9 327.5,496.4 332.9,489.7 338.5,484.4 349.7,476.3 355.3,473.3 363.8,469.8 372.2,467.7 377.8,467.0 383.4,467.0 388.9,467.7 394.3,469.4 399.7,472.7 402.4,475.3 405.0,479.4 407.6,478.7 410.3,475.7 413.0,469.6 418.4,460.8 423.8,454.1 429.2,448.7 434.5,444.1 442.5,438.5 450.4,434.2 458.2,430.9 465.9,428.7 473.4,427.6 480.8,427.7 487.9,429.3 492.5,431.4 496.9,434.9 499.0,437.4 502.9,444.9 510.1,442.4 512.6,439.6 515.6,434.0 521.0,425.9 526.3,419.8 534.0,412.7 543.9,405.7 555.9,400.1 567.2,397.5 573.7,397.5 577.8,398.2 583.7,400.9 587.3,404.1 588.9,406.5 591.8,413.4 596.1,411.8 598.4,410.4 604.6,398.7 610.3,390.6 615.6,384.0 623.3,376.0 630.6,369.5 640.1,362.6 649.1,357.4 657.8,353.5 666.1,351.1 674.0,350.0 681.4,350.4 688.2,352.5 692.9,355.6 696.9,360.6 699.1,365.8 700.3,374.3 702.0,374.3 711.5,370.9 720.3,358.1 728.1,349.0 739.7,338.5 750.2,331.6 756.1,328.8 761.6,326.8 770.2,325.5 774.9,326.1 777.7,327.0 780.4,328.6 782.8,331.0 777.2,347.6 204.7,550.7Z"/>
<path d="M202.4,544.3 203.1,546.4 203.9,548.5 204.7,550.7" fill="none"/>
<path d="M207.0,557.1 235.6,546.9 243.8,536.3 249.5,531.0 255.5,527.0 264.7,522.8 274.0,520.5 280.3,520.2 286.7,521.1 296.5,525.1 328.5,513.6 331.3,510.9 336.6,501.9 344.9,493.0 350.5,488.6 356.1,485.0 367.4,480.0 378.7,477.5 387.0,477.6 395.2,480.0 397.9,481.6 403.3,486.9 411.3,484.0 413.9,481.2 416.7,474.9 422.2,466.1 427.6,459.4 433.0,453.9 438.4,449.3 446.5,443.6 454.4,439.2 462.3,435.9 470.0,433.7 477.5,432.6 484.9,432.7 492.1,434.2 496.7,436.3 501.1,439.8 503.2,442.3 507.1,449.7 511.9,448.0 514.5,444.6 517.5,438.9 523.1,430.6 533.6,419.1 546.3,409.4 553.6,405.3 560.7,402.3 567.7,400.3 574.3,399.4 580.8,399.7 584.9,400.6 590.7,403.5 594.2,406.9 597.3,412.7 598.5,417.0 602.8,415.4 617.2,394.0 622.5,387.7 630.2,379.9 637.5,373.6 646.9,367.0 653.7,363.1 662.4,359.2 670.7,356.7 678.6,355.6 686.0,356.1 691.2,357.6 695.9,360.4 700.0,365.1 702.3,369.8 703.7,377.5 705.0,378.8 720.3,373.4 731.5,358.6 738.9,350.9 747.9,343.5 758.1,337.4 767.4,334.0 775.7,333.5 781.5,335.4 784.0,337.4 786.0,340.5 782.4,351.2 207.0,557.1Z"/>
<path d="M782.8,331.0 783.9,333.9 785.0,337.0 786.0,340.5" fill="none"/>
<path d="M209.4,563.7 260.0,545.4 269.0,540.5 278.4,538.8 343.2,515.3 348.7,507.6 354.2,502.0 362.6,496.2 371.1,492.4 379.5,490.5 385.1,490.4 390.7,491.5 396.1,494.6 398.9,495.3 417.6,488.5 423.2,477.2 425.9,472.9 431.4,465.9 436.9,460.3 442.3,455.6 450.4,449.8 458.4,445.3 466.3,441.9 479.1,438.8 486.6,438.5 491.5,439.0 498.5,441.3 503.0,444.2 507.2,449.1 509.1,453.2 511.3,454.6 516.1,452.7 519.2,446.0 524.9,436.9 530.4,430.1 535.7,424.6 543.5,417.9 551.0,412.7 558.4,408.6 565.5,405.6 572.5,403.5 579.2,402.6 585.7,402.7 589.8,403.5 593.8,405.0 597.6,407.5 601.0,411.4 603.8,418.1 605.7,418.7 608.8,413.2 614.5,405.3 624.8,394.6 649.0,375.2 658.2,369.6 666.9,365.6 675.3,363.1 683.1,362.1 690.5,362.6 695.6,364.4 700.2,367.5 702.9,370.7 705.2,375.4 706.5,383.1 708.2,383.5 731.1,375.2 739.4,364.7 746.7,357.1 755.6,350.1 765.6,344.8 774.4,342.7 780.6,343.4 783.3,344.8 785.6,347.2 787.4,351.1 787.9,354.1 787.7,354.7 209.4,563.7Z"/>
<path d="M207.0,557.1 207.8,559.3 208.6,561.5 209.4,563.7" fill="none"/>
<path d="M211.8,570.4 424.1,493.0 429.7,481.6 435.2,474.0 440.8,468.0 446.2,463.0 454.4,457.0 462.4,452.4 470.3,449.0 478.1,446.7 483.2,445.8 490.7,445.6 495.5,446.2 500.3,447.7 504.8,450.3 507.0,452.2 509.1,454.8 511.0,458.5 513.1,460.5 518.0,458.7 520.6,456.0 523.7,449.8 529.4,441.0 540.3,428.8 548.1,422.1 555.7,416.9 563.1,412.8 570.3,409.7 577.3,407.6 584.1,406.6 590.6,406.7 594.7,407.5 600.6,410.0 604.2,412.9 607.4,417.7 608.8,421.3 617.3,409.7 622.6,403.5 627.8,398.5 635.1,392.4 644.5,386.4 653.4,382.4 664.8,375.9 673.4,372.2 681.6,370.0 687.5,369.4 693.0,369.8 698.1,371.4 702.7,374.5 705.4,377.8 707.6,382.7 709.4,388.9 743.8,376.3 751.3,368.3 758.3,362.2 764.5,358.1 770.3,355.5 775.5,354.4 780.2,354.8 784.1,357.4 785.9,361.0 793.0,358.4 793.0,358.4 211.8,570.4Z"/>
<path d="M787.9,354.1 789.5,355.9 791.2,357.2 793.0,358.4" fill="none"/>
<path d="M214.3,577.2 430.6,497.5 439.0,483.9 444.6,477.2 450.1,471.8 461.0,463.7 466.4,460.7 474.3,457.1 484.7,454.4 494.7,454.0 501.9,455.6 506.4,458.2 510.7,462.8 512.6,466.9 522.3,463.7 524.8,462.1 528.0,455.6 533.8,446.5 539.4,439.6 544.8,434.1 552.7,427.3 560.3,422.0 567.8,417.8 575.0,414.7 582.0,412.7 588.8,411.6 595.3,411.7 599.5,412.4 603.4,413.9 607.2,416.4 613.8,424.5 622.6,412.1 627.9,406.2 635.6,399.2 647.6,390.7 654.4,387.2 661.0,384.6 673.3,382.2 679.7,379.8 685.8,378.4 691.5,377.9 695.2,378.2 700.3,379.7 704.9,382.9 707.5,386.5 710.6,394.4 798.5,362.0 798.5,362.0 214.3,577.2Z" stroke="none"/><path d="M214.3,577.2 430.6,497.5 439.0,483.9 444.6,477.2 450.1,471.8 461.0,463.7 466.4,460.7 474.3,457.1 484.7,454.4 494.7,454.0 501.9,455.6 506.4,458.2 510.7,462.8 512.6,466.9 522.3,463.7 524.8,462.1 528.0,455.6 533.8,446.5 539.4,439.6 544.8,434.1 552.7,427.3 560.3,422.0 567.8,417.8 575.0,414.7 582.0,412.7 588.8,411.6 595.3,411.7 599.5,412.4 603.4,413.9 607.2,416.4 613.8,424.5 622.6,412.1 627.9,406.2 635.6,399.2 647.6,390.7 654.4,387.2 661.0,384.6 673.3,382.2 679.7,379.8 685.8,378.4 691.5,377.9 695.2,378.2 700.3,379.7 704.9,382.9 707.5,386.5 710.6,394.4 798.5,362.0" fill="none"/>
</g>
<line x1="232.9" y1="662.4" x2="1065.4" y2="320.7" stroke="#9c9c9c" stroke-width="1" shape-rendering="crispEdges"/>
<line x1="232.9" y1="662.4" x2="189.4" y2="443.9" stroke="#9c9c9c" stroke-width="1" shape-rendering="crispEdges"/>
<line x1="189.4" y1="443.9" x2="1165.6" y2="146.8" stroke="#9c9c9c" stroke-width="1" shape-rendering="crispEdges"/>
<line x1="38.5" y1="65.0" x2="189.4" y2="443.9" stroke="#9c9c9c" stroke-width="1" shape-rendering="crispEdges"/>
<line x1="1065.4" y1="320.7" x2="1165.6" y2="146.8" stroke="#9c9c9c" stroke-width="1" shape-rendering="crispEdges"/>
<line x1="195.9" y1="611.9" x2="72.6" y2="234.6" stroke="rgba(195,205,35,0.48)" stroke-width="3.8" stroke-linecap="square"/>
<line x1="72.6" y1="234.6" x2="488.0" y2="151.6" stroke="rgba(225,225,10,0.70)" stroke-width="3.8" stroke-linecap="square"/>
<line x1="488.0" y1="151.6" x2="817.7" y2="375.1" stroke="rgba(195,205,35,0.48)" stroke-width="3.8" stroke-linecap="square"/>
<line x1="817.7" y1="375.1" x2="195.9" y2="611.9" stroke="rgba(225,225,10,0.70)" stroke-width="3.8" stroke-linecap="square"/>
<line x1="164.3" y1="475.1" x2="46.2" y2="133.1" stroke="rgba(195,205,35,0.48)" stroke-width="3.8" stroke-linecap="square"/>
<line x1="46.2" y1="133.1" x2="494.1" y2="63.8" stroke="rgba(225,225,10,0.70)" stroke-width="3.8" stroke-linecap="square"/>
<line x1="494.1" y1="63.8" x2="863.4" y2="255.0" stroke="rgba(195,205,35,0.48)" stroke-width="3.8" stroke-linecap="square"/>
<line x1="863.4" y1="255.0" x2="164.3" y2="475.1" stroke="rgba(225,225,10,0.70)" stroke-width="3.8" stroke-linecap="square"/>
<line x1="195.9" y1="611.9" x2="164.3" y2="475.1" stroke="rgba(195,205,35,0.48)" stroke-width="3.8" stroke-linecap="square"/>
<line x1="72.6" y1="234.6" x2="46.2" y2="133.1" stroke="rgba(195,205,35,0.48)" stroke-width="3.8" stroke-linecap="square"/>
<line x1="488.0" y1="151.6" x2="494.1" y2="63.8" stroke="rgba(195,205,35,0.48)" stroke-width="3.8" stroke-linecap="square"/>
<line x1="817.7" y1="375.1" x2="863.4" y2="255.0" stroke="rgba(195,205,35,0.48)" stroke-width="3.8" stroke-linecap="square"/>
<line x1="410" y1="78" x2="410" y2="147" stroke="#c83030" stroke-width="1" stroke-dasharray="6 4"/>
<line x1="408" y1="81" x2="366" y2="149" stroke="#c83030" stroke-width="1" stroke-dasharray="6 4"/>
<line x1="442" y1="394" x2="438.5" y2="492" stroke="#d02020" stroke-width="1" stroke-dasharray="6 3"/>
<line x1="471" y1="362" x2="469" y2="480" stroke="#d02020" stroke-width="1" stroke-dasharray="6 3"/>
<path d="M438.5 492.0 Q 452.0 481.0 469.0 480.0" stroke="#e02020" fill="none"/>
<polygon points="140,456 158,453 160,463 142,466" fill="#ff0"/>
</svg><!--/V3D--></div>
<div class="a" style="left:169px;top:255px;width:1px;height:664px;background:repeating-linear-gradient(#d4d0c8 0 1px,#555 1px 2px)"></div>
<div class="a" style="left:145px;top:919px;width:25px;height:25px;background:#000"></div>
<div class="a" style="left:170px;top:919px;width:795px;height:25px;background:#d4d0c8;border:1px dotted #444;border-top-color:#888"></div>
<div class="a" style="left:170px;top:942px;width:795px;height:2px;background:repeating-linear-gradient(90deg,#111 0 15px,#cfcac2 15px 17px,#111 17px 32px,#d4d0c8 32px 49px)"></div>
<div class="sunk" style="left:178px;top:922px;width:778px;height:15px;background:#fff;box-shadow:inset 1px 1px 0 #404040"></div>
<svg class="a" style="left:616px;top:920px" width="13" height="22" viewBox="0 0 13 22"><path d="M.5 .5 H11.5 V15 L6 20.5 L.5 15Z" fill="#d4d0c8" stroke="#fff"/><path d="M11.5 .5 V15 L6 20.5" fill="none" stroke="#000"/></svg>
<div class="sunk" style="left:145px;top:947px;width:29px;height:18px;line-height:16px;font-size:11px;white-space:pre;padding-left:2px">WCS</div>
<div class="sunk" style="left:176px;top:947px;width:79px;height:18px;line-height:16px;font-size:11px;white-space:pre;padding-left:4px">x&nbsp;&nbsp;&nbsp;0.000</div>
<div class="sunk" style="left:256px;top:947px;width:79px;height:18px;line-height:16px;font-size:11px;white-space:pre;padding-left:4px">y&nbsp;&nbsp;&nbsp;0.000</div>
<div class="sunk" style="left:336px;top:947px;width:79px;height:18px;line-height:16px;font-size:11px;white-space:pre;padding-left:4px">z&nbsp;&nbsp;20.000</div>
<div class="sunk" style="left:416px;top:947px;width:99px;height:18px;line-height:16px;font-size:11px;white-space:pre;padding-left:28px">a&nbsp;&nbsp;&nbsp;&nbsp;&nbsp;&nbsp;0.000</div>
<div class="sunk" style="left:145px;top:967px;width:29px;height:18px;line-height:16px;font-size:11px;white-space:pre;padding-left:2px">MCS</div>
<div class="sunk" style="left:176px;top:967px;width:79px;height:18px;line-height:16px;font-size:11px;white-space:pre;padding-left:4px">x&nbsp;&nbsp;&nbsp;0.000</div>
<div class="sunk" style="left:256px;top:967px;width:79px;height:18px;line-height:16px;font-size:11px;white-space:pre;padding-left:4px">y&nbsp;&nbsp;&nbsp;0.000</div>
<div class="sunk" style="left:336px;top:967px;width:79px;height:18px;line-height:16px;font-size:11px;white-space:pre;padding-left:4px">z&nbsp;&nbsp;&nbsp;0.000</div>
<div class="sunk" style="left:416px;top:967px;width:99px;height:18px;line-height:16px;font-size:11px;white-space:pre;padding-left:28px">a&nbsp;&nbsp;&nbsp;&nbsp;&nbsp;&nbsp;0.000</div>
<div class="sunk" style="left:517px;top:947px;width:168px;height:18px;line-height:16px;font-size:11px;white-space:pre;"></div>
<div class="sunk" style="left:687px;top:947px;width:319px;height:18px;line-height:16px;font-size:11px;white-space:pre;padding-left:4px">Připraven</div>
<div class="sunk" style="left:517px;top:967px;width:489px;height:18px;line-height:16px;font-size:11px;white-space:pre;"></div>
<div class="sunk" style="left:1008px;top:947px;width:78px;height:18px;line-height:16px;font-size:11px;white-space:pre;padding-left:13px">0.000</div>
<div class="sunk" style="left:1088px;top:947px;width:78px;height:18px;line-height:16px;font-size:11px;white-space:pre;padding-left:13px">0.000</div>
<div class="sunk" style="left:1008px;top:967px;width:78px;height:18px;line-height:16px;font-size:11px;white-space:pre;padding-left:13px">0.000</div>
<div class="sunk" style="left:1088px;top:967px;width:78px;height:18px;line-height:16px;font-size:11px;white-space:pre;padding-left:13px">0.000</div>
<div class="a" style="left:914px;top:255px;width:52px;height:418px;background:#d4d0c8;border-right:1px solid #808080;border-bottom:1px solid #404040;box-shadow:inset 0 -1px 0 #808080"></div>
<div class="grp" style="left:915px;top:261px;width:48px;height:409px"></div><div class="grpl" style="left:921px;top:255px;line-height:12px">Pohled</div>
<div class="a" style="left:921px;top:254px;font-size:11.5px;background:#d4d0c8;padding:0 1px;line-height:13px">Pohled</div>
<div class="sunk" style="left:918px;top:271px;width:42px;height:42px;border-color:#404040 #fff #fff #404040;background:#fff;background-image:repeating-conic-gradient(#d4d0c8 0 25%,#fff 0 50%);background-size:2px 2px"><svg class="a" style="left:-1px;top:-1px" width="42" height="42" viewBox="0 0 42 42"><path d="M9 9 L27 6 L35 14 L14.5 16.5Z" fill="#0a0"/><path d="M9 9 L14.5 16.5 L15 36 L9.5 28Z" fill="#800000"/><path d="M14.5 16.5 L35 14 L34.6 32 L15 36Z" fill="#800000"/><path d="M9 9 L27 6 L35 14 L14.5 16.5Z M14.5 16.5 L15 36 M35 14 L34.6 32 M9 9 L9.5 28" fill="none" stroke="#d0d0d0" stroke-width="1.5"/><path d="M15 36 L34.6 32 M9.5 28 L15 36" fill="none" stroke="#333" stroke-width="1.2" stroke-dasharray="2 2"/></svg></div>
<div class="btn" style="left:918px;top:319px;width:42px;height:42px;line-height:40px;padding:0;line-height:0"><svg class="a" style="left:-1px;top:-1px" width="42" height="42" viewBox="0 0 42 42"><path d="M9 9 L27 6 L35 14 L14.5 16.5Z" fill="#800000"/><path d="M9 9 L14.5 16.5 L15 36 L9.5 28Z" fill="#0a0"/><path d="M14.5 16.5 L35 14 L34.6 32 L15 36Z" fill="#800000"/><path d="M9 9 L27 6 L35 14 L14.5 16.5Z M14.5 16.5 L15 36 M35 14 L34.6 32 M9 9 L9.5 28" fill="none" stroke="#d0d0d0" stroke-width="1.5"/><path d="M15 36 L34.6 32 M9.5 28 L15 36" fill="none" stroke="#333" stroke-width="1.2" stroke-dasharray="2 2"/></svg></div>
<div class="btn" style="left:918px;top:367px;width:42px;height:42px;line-height:40px;padding:0;line-height:0"><svg class="a" style="left:-1px;top:-1px" width="42" height="42" viewBox="0 0 42 42"><path d="M9 9 L27 6 L35 14 L14.5 16.5Z" fill="#800000"/><path d="M9 9 L14.5 16.5 L15 36 L9.5 28Z" fill="#800000"/><path d="M14.5 16.5 L35 14 L34.6 32 L15 36Z" fill="#0a0"/><path d="M9 9 L27 6 L35 14 L14.5 16.5Z M14.5 16.5 L15 36 M35 14 L34.6 32 M9 9 L9.5 28" fill="none" stroke="#d0d0d0" stroke-width="1.5"/><path d="M15 36 L34.6 32 M9.5 28 L15 36" fill="none" stroke="#333" stroke-width="1.2" stroke-dasharray="2 2"/></svg></div>
<div class="btn" style="left:918px;top:423px;width:42px;height:42px;line-height:40px;padding:0;line-height:0"><svg class="a" style="left:0;top:0" width="40" height="40" viewBox="0 0 42 42"><path d="M8 12 V8 H12 M30 8 H34 V12 M34 30 V34 H30 M12 34 H8 V30" fill="none" stroke="#000" stroke-width="1.3"/><circle cx="21" cy="21" r="12" fill="none" stroke="#900" stroke-width="1.2"/></svg></div>
<div class="btn" style="left:918px;top:470px;width:42px;height:42px;line-height:40px;padding:0;line-height:0"><svg class="a" style="left:0;top:0" width="40" height="40" viewBox="0 0 42 42"><path d="M8 12 V8 H12 M30 8 H34 V12 M34 30 V34 H30 M12 34 H8 V30" fill="none" stroke="#000" stroke-width="1.3"/><rect x="11" y="11" width="20" height="20" fill="none" stroke="#000" stroke-width="1.3"/><circle cx="21" cy="21" r="8" fill="none" stroke="#900" stroke-width="1.2"/></svg></div>
<div class="btn" style="left:918px;top:523px;width:42px;height:42px;line-height:40px;padding:0;line-height:0"><svg class="a" style="left:0;top:0" width="40" height="40" viewBox="0 0 42 42"><circle cx="16" cy="14.5" r="6.3" fill="none" stroke="#6a6a6a" stroke-width="2.6"/><circle cx="16" cy="14.5" r="6.3" fill="none" stroke="#f4f4f4" stroke-width="1.1"/><path d="M21 20 L34 35" stroke="#6a6a6a" stroke-width="5" stroke-linecap="round"/><path d="M21 20 L34 35" stroke="#e8e8e8" stroke-width="3" stroke-linecap="round"/><path d="M7 28 H19 M13 22 V34" stroke="#f00" stroke-width="2.6"/></svg></div>
<div class="btn" style="left:918px;top:570px;width:42px;height:42px;line-height:40px;padding:0;line-height:0"><svg class="a" style="left:0;top:0" width="40" height="40" viewBox="0 0 42 42"><circle cx="16" cy="14.5" r="6.3" fill="none" stroke="#6a6a6a" stroke-width="2.6"/><circle cx="16" cy="14.5" r="6.3" fill="none" stroke="#f4f4f4" stroke-width="1.1"/><path d="M21 20 L34 35" stroke="#6a6a6a" stroke-width="5" stroke-linecap="round"/><path d="M21 20 L34 35" stroke="#e8e8e8" stroke-width="3" stroke-linecap="round"/><path d="M9 28 H19" stroke="#f00" stroke-width="2.6"/></svg></div>
<div class="btn" style="left:918px;top:623px;width:42px;height:42px;line-height:40px;padding:0;line-height:0"><svg class="a" style="left:0;top:0" width="40" height="40" viewBox="0 0 42 42"><path d="M21 16 L30 7 L36 13 L27 22Z" fill="#d8d8d8" stroke="#777" stroke-width="1"/><path d="M6 31 L22 15 L28 21 L12 37 L7 37Z" fill="#c4c4c4" stroke="#6a6a6a" stroke-width="1"/><path d="M10 29 L16 33 M13 25 L20 29 M17 21 L24 25" fill="none" stroke="#555" stroke-width="1.3"/><path d="M9 33 L14 28 M13 29 L18 24 M17 25 L22 20" stroke="#f0f0f0" stroke-width="1"/></svg></div>
<div class="a" style="left:965px;top:255px;width:1px;height:690px;background:#808080"></div>
<div class="a" style="left:966px;top:255px;width:1px;height:690px;background:#fff"></div>
<div class="grp" style="left:967px;top:255px;width:200px;height:498px"></div>
<div class="grp" style="left:970px;top:265px;width:190px;height:126px"></div><div class="grpl" style="left:979px;top:259px;line-height:12px">Referenční bod</div>
<div class="t11" style="left:1005px;top:275px">Lokální</div><div class="t11" style="left:1061px;top:275px">=</div><div class="t11" style="left:1081px;top:275px">Globální</div>
<div class="t11" style="left:981px;top:291px;line-height:14px">x</div>
<div class="fld" style="left:991px;top:291px;width:67px;height:14px;line-height:14px;padding-left:3px;color:#00f">&nbsp;0.000</div>
<div class="fld" style="left:1071px;top:291px;width:68px;height:14px;line-height:14px;padding-left:2px;color:#000">&nbsp;0.000</div>
<div class="t11" style="left:981px;top:307px;line-height:14px">y</div>
<div class="fld" style="left:991px;top:307px;width:67px;height:14px;line-height:14px;padding-left:3px;color:#00f">&nbsp;0.000</div>
<div class="fld" style="left:1071px;top:307px;width:68px;height:14px;line-height:14px;padding-left:2px;color:#000">&nbsp;0.000</div>
<div class="t11" style="left:981px;top:323px;line-height:14px">z</div>
<div class="fld" style="left:991px;top:323px;width:67px;height:14px;line-height:14px;padding-left:3px;color:#00f">&nbsp;0.000</div>
<div class="fld" style="left:1071px;top:323px;width:68px;height:14px;line-height:14px;padding-left:2px;color:#000">-20.000</div>
<div class="t11" style="left:981px;top:339px;line-height:14px">a</div>
<div class="fld" style="left:991px;top:339px;width:67px;height:14px;line-height:14px;padding-left:3px;color:#00f">&nbsp;0.000</div>
<div class="fld" style="left:1071px;top:339px;width:68px;height:14px;line-height:14px;padding-left:2px;color:#000">&nbsp;0.000</div>
<div class="btn" style="left:996px;top:359px;width:57px;height:23px;line-height:21px;">Změnit</div>
<div class="btn" style="left:1076px;top:359px;width:57px;height:23px;line-height:21px;">Změnit</div>
<div class="grp" style="left:970px;top:397px;width:190px;height:137px"></div><div class="grpl" style="left:979px;top:391px;line-height:12px">Nalezená Minima - Maxima</div>
<div class="t11" style="left:1047px;top:411px">Globální</div>
<div class="t11" style="left:981px;top:427px;line-height:14px">x</div>
<div class="fld" style="left:991px;top:427px;width:42px;height:14px;line-height:14px;padding-left:5px;color:#f00">-3.323</div>
<div class="fld" style="left:1072px;top:427px;width:67px;height:14px;line-height:14px;padding-left:3px;color:#000">102.066</div>
<div class="t11" style="left:981px;top:443px;line-height:14px">y</div>
<div class="fld" style="left:991px;top:443px;width:42px;height:14px;line-height:14px;padding-left:5px;color:#f00">-3.040</div>
<div class="fld" style="left:1072px;top:443px;width:67px;height:14px;line-height:14px;padding-left:3px;color:#000">103.040</div>
<div class="t11" style="left:981px;top:459px;line-height:14px">z</div>
<div class="fld" style="left:991px;top:459px;width:67px;height:14px;line-height:14px;padding-left:2px;color:#000">-22.937</div>
<div class="fld" style="left:1072px;top:459px;width:67px;height:14px;line-height:14px;padding-left:3px;color:#000">&nbsp;&nbsp;0.000</div>
<div class="t11" style="left:981px;top:475px;line-height:14px">a</div>
<div class="fld" style="left:991px;top:475px;width:67px;height:14px;line-height:14px;padding-left:2px;color:#000">&nbsp;&nbsp;0.000</div>
<div class="fld" style="left:1072px;top:475px;width:67px;height:14px;line-height:14px;padding-left:3px;color:#000">&nbsp;&nbsp;0.000</div>
<div class="btn" style="left:1009px;top:499px;width:113px;height:23px;line-height:21px;">Lokální/Globální</div>
<div class="grp" style="left:970px;top:541px;width:190px;height:130px"></div><div class="grpl" style="left:976px;top:535px;line-height:12px">Referenční pojezdy</div>
<div class="t11" style="left:996px;top:555px">STAV</div><div class="t11" style="left:1056px;top:555px">VZDÁLENOST</div>
<div class="t11" style="left:976px;top:577px;font-size:12px">X</div><div class="t11" style="left:999px;top:577px">N/A</div>
<div class="t11" style="left:976px;top:601px;font-size:12px">Y</div><div class="t11" style="left:999px;top:601px">N/A</div>
<div class="t11" style="left:976px;top:625px;font-size:12px">Z</div><div class="t11" style="left:999px;top:625px">N/A</div>
<div class="t11" style="left:976px;top:649px;font-size:12px">A</div><div class="t11" style="left:999px;top:649px">N/A</div>
<div class="grp" style="left:970px;top:677px;width:190px;height:74px"></div><div class="grpl" style="left:976px;top:671px;line-height:12px">DATA</div>
<div class="btn" style="left:977px;top:687px;width:81px;height:23px;line-height:21px;">Otevřít 2D</div>
<div class="btn" style="left:1073px;top:687px;width:81px;height:23px;line-height:21px;">Otevřít 3D</div>
<div class="btn" style="left:977px;top:719px;width:81px;height:23px;line-height:21px;"><span style="color:#808080;text-shadow:1px 1px 0 #fff">Uložit</span></div>
<div class="btn" style="left:1073px;top:719px;width:81px;height:23px;line-height:21px;">Editovat</div>
<div class="btn" style="left:1093px;top:836px;width:60px;height:60px;line-height:58px;"><svg class="a" style="left:2px;top:2px" width="54" height="54" viewBox="0 0 54 54" fill="none" stroke="#828282" stroke-width="1.2" stroke-linejoin="miter">
 <path d="M9 5.5 H38.5 V2.5 L48 7 L38.5 11.5 V8.5 H9"/>
 <path d="M45.5 10 V38.5 H42.5 L47 48 L51.5 38.5 H48.5 V10"/>
 <path d="M40 45.5 H15.5 V41 L5.5 47 L15.5 52 V48.5 H40"/>
 <path d="M5.5 45 V15.5 H1.5 L7 5.5 L12 15.5 H8.5 V45"/>
 <path d="M25 18.5 H29.5 V35.5 H25"/>
</svg></div>
<div class="t11" style="left:1074px;top:921px">Made in Gravos (c)</div>
<!-- TASK MANAGER -->
<div class="a" style="left:1228px;top:627px;width:397px;height:7px;background:#5a5a5a;border-bottom:1px solid #1c1c1c;border-radius:0 0 5px 5px"></div>
<div class="a" style="left:1228px;top:183px;width:397px;height:446px;background:#d4d0c8;border-radius:5px 5px 0 0;border-left:1px solid #3c3c3c;border-right:1px solid #1c1c1c"></div>
<div class="a" style="left:1228px;top:183px;width:397px;height:26px;background:linear-gradient(#6c6c6c,#5c5c5c 50%,#545454);border-radius:5px 5px 0 0;border-top:1px solid #333"></div>
<svg class="a" style="left:1236px;top:189px" width="16" height="15" viewBox="0 0 16 15"><rect x=".5" y=".5" width="15" height="14" fill="#1d5fa8" stroke="#e8e8e8"/><rect x="2" y="2" width="12" height="11" fill="#2a74c0"/><path d="M2 8 H5 L6.5 4 L8.5 11 L10 7 H14" fill="none" stroke="#e8f080" stroke-width="1.1"/></svg>
<div class="ttl" style="left:1345px;top:186px;font-size:15.5px;letter-spacing:.5px;color:#f2f2f2">Task Manager</div>
<div class="wbtn" style="left:1542px;top:184px;width:22px;height:15px"><div class="a" style="left:5px;top:6px;width:10px;height:2px;background:#c8c8c8"></div></div>
<div class="wbtn" style="left:1566px;top:184px;width:22px;height:15px"><svg class="a" style="left:4px;top:3px" width="12" height="8"><path d="M1 7 L6 2 L11 7" fill="none" stroke="#c8c8c8" stroke-width="1.4"/></svg></div>
<div class="wbtn" style="left:1593px;top:184px;width:25px;height:19px"><svg class="a" style="left:6px;top:4px" width="11" height="11"><path d="M1 1 L10 10M10 1 L1 10" stroke="#c8c8c8" stroke-width="1.4"/></svg></div>
<div class="a" style="left:1233px;top:214px;font-size:11.2px;white-space:pre"><span class="a" style="left:0"><u>S</u>oubor</span><span class="a" style="left:46px"><u>N</u>astavení</span><span class="a" style="left:106px"><u>V</u>iew</span><span class="a" style="left:140px"><u>N</u>ápověda</span></div>
<div class="a" style="left:1229px;top:229px;width:395px;height:1px;background:#808080"></div><div class="a" style="left:1229px;top:230px;width:395px;height:1px;background:#fff"></div>
<div class="a" style="left:1233px;top:254px;width:387px;height:354px;border:1px solid;border-color:#fff #404040 #404040 #fff;box-shadow:inset -1px -1px 0 #808080"></div>
<div class="a" style="left:1235px;top:236px;width:57px;height:19px;border:1px solid;border-color:#fff #808080 transparent #fff;border-radius:2px 2px 0 0;font-size:11.2px;line-height:16px;padding-left:4px;white-space:pre">Programy</div>
<div class="a" style="left:1292px;top:234px;width:62px;height:22px;background:#d4d0c8;border:1px solid;border-color:#fff #404040 transparent #fff;border-bottom:none;border-radius:2px 2px 0 0;font-size:11.2px;line-height:17px;padding-left:5px;white-space:pre">Processes</div>
<div class="a" style="left:1354px;top:236px;width:73px;height:19px;border:1px solid;border-color:#fff #404040 transparent transparent;border-radius:0 2px 0 0;font-size:11.2px;line-height:16px;padding-left:2px;white-space:pre">Performance</div>
<div class="a" style="left:1254px;top:271px;width:350px;height:287px;background:#fff;border:1px solid;border-color:#808080 #fff #fff #808080;box-shadow:inset 1px 1px 0 #404040"></div>
<div class="btn" style="left:1256px;top:272px;width:104px;height:16px;line-height:14px;text-align:left;padding:0 6px;font-size:11.2px">Image Name</div>
<div class="btn" style="left:1360px;top:272px;width:51px;height:16px;line-height:14px;text-align:right;padding:0 5px;font-size:11.2px">PID</div>
<div class="btn" style="left:1411px;top:272px;width:34px;height:16px;line-height:14px;text-align:left;padding:0 6px;font-size:11.2px">C...</div>
<div class="btn" style="left:1445px;top:272px;width:71px;height:16px;line-height:14px;text-align:right;padding:0 5px;font-size:11.2px">CPU Time</div>
<div class="btn" style="left:1516px;top:272px;width:70px;height:16px;line-height:14px;text-align:left;padding:0 6px;font-size:11.2px">Mem Us...</div>
<div class="btn" style="left:1586px;top:272px;width:15px;height:16px;line-height:14px;text-align:left;padding:0 0px;font-size:11.2px"></div>
<div class="t11" style="left:1262px;top:289px;line-height:13px;font-size:11.2px">taskmgr.exe</div>
<div class="t11" style="left:1360px;top:289px;width:46px;text-align:right;line-height:13px;font-size:11.2px">8</div>
<div class="t11" style="left:1426px;top:289px;line-height:13px;font-size:11.2px">00</div>
<div class="t11" style="left:1445px;top:289px;width:66px;text-align:right;line-height:13px;font-size:11.2px">0:00:00</div>
<div class="t11" style="left:1516px;top:289px;width:64px;text-align:right;line-height:13px;font-size:11.2px">0 K</div>
<div class="t11" style="left:1262px;top:302px;line-height:13px;font-size:11.2px">services.exe</div>
<div class="t11" style="left:1360px;top:302px;width:46px;text-align:right;line-height:13px;font-size:11.2px">14</div>
<div class="t11" style="left:1426px;top:302px;line-height:13px;font-size:11.2px">00</div>
<div class="t11" style="left:1445px;top:302px;width:66px;text-align:right;line-height:13px;font-size:11.2px">0:00:00</div>
<div class="t11" style="left:1516px;top:302px;width:64px;text-align:right;line-height:13px;font-size:11.2px">0 K</div>
<div class="t11" style="left:1262px;top:315px;line-height:13px;font-size:11.2px">winedevice.exe</div>
<div class="t11" style="left:1360px;top:315px;width:46px;text-align:right;line-height:13px;font-size:11.2px">17</div>
<div class="t11" style="left:1426px;top:315px;line-height:13px;font-size:11.2px">00</div>
<div class="t11" style="left:1445px;top:315px;width:66px;text-align:right;line-height:13px;font-size:11.2px">0:00:00</div>
<div class="t11" style="left:1516px;top:315px;width:64px;text-align:right;line-height:13px;font-size:11.2px">0 K</div>
<div class="t11" style="left:1262px;top:328px;line-height:13px;font-size:11.2px">plugplay.exe</div>
<div class="t11" style="left:1360px;top:328px;width:46px;text-align:right;line-height:13px;font-size:11.2px">25</div>
<div class="t11" style="left:1426px;top:328px;line-height:13px;font-size:11.2px">00</div>
<div class="t11" style="left:1445px;top:328px;width:66px;text-align:right;line-height:13px;font-size:11.2px">0:00:00</div>
<div class="t11" style="left:1516px;top:328px;width:64px;text-align:right;line-height:13px;font-size:11.2px">0 K</div>
<div class="t11" style="left:1262px;top:341px;line-height:13px;font-size:11.2px">explorer.exe</div>
<div class="t11" style="left:1360px;top:341px;width:46px;text-align:right;line-height:13px;font-size:11.2px">30</div>
<div class="t11" style="left:1426px;top:341px;line-height:13px;font-size:11.2px">00</div>
<div class="t11" style="left:1445px;top:341px;width:66px;text-align:right;line-height:13px;font-size:11.2px">0:00:00</div>
<div class="t11" style="left:1516px;top:341px;width:64px;text-align:right;line-height:13px;font-size:11.2px">0 K</div>
<div class="t11" style="left:1262px;top:354px;line-height:13px;font-size:11.2px">armote.exe</div>
<div class="t11" style="left:1360px;top:354px;width:46px;text-align:right;line-height:13px;font-size:11.2px">59</div>
<div class="t11" style="left:1426px;top:354px;line-height:13px;font-size:11.2px">00</div>
<div class="t11" style="left:1445px;top:354px;width:66px;text-align:right;line-height:13px;font-size:11.2px">0:00:00</div>
<div class="t11" style="left:1516px;top:354px;width:64px;text-align:right;line-height:13px;font-size:11.2px">0 K</div>
<div class="t11" style="left:1262px;top:367px;line-height:13px;font-size:11.2px">explorer.exe</div>
<div class="t11" style="left:1360px;top:367px;width:46px;text-align:right;line-height:13px;font-size:11.2px">11</div>
<div class="t11" style="left:1426px;top:367px;line-height:13px;font-size:11.2px">00</div>
<div class="t11" style="left:1445px;top:367px;width:66px;text-align:right;line-height:13px;font-size:11.2px">0:00:00</div>
<div class="t11" style="left:1516px;top:367px;width:64px;text-align:right;line-height:13px;font-size:11.2px">0 K</div>
<div class="a" style="left:1254px;top:569px;width:13px;height:13px;background:#fff;border:1px solid;border-color:#808080 #fff #fff #808080;box-shadow:inset 1px 1px 0 #404040"></div>
<div class="t11" style="left:1272px;top:570px;font-size:11px;letter-spacing:-.1px"><u>S</u>how processes from all users</div>
<div class="btn" style="left:1500px;top:566px;width:104px;height:24px;line-height:21px;font-size:11.2px"><u>E</u>nd Process</div>
<div class="sunk" style="left:1229px;top:611px;width:99px;height:19px;line-height:17px;padding-left:2px;font-size:11.2px;white-space:pre">Processes: 7</div>
<div class="sunk" style="left:1331px;top:611px;width:107px;height:19px"></div>
<div class="sunk" style="left:1441px;top:611px;width:183px;height:19px;line-height:17px;padding-left:2px;font-size:11.2px;white-space:pre">Mem Usage: 0K / 0K</div>
<svg class="a" style="left:1610px;top:616px" width="13" height="13"><path d="M12 1 L1 12 M12 5 L5 12 M12 9 L9 12" stroke="#808080" stroke-width="1"/><path d="M12 2 L2 12 M12 6 L6 12 M12 10 L10 12" stroke="#fff" stroke-width="1"/></svg>
<!-- BOTTOM PANEL -->
<div class="a panel" style="top:1025px;height:25px;background:linear-gradient(#3a3a3a,#2e2e2e 30%,#2a2a2a);font-size:14.5px;border-top:1px solid #222">
 <div class="a" style="left:4px;top:5px;width:20px;height:16px;background:linear-gradient(#d070d8,#9a3aa8);border:1px solid #e8d0ee"></div>
 <div class="a" style="left:4px;top:5px;width:20px;height:3px;background:#f0e8c0"></div>
 <div class="a" style="left:7px;top:10px;width:3px;height:3px;background:#f4e0f8"></div><div class="a" style="left:7px;top:15px;width:3px;height:3px;background:#f4e0f8"></div>
 <svg class="a" style="left:30px;top:4px" width="6" height="18"><circle cx="3" cy="3" r="1.7" fill="#aaa"/><circle cx="3" cy="9" r="1.7" fill="#aaa"/><circle cx="3" cy="15" r="1.7" fill="#aaa"/></svg>
 <svg class="a" style="left:45px;top:4px" width="16" height="16" viewBox="0 0 24 23"><circle cx="12.5" cy="11" r="9" fill="#2a5a9a"/><path d="M3 8 C2 15 7 22 14 22 C20 22 23 16 22 10 C21 5 18 3 17 3 C20 7 20 12 17 16 C13 19 8 17 8 13 C10 14 12 14 13 13 C10 12 9 10 9 8 C8 6 9 4 10 3 C7 4 6 6 6 6 C5 4 6 2 6 2 C4 3 3 6 3 8Z" fill="#d9661c"/></svg>
 <div class="ptxt" style="left:70px;top:3px">[meebo.cz - online kli...</div>
 <div class="a" style="left:233px;top:1px;width:192px;height:23px;background:linear-gradient(#77706c,#66605c 50%,#5e5854);border:1px solid #4a4542;border-radius:2px"></div>
 <svg class="a" style="left:242px;top:5px" width="15" height="14" viewBox="0 0 16 15"><rect x=".5" y=".5" width="15" height="14" fill="#1d5fa8" stroke="#e8e8e8"/><path d="M2 8 H5 L6.5 4 L8.5 11 L10 7 H14" fill="none" stroke="#e8f080" stroke-width="1.1"/></svg>
 <div class="ptxt" style="left:264px;top:3px;color:#f0ece4">Task Manager</div>
 <svg class="a" style="left:434px;top:5px" width="16" height="14" viewBox="0 0 16 14"><rect x=".5" y=".5" width="15" height="13" fill="#111" stroke="#ccc"/><path d="M3 3 L6.5 5.5 L3 8" fill="none" stroke="#ddd"/><path d="M6 10.5h5.5" stroke="#ddd" stroke-width="1.2"/></svg>
 <div class="ptxt" style="left:458px;top:3px">gravos@gravos-mac...</div>
 <svg class="a" style="left:630px;top:3px" width="12" height="19" viewBox="0 0 12 20"><path d="M2 1 H10 C11 5 11 9 6 11 C1 9 1 5 2 1Z" fill="#ddd"/><path d="M2.3 5 H9.7 C10 8 9 10 6 11 C3 10 2 8 2.3 5Z" fill="#c8102e"/><rect x="5.3" y="11" width="1.4" height="5" fill="#bbb"/><ellipse cx="6" cy="17" rx="3.5" ry="1.3" fill="#ccc"/></svg>
 <div class="ptxt" style="left:652px;top:3px">Armote.exe - Wine de...</div>
 <div class="a" style="left:1520px;top:2px;width:133px;height:22px;background:#2a2a2a;border:1px solid #777"></div>
 <div class="a" style="left:1521px;top:3px;width:32px;height:20px;background:#707070"></div>
 <div class="a" style="left:1586px;top:3px;width:1px;height:20px;background:#555"></div><div class="a" style="left:1619px;top:3px;width:1px;height:20px;background:#555"></div>
 <div class="a" style="left:1521px;top:4px;width:13px;height:9px;background:#aaa;border:1px solid #000"></div>
 <div class="a" style="left:1524px;top:6px;width:20px;height:14px;background:#a8a6a6;border:1px solid #000"></div>
 <div class="a" style="left:1545px;top:6px;width:8px;height:9px;background:#d0d0d0;border:1px solid #000"></div>
 <svg class="a" style="left:1657px;top:2px" width="20" height="23" viewBox="0 0 20 23"><path d="M2 3 H18 L16 21 H4Z" fill="#555" stroke="#c8c8c8" stroke-width="1.1"/><ellipse cx="10" cy="3.5" rx="8" ry="2" fill="#777" stroke="#ddd"/></svg>
</div>
<!-- CURSOR -->
<svg class="a" style="left:1351px;top:774px" width="14" height="22" viewBox="0 0 14 22"><path d="M1 1 V17 L5 13.5 L8 20.5 L10.5 19.5 L7.5 12.5 H12.5Z" fill="#fff" stroke="#000" stroke-width="1.2" stroke-linejoin="round"/></svg>
</body></html>
